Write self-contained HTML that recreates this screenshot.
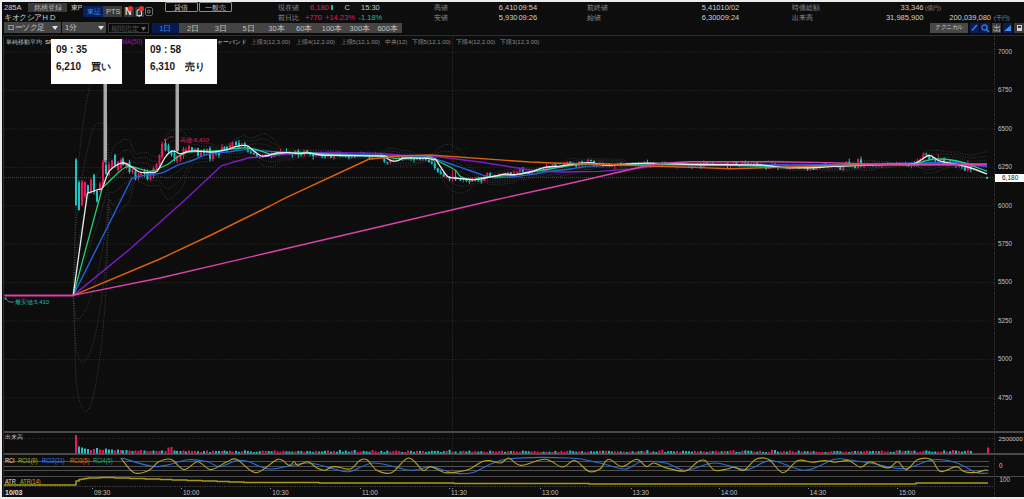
<!DOCTYPE html>
<html><head><meta charset="utf-8"><style>
html,body{margin:0;padding:0;width:1024px;height:499px;overflow:hidden;background:#ececec;font-family:'Liberation Sans',sans-serif}
#app{position:absolute;left:2px;top:2px;width:1022px;height:495px;background:#0d0d0d;overflow:hidden}
#root{position:absolute;left:-2px;top:-2px;width:1024px;height:499px}
</style></head><body>
<div id="app"><div id="root">

<svg width="1024" height="499" style="position:absolute;left:0;top:0">
<g shape-rendering="crispEdges">
  <line x1="3.5" y1="35.5" x2="1024" y2="35.5" stroke="#2e2e2e" stroke-width="1"/>
  <line x1="3.5" y1="35.5" x2="3.5" y2="497" stroke="#2e2e2e" stroke-width="1"/>
  <line x1="994.5" y1="35.5" x2="994.5" y2="497" stroke="#343434" stroke-width="1" stroke-dasharray="1.5 1"/>
</g>
<line x1="4" y1="397.8" x2="994" y2="397.8" stroke="#282828" stroke-width="1" stroke-dasharray="1 1.2"/><line x1="4" y1="359.4" x2="994" y2="359.4" stroke="#282828" stroke-width="1" stroke-dasharray="1 1.2"/><line x1="4" y1="321.0" x2="994" y2="321.0" stroke="#282828" stroke-width="1" stroke-dasharray="1 1.2"/><line x1="4" y1="282.6" x2="994" y2="282.6" stroke="#282828" stroke-width="1" stroke-dasharray="1 1.2"/><line x1="4" y1="244.2" x2="994" y2="244.2" stroke="#282828" stroke-width="1" stroke-dasharray="1 1.2"/><line x1="4" y1="205.8" x2="994" y2="205.8" stroke="#282828" stroke-width="1" stroke-dasharray="1 1.2"/><line x1="4" y1="167.4" x2="994" y2="167.4" stroke="#282828" stroke-width="1" stroke-dasharray="1 1.2"/><line x1="4" y1="129.0" x2="994" y2="129.0" stroke="#282828" stroke-width="1" stroke-dasharray="1 1.2"/><line x1="4" y1="90.6" x2="994" y2="90.6" stroke="#282828" stroke-width="1" stroke-dasharray="1 1.2"/><line x1="4" y1="52.2" x2="994" y2="52.2" stroke="#282828" stroke-width="1" stroke-dasharray="1 1.2"/>
<line x1="452.5" y1="36" x2="452.5" y2="487" stroke="#2e2e2e" stroke-width="1" stroke-dasharray="1 1.5"/>
<line x1="4" y1="177.6" x2="994" y2="177.6" stroke="#484848" stroke-width="1" stroke-dasharray="1 1"/>
<path d="M73.2,295.4 L76.0,381.6 C76.5,384.2 78.1,394.8 79.0,398.8 C79.9,402.7 81.1,405.9 82.0,407.8 C82.9,409.7 84.1,411.2 85.0,411.4 C85.9,411.7 87.1,410.9 88.0,409.7 C88.9,408.6 90.1,406.2 91.0,403.7 C91.9,401.3 93.1,397.4 94.0,393.4 C94.9,389.4 96.1,382.5 97.0,376.9 C97.9,371.2 99.1,363.1 100.0,355.9 C100.9,348.7 102.1,338.6 103.0,328.7 C103.9,318.8 105.1,307.2 106.0,289.7 C106.9,272.1 108.1,222.8 109.0,211.6 C109.9,200.4 111.1,214.5 112.0,214.9 C112.9,215.4 114.1,215.2 115.0,214.8 C115.9,214.4 117.1,212.8 118.0,212.1 C118.9,211.4 120.2,210.8 121.0,210.0 C121.8,209.3 122.2,208.1 123.0,207.2 C123.8,206.3 125.5,204.9 126.5,204.0 C127.5,203.0 128.6,203.3 129.5,200.9 C130.4,198.5 131.6,191.2 132.5,188.1 C133.4,185.0 134.6,181.3 135.5,180.4 C136.4,179.4 137.7,181.3 138.5,181.7 C139.3,182.1 140.1,182.6 141.0,182.8 C141.9,183.1 143.5,183.2 144.5,183.5 C145.5,183.9 146.6,184.9 147.5,185.2 C148.4,185.5 149.6,185.7 150.5,185.7 C151.4,185.8 152.6,185.8 153.5,185.7 C154.4,185.7 155.6,185.2 156.5,185.3 C157.4,185.3 158.7,185.1 159.5,186.1 C160.3,187.2 161.1,190.5 162.0,192.2 C162.9,194.0 164.5,196.5 165.5,197.6 C166.5,198.8 167.6,199.6 168.5,199.7 C169.4,199.8 170.6,199.0 171.5,198.4 C172.4,197.7 173.7,196.3 174.5,195.5 C175.3,194.6 176.1,193.6 177.0,192.8 C177.9,192.0 179.5,191.1 180.5,190.0 C181.5,188.8 182.7,187.1 183.5,185.1 C184.3,183.2 185.2,179.4 186.0,177.2 C186.8,174.9 188.1,172.1 189.0,170.3 C189.9,168.5 191.1,166.4 192.0,165.2 C192.9,164.0 194.1,163.0 195.0,162.6 C195.9,162.2 197.1,162.7 198.0,162.6 C198.9,162.5 200.1,162.1 201.0,162.0 C201.9,161.8 203.1,161.7 204.0,161.6 C204.9,161.6 206.1,161.6 207.0,161.5 C207.9,161.5 209.1,161.3 210.0,161.0 C210.9,160.8 212.1,160.2 213.0,159.7 C213.9,159.2 215.1,157.9 216.0,157.6 C216.9,157.3 218.1,157.8 219.0,157.8 C219.9,157.9 221.2,158.0 222.0,158.1 C222.8,158.1 223.8,158.2 224.5,158.2 C225.2,158.3 226.2,158.2 227.0,158.4 C227.8,158.5 229.2,158.9 230.0,159.2 C230.8,159.5 231.6,160.2 232.5,160.5 C233.4,160.7 235.0,160.8 236.0,160.9 C237.0,161.0 238.1,161.0 239.0,161.0 C239.9,161.0 241.1,161.3 242.0,161.1 C242.8,161.0 244.0,160.5 244.9,159.9 C245.8,159.3 247.0,157.4 247.9,157.0 C248.8,156.5 250.0,156.9 250.9,156.9 C251.7,156.9 252.9,156.5 253.8,156.9 C254.7,157.3 255.9,158.6 256.8,159.5 C257.7,160.3 258.9,161.7 259.8,162.5 C260.6,163.3 261.8,164.3 262.7,164.9 C263.6,165.4 264.8,165.9 265.7,166.2 C266.6,166.4 267.8,166.5 268.7,166.6 C269.5,166.6 270.7,166.7 271.6,166.6 C272.5,166.5 273.7,166.3 274.6,165.9 C275.5,165.4 276.7,164.5 277.6,163.8 C278.4,163.0 279.6,161.5 280.5,161.0 C281.4,160.4 282.6,160.0 283.5,159.8 C284.4,159.7 285.6,159.9 286.5,159.9 C287.3,159.9 288.5,159.9 289.4,159.8 C290.3,159.8 291.5,159.9 292.4,159.8 C293.3,159.7 294.5,159.4 295.4,159.1 C296.2,158.9 297.4,158.3 298.3,158.2 C299.2,158.0 300.4,158.0 301.3,158.0 C302.2,157.9 303.4,157.8 304.3,157.6 C305.1,157.4 306.3,156.8 307.2,156.6 C308.1,156.4 309.3,156.2 310.2,156.2 C311.1,156.2 312.3,156.7 313.2,156.8 C314.1,156.9 315.2,157.0 316.1,157.0 C317.0,157.1 318.2,157.0 319.1,157.0 C320.0,157.1 321.2,157.3 322.1,157.5 C323.0,157.7 324.1,158.3 325.0,158.4 C325.9,158.6 327.1,158.3 328.0,158.3 C328.9,158.3 330.1,158.4 331.0,158.4 C331.9,158.5 333.0,158.5 333.9,158.5 C334.8,158.5 336.0,158.5 336.9,158.4 C337.8,158.4 339.0,158.4 339.9,158.2 C340.8,158.1 341.9,157.7 342.8,157.6 C343.7,157.5 344.9,157.5 345.8,157.6 C346.7,157.6 347.9,158.0 348.8,158.1 C349.7,158.2 350.8,158.3 351.7,158.3 C352.6,158.3 353.8,158.2 354.7,158.2 C355.6,158.2 356.8,158.2 357.7,158.2 C358.6,158.2 359.7,158.1 360.6,158.1 C361.5,158.1 362.7,158.3 363.6,158.3 C364.5,158.3 365.7,158.3 366.6,158.3 C367.5,158.4 368.6,158.6 369.5,158.7 C370.4,158.7 371.6,158.6 372.5,158.6 C373.4,158.6 374.6,158.6 375.5,158.6 C376.4,158.6 377.5,158.7 378.4,158.7 C379.3,158.7 380.5,158.4 381.4,158.6 C382.3,158.9 383.5,159.6 384.4,160.4 C385.3,161.1 386.4,162.9 387.3,163.6 C388.2,164.3 389.4,164.7 390.3,165.1 C391.2,165.4 392.4,165.7 393.3,165.9 C394.2,166.1 395.3,166.2 396.2,166.2 C397.1,166.2 398.3,165.9 399.2,165.9 C400.1,165.8 401.3,165.8 402.2,165.8 C403.1,165.8 404.2,165.8 405.1,165.8 C406.0,165.8 407.2,165.8 408.1,165.7 C409.0,165.7 410.2,165.5 411.1,165.3 C412.0,165.1 413.1,164.8 414.0,164.6 C414.9,164.4 416.1,164.1 417.0,164.0 C417.9,163.9 419.1,164.2 420.0,163.9 C420.9,163.7 422.0,162.8 422.9,162.5 C423.8,162.1 425.0,161.8 425.9,161.7 C426.8,161.7 428.0,161.8 428.9,162.0 C429.8,162.3 430.9,162.8 431.8,163.5 C432.7,164.2 433.9,165.6 434.8,166.8 C435.7,168.0 436.9,170.1 437.8,171.6 C438.7,173.1 439.9,175.2 440.7,176.6 C441.6,178.1 442.8,179.9 443.7,181.2 C444.6,182.5 445.8,184.2 446.7,185.3 C447.6,186.4 448.8,187.9 449.6,188.7 C450.5,189.6 451.7,190.4 452.6,190.9 C453.5,191.4 454.4,191.7 455.6,192.0 C456.8,192.4 459.3,193.0 460.5,193.1 C461.7,193.2 462.6,192.9 463.5,192.7 C464.4,192.4 465.5,191.9 466.4,191.5 C467.3,191.0 468.5,190.4 469.4,189.8 C470.3,189.1 471.5,187.9 472.4,187.2 C473.3,186.5 474.4,185.6 475.3,185.0 C476.2,184.4 477.4,183.8 478.3,183.5 C479.2,183.2 480.4,183.1 481.3,183.0 C482.2,182.9 483.3,182.7 484.2,182.7 C485.1,182.8 486.3,183.3 487.2,183.6 C488.1,183.8 489.3,184.3 490.2,184.5 C491.1,184.7 492.2,184.6 493.1,184.7 C494.0,184.7 495.2,184.7 496.1,184.8 C497.0,184.8 498.2,185.0 499.1,185.0 C500.0,185.0 501.1,185.1 502.0,184.9 C502.9,184.8 504.1,184.1 505.0,183.9 C505.9,183.7 507.1,183.6 508.0,183.5 C508.9,183.4 510.0,183.4 510.9,183.2 C511.8,183.0 513.0,182.8 513.9,182.4 C514.8,182.0 516.0,181.0 516.9,180.6 C517.8,180.1 518.9,179.4 519.8,179.3 C520.7,179.2 521.9,179.6 522.8,179.6 C523.7,179.6 524.9,179.6 525.8,179.4 C526.7,179.2 527.9,178.6 528.7,178.3 C529.6,178.0 530.8,177.7 531.7,177.5 C532.6,177.3 533.8,177.1 534.7,177.0 C535.6,176.9 536.8,176.8 537.6,176.7 C538.5,176.7 539.7,176.6 540.6,176.6 C541.5,176.5 542.7,176.5 543.6,176.4 C544.5,176.3 545.7,176.1 546.5,176.0 C547.4,175.9 548.6,175.7 549.5,175.7 C550.4,175.8 551.6,176.0 552.5,176.2 C553.4,176.3 554.6,176.6 555.4,176.7 C556.3,176.8 557.5,176.8 558.4,176.7 C559.3,176.6 560.5,176.4 561.4,176.2 C562.3,176.0 563.5,175.6 564.3,175.4 C565.2,175.2 566.4,175.2 567.3,175.1 C568.2,175.0 569.4,174.8 570.3,174.6 C571.2,174.4 572.4,174.0 573.2,173.8 C574.1,173.5 575.3,173.4 576.2,173.0 C577.1,172.7 578.3,172.1 579.2,171.7 C580.1,171.2 581.3,170.7 582.1,170.4 C583.0,170.0 584.2,169.7 585.1,169.5 C586.0,169.4 587.2,169.5 588.1,169.5 C589.0,169.5 590.2,169.7 591.0,169.4 C591.9,169.2 593.1,168.0 594.0,167.7 C594.9,167.4 596.1,167.5 597.0,167.4 C597.9,167.4 599.1,167.5 599.9,167.6 C600.8,167.6 602.0,167.7 602.9,167.7 C603.8,167.7 605.0,167.8 605.9,167.8 C606.8,167.9 608.0,167.9 608.9,167.9 C609.7,167.9 610.9,168.0 611.8,168.1 C612.7,168.1 613.9,168.2 614.8,168.3 C615.7,168.3 616.9,168.3 617.8,168.3 C618.6,168.3 619.8,168.3 620.7,168.3 C621.6,168.2 622.8,168.1 623.7,167.9 C624.6,167.6 625.8,166.8 626.7,166.6 C627.5,166.3 628.7,166.5 629.6,166.4 C630.5,166.3 631.7,165.9 632.6,165.8 C633.5,165.8 634.7,165.8 635.6,165.8 C636.4,165.8 637.6,165.8 638.5,165.9 C639.4,165.9 640.6,165.8 641.5,165.8 C642.4,165.8 643.6,165.9 644.5,165.8 C645.3,165.7 646.5,165.3 647.4,165.1 C648.3,165.0 649.5,164.9 650.4,164.8 C651.3,164.8 652.5,164.8 653.4,164.9 C654.2,164.9 655.4,165.0 656.3,165.0 C657.2,165.1 658.4,165.3 659.3,165.4 C660.2,165.4 661.4,165.4 662.3,165.5 C663.1,165.5 664.3,165.6 665.2,165.7 C666.1,165.7 667.3,165.6 668.2,165.7 C669.1,165.7 670.3,165.6 671.2,165.8 C672.0,165.9 673.2,166.3 674.1,166.5 C675.0,166.7 676.2,166.9 677.1,167.0 C678.0,167.1 679.2,167.0 680.1,167.0 C680.9,167.0 682.1,167.0 683.0,167.0 C683.9,167.0 685.1,167.0 686.0,167.0 C686.9,167.0 688.1,167.0 689.0,167.1 C689.8,167.1 691.0,167.2 691.9,167.3 C692.8,167.3 694.0,167.4 694.9,167.4 C695.8,167.4 697.0,167.4 697.9,167.4 C698.8,167.4 699.9,167.3 700.8,167.3 C701.7,167.3 702.9,167.2 703.8,167.2 C704.7,167.3 705.9,167.5 706.8,167.5 C707.7,167.4 708.8,167.2 709.7,167.2 C710.6,167.1 711.8,166.9 712.7,166.8 C713.6,166.8 714.8,166.9 715.7,166.9 C716.6,166.9 717.7,166.8 718.6,166.8 C719.5,166.8 720.7,166.7 721.6,166.7 C722.5,166.7 723.7,166.7 724.6,166.7 C725.5,166.7 726.6,166.6 727.5,166.5 C728.4,166.4 729.6,166.3 730.5,166.2 C731.4,166.2 732.6,166.5 733.5,166.4 C734.4,166.3 735.5,165.8 736.4,165.8 C737.3,165.8 738.5,166.3 739.4,166.4 C740.3,166.4 741.5,166.3 742.4,166.3 C743.3,166.3 744.4,166.5 745.3,166.6 C746.2,166.6 747.4,166.6 748.3,166.6 C749.2,166.6 750.4,166.6 751.3,166.5 C752.2,166.5 753.3,166.5 754.2,166.5 C755.1,166.5 756.3,166.4 757.2,166.4 C758.1,166.4 759.3,166.5 760.2,166.5 C761.1,166.5 762.2,166.4 763.1,166.5 C764.0,166.7 765.2,167.4 766.1,167.6 C767.0,167.9 768.2,168.4 769.1,168.5 C770.0,168.6 771.1,168.5 772.0,168.5 C772.9,168.4 774.1,168.2 775.0,168.3 C775.9,168.3 777.1,168.5 778.0,168.6 C778.9,168.8 780.0,169.1 780.9,169.2 C781.8,169.3 783.0,169.2 783.9,169.3 C784.8,169.4 786.0,169.5 786.9,169.7 C787.8,169.9 788.9,170.4 789.8,170.5 C790.7,170.7 791.9,170.5 792.8,170.4 C793.7,170.4 794.9,170.3 795.8,170.3 C796.7,170.2 797.8,170.1 798.7,170.1 C799.6,170.1 800.8,170.2 801.7,170.3 C802.6,170.3 803.8,170.3 804.7,170.3 C805.6,170.3 806.7,170.5 807.6,170.4 C808.5,170.3 809.7,169.8 810.6,169.7 C811.5,169.5 812.7,169.5 813.6,169.6 C814.5,169.6 815.6,169.9 816.5,169.9 C817.4,170.0 818.6,169.7 819.5,169.8 C820.4,170.0 821.6,170.5 822.5,170.7 C823.4,170.9 824.6,170.9 825.4,170.9 C826.3,171.0 827.5,170.9 828.4,170.9 C829.3,170.9 830.5,171.0 831.4,171.0 C832.3,171.0 833.5,171.0 834.3,171.0 C835.2,171.0 836.4,170.9 837.3,170.9 C838.2,170.9 839.4,171.1 840.3,171.1 C841.2,171.1 842.4,170.8 843.2,170.8 C844.1,170.8 845.3,170.9 846.2,170.9 C847.1,170.9 848.3,170.8 849.2,170.7 C850.1,170.5 851.3,169.9 852.1,169.8 C853.0,169.6 854.2,169.8 855.1,169.8 C856.0,169.8 857.2,169.9 858.1,170.0 C859.0,170.1 860.2,170.4 861.0,170.4 C861.9,170.5 863.1,170.4 864.0,170.4 C864.9,170.4 866.1,170.4 867.0,170.4 C867.9,170.4 869.1,170.4 869.9,170.4 C870.8,170.3 872.0,170.4 872.9,170.2 C873.8,170.0 875.0,169.5 875.9,169.2 C876.8,168.8 878.0,168.1 878.8,168.0 C879.7,167.8 880.9,168.1 881.8,168.1 C882.7,168.1 883.9,168.2 884.8,168.1 C885.7,168.1 886.9,168.0 887.7,167.8 C888.6,167.6 889.8,167.1 890.7,166.9 C891.6,166.8 892.8,167.0 893.7,166.9 C894.6,166.7 895.8,166.4 896.6,166.2 C897.5,166.1 898.7,166.1 899.6,166.0 C900.5,166.0 901.7,166.0 902.6,166.0 C903.5,166.0 904.7,165.9 905.5,165.9 C906.4,166.0 907.6,166.1 908.5,166.1 C909.4,166.2 910.6,166.2 911.5,166.2 C912.4,166.2 913.6,166.3 914.5,166.3 C915.3,166.4 916.5,166.3 917.4,166.7 C918.3,167.0 919.5,167.8 920.4,168.5 C921.3,169.2 922.5,170.4 923.4,171.1 C924.2,171.8 925.4,172.9 926.3,173.2 C927.2,173.5 928.4,173.3 929.3,173.2 C930.2,173.1 931.4,172.9 932.3,172.7 C933.1,172.5 934.3,172.2 935.2,171.9 C936.1,171.7 937.3,171.4 938.2,171.1 C939.1,170.9 940.3,170.5 941.2,170.2 C942.0,169.8 943.2,168.9 944.1,168.6 C945.0,168.3 946.2,168.2 947.1,168.0 C948.0,167.8 949.2,167.5 950.1,167.3 C950.9,167.2 952.1,166.9 953.0,167.0 C953.9,167.1 955.1,167.7 956.0,168.1 C956.9,168.5 958.1,169.3 959.0,169.5 C959.8,169.7 961.0,169.1 961.9,169.3 C962.8,169.5 964.0,170.5 964.9,170.9 C965.8,171.3 967.0,171.6 967.9,171.9 C968.7,172.1 968.0,171.4 970.8,172.5 C973.7,173.6 984.6,178.1 987.0,179.1" fill="none" stroke="#5a5a5a" stroke-width="0.8" stroke-linejoin="round" stroke-dasharray="1 1.5" opacity="0.75"/>
<path d="M73.2,295.4 L76.0,350.0 C76.5,351.3 78.1,356.9 79.0,358.7 C79.9,360.5 81.1,361.4 82.0,361.8 C82.9,362.2 84.1,362.0 85.0,361.3 C85.9,360.6 87.1,358.8 88.0,357.2 C88.9,355.5 90.1,352.7 91.0,350.1 C91.9,347.6 93.1,343.7 94.0,340.1 C94.9,336.5 96.1,330.9 97.0,326.3 C97.9,321.7 99.1,315.0 100.0,309.2 C100.9,303.5 102.1,295.4 103.0,287.7 C103.9,280.1 105.1,270.9 106.0,258.2 C106.9,245.4 108.1,210.7 109.0,202.6 C109.9,194.5 111.1,204.2 112.0,204.3 C112.9,204.4 114.1,203.8 115.0,203.2 C115.9,202.7 117.1,201.4 118.0,200.7 C118.9,200.0 120.2,199.3 121.0,198.6 C121.8,197.9 122.2,196.8 123.0,195.9 C123.8,195.1 125.5,194.0 126.5,193.2 C127.5,192.4 128.6,192.5 129.5,190.7 C130.4,189.0 131.6,183.7 132.5,181.5 C133.4,179.3 134.6,176.7 135.5,176.0 C136.4,175.3 137.7,176.7 138.5,177.0 C139.3,177.2 140.1,177.6 141.0,177.8 C141.9,178.1 143.5,178.1 144.5,178.4 C145.5,178.7 146.6,179.5 147.5,179.8 C148.4,180.1 149.6,180.5 150.5,180.6 C151.4,180.8 152.6,180.8 153.5,180.8 C154.4,180.8 155.6,180.5 156.5,180.6 C157.4,180.6 158.7,180.5 159.5,181.1 C160.3,181.7 161.1,183.7 162.0,184.7 C162.9,185.7 164.5,187.2 165.5,187.8 C166.5,188.3 167.6,188.6 168.5,188.5 C169.4,188.4 170.6,187.6 171.5,187.0 C172.4,186.4 173.7,185.2 174.5,184.5 C175.3,183.8 176.1,183.0 177.0,182.3 C177.9,181.7 179.5,181.0 180.5,180.0 C181.5,179.1 182.7,177.6 183.5,176.2 C184.3,174.7 185.2,171.8 186.0,170.1 C186.8,168.4 188.1,166.3 189.0,164.9 C189.9,163.5 191.1,161.9 192.0,161.0 C192.9,160.1 194.1,159.3 195.0,159.0 C195.9,158.7 197.1,159.1 198.0,159.1 C198.9,159.0 200.1,158.9 201.0,158.8 C201.9,158.8 203.1,158.7 204.0,158.7 C204.9,158.6 206.1,158.6 207.0,158.5 C207.9,158.5 209.1,158.3 210.0,158.1 C210.9,157.9 212.1,157.5 213.0,157.2 C213.9,156.8 215.1,155.8 216.0,155.6 C216.9,155.4 218.1,155.8 219.0,155.8 C219.9,155.9 221.2,155.9 222.0,155.9 C222.8,156.0 223.8,156.0 224.5,156.0 C225.2,156.0 226.2,156.0 227.0,156.1 C227.8,156.2 229.2,156.4 230.0,156.5 C230.8,156.7 231.6,157.1 232.5,157.2 C233.4,157.3 235.0,157.2 236.0,157.2 C237.0,157.2 238.1,157.1 239.0,157.1 C239.9,157.0 241.1,157.1 242.0,157.0 C242.8,156.8 244.0,156.4 244.9,155.9 C245.8,155.4 247.0,154.1 247.9,153.8 C248.8,153.4 250.0,153.7 250.9,153.7 C251.7,153.7 252.9,153.4 253.8,153.7 C254.7,154.0 255.9,155.0 256.8,155.6 C257.7,156.2 258.9,157.3 259.8,157.9 C260.6,158.5 261.8,159.3 262.7,159.7 C263.6,160.1 264.8,160.6 265.7,160.8 C266.6,161.1 267.8,161.2 268.7,161.4 C269.5,161.5 270.7,161.7 271.6,161.8 C272.5,161.8 273.7,161.8 274.6,161.6 C275.5,161.4 276.7,160.8 277.6,160.4 C278.4,160.0 279.6,159.1 280.5,158.7 C281.4,158.4 282.6,158.2 283.5,158.1 C284.4,158.0 285.6,158.1 286.5,158.1 C287.3,158.1 288.5,158.1 289.4,158.1 C290.3,158.1 291.5,158.1 292.4,158.1 C293.3,158.0 294.5,157.7 295.4,157.5 C296.2,157.3 297.4,156.8 298.3,156.7 C299.2,156.6 300.4,156.6 301.3,156.6 C302.2,156.5 303.4,156.4 304.3,156.3 C305.1,156.1 306.3,155.6 307.2,155.5 C308.1,155.3 309.3,155.1 310.2,155.1 C311.1,155.2 312.3,155.5 313.2,155.6 C314.1,155.7 315.2,155.8 316.1,155.8 C317.0,155.9 318.2,155.8 319.1,155.9 C320.0,156.0 321.2,156.1 322.1,156.3 C323.0,156.5 324.1,156.9 325.0,157.0 C325.9,157.1 327.1,156.9 328.0,156.9 C328.9,156.9 330.1,157.0 331.0,157.1 C331.9,157.1 333.0,157.2 333.9,157.2 C334.8,157.2 336.0,157.1 336.9,157.1 C337.8,157.1 339.0,157.1 339.9,157.0 C340.8,157.0 341.9,156.7 342.8,156.7 C343.7,156.7 344.9,156.7 345.8,156.8 C346.7,156.8 347.9,157.1 348.8,157.2 C349.7,157.3 350.8,157.4 351.7,157.4 C352.6,157.4 353.8,157.4 354.7,157.3 C355.6,157.3 356.8,157.4 357.7,157.3 C358.6,157.3 359.7,157.2 360.6,157.2 C361.5,157.2 362.7,157.3 363.6,157.3 C364.5,157.3 365.7,157.3 366.6,157.3 C367.5,157.4 368.6,157.5 369.5,157.6 C370.4,157.6 371.6,157.6 372.5,157.6 C373.4,157.6 374.6,157.6 375.5,157.6 C376.4,157.6 377.5,157.6 378.4,157.6 C379.3,157.6 380.5,157.4 381.4,157.6 C382.3,157.8 383.5,158.3 384.4,158.8 C385.3,159.3 386.4,160.6 387.3,161.2 C388.2,161.7 389.4,162.0 390.3,162.3 C391.2,162.5 392.4,162.8 393.3,162.9 C394.2,163.1 395.3,163.3 396.2,163.3 C397.1,163.4 398.3,163.2 399.2,163.2 C400.1,163.2 401.3,163.2 402.2,163.2 C403.1,163.2 404.2,163.3 405.1,163.3 C406.0,163.3 407.2,163.3 408.1,163.3 C409.0,163.2 410.2,163.1 411.1,163.0 C412.0,162.9 413.1,162.8 414.0,162.7 C414.9,162.6 416.1,162.5 417.0,162.4 C417.9,162.3 419.1,162.5 420.0,162.3 C420.9,162.1 422.0,161.5 422.9,161.2 C423.8,161.0 425.0,160.7 425.9,160.7 C426.8,160.6 428.0,160.7 428.9,160.9 C429.8,161.1 430.9,161.4 431.8,161.9 C432.7,162.5 433.9,163.5 434.8,164.4 C435.7,165.2 436.9,166.8 437.8,167.9 C438.7,169.0 439.9,170.6 440.7,171.7 C441.6,172.8 442.8,174.2 443.7,175.3 C444.6,176.3 445.8,177.6 446.7,178.5 C447.6,179.4 448.8,180.6 449.6,181.3 C450.5,182.0 451.7,182.8 452.6,183.3 C453.5,183.8 454.4,184.2 455.6,184.6 C456.8,185.0 459.3,185.7 460.5,185.9 C461.7,186.1 462.6,186.2 463.5,186.2 C464.4,186.2 465.5,186.0 466.4,185.9 C467.3,185.8 468.5,185.6 469.4,185.3 C470.3,185.0 471.5,184.4 472.4,184.0 C473.3,183.6 474.4,183.1 475.3,182.8 C476.2,182.5 477.4,182.1 478.3,181.9 C479.2,181.8 480.4,181.8 481.3,181.8 C482.2,181.7 483.3,181.6 484.2,181.6 C485.1,181.7 486.3,182.0 487.2,182.1 C488.1,182.3 489.3,182.6 490.2,182.7 C491.1,182.8 492.2,182.8 493.1,182.8 C494.0,182.8 495.2,182.7 496.1,182.7 C497.0,182.7 498.2,182.8 499.1,182.7 C500.0,182.7 501.1,182.7 502.0,182.5 C502.9,182.4 504.1,181.9 505.0,181.7 C505.9,181.5 507.1,181.4 508.0,181.2 C508.9,181.1 510.0,181.0 510.9,180.9 C511.8,180.7 513.0,180.5 513.9,180.2 C514.8,179.9 516.0,179.1 516.9,178.7 C517.8,178.4 518.9,177.8 519.8,177.6 C520.7,177.5 521.9,177.7 522.8,177.7 C523.7,177.6 524.9,177.6 525.8,177.4 C526.7,177.3 527.9,176.8 528.7,176.6 C529.6,176.4 530.8,176.1 531.7,176.0 C532.6,175.8 533.8,175.7 534.7,175.6 C535.6,175.4 536.8,175.3 537.6,175.3 C538.5,175.2 539.7,175.1 540.6,175.0 C541.5,175.0 542.7,174.9 543.6,174.8 C544.5,174.7 545.7,174.5 546.5,174.4 C547.4,174.3 548.6,174.1 549.5,174.1 C550.4,174.0 551.6,174.1 552.5,174.2 C553.4,174.2 554.6,174.4 555.4,174.4 C556.3,174.4 557.5,174.4 558.4,174.3 C559.3,174.3 560.5,174.1 561.4,173.9 C562.3,173.7 563.5,173.3 564.3,173.1 C565.2,172.9 566.4,172.8 567.3,172.6 C568.2,172.4 569.4,172.2 570.3,172.0 C571.2,171.8 572.4,171.4 573.2,171.2 C574.1,171.1 575.3,170.9 576.2,170.6 C577.1,170.4 578.3,169.9 579.2,169.6 C580.1,169.2 581.3,168.8 582.1,168.5 C583.0,168.3 584.2,168.0 585.1,167.9 C586.0,167.7 587.2,167.8 588.1,167.7 C589.0,167.7 590.2,167.7 591.0,167.5 C591.9,167.3 593.1,166.5 594.0,166.2 C594.9,166.0 596.1,166.0 597.0,166.0 C597.9,166.0 599.1,166.1 599.9,166.1 C600.8,166.2 602.0,166.2 602.9,166.3 C603.8,166.3 605.0,166.4 605.9,166.4 C606.8,166.4 608.0,166.4 608.9,166.5 C609.7,166.5 610.9,166.5 611.8,166.6 C612.7,166.6 613.9,166.7 614.8,166.7 C615.7,166.8 616.9,166.7 617.8,166.7 C618.6,166.7 619.8,166.8 620.7,166.8 C621.6,166.7 622.8,166.7 623.7,166.6 C624.6,166.4 625.8,165.9 626.7,165.8 C627.5,165.7 628.7,165.8 629.6,165.7 C630.5,165.6 631.7,165.4 632.6,165.3 C633.5,165.2 634.7,165.2 635.6,165.2 C636.4,165.2 637.6,165.3 638.5,165.3 C639.4,165.3 640.6,165.2 641.5,165.2 C642.4,165.2 643.6,165.3 644.5,165.2 C645.3,165.1 646.5,164.8 647.4,164.7 C648.3,164.6 649.5,164.5 650.4,164.5 C651.3,164.5 652.5,164.5 653.4,164.5 C654.2,164.6 655.4,164.6 656.3,164.7 C657.2,164.7 658.4,164.9 659.3,164.9 C660.2,165.0 661.4,164.9 662.3,164.9 C663.1,165.0 664.3,165.0 665.2,165.1 C666.1,165.1 667.3,165.0 668.2,165.0 C669.1,165.0 670.3,165.0 671.2,165.1 C672.0,165.2 673.2,165.6 674.1,165.7 C675.0,165.9 676.2,166.0 677.1,166.1 C678.0,166.1 679.2,166.1 680.1,166.1 C680.9,166.1 682.1,166.1 683.0,166.1 C683.9,166.1 685.1,166.0 686.0,166.0 C686.9,166.0 688.1,166.1 689.0,166.1 C689.8,166.1 691.0,166.2 691.9,166.3 C692.8,166.3 694.0,166.3 694.9,166.4 C695.8,166.4 697.0,166.4 697.9,166.4 C698.8,166.4 699.9,166.4 700.8,166.4 C701.7,166.4 702.9,166.4 703.8,166.4 C704.7,166.4 705.9,166.5 706.8,166.5 C707.7,166.5 708.8,166.3 709.7,166.3 C710.6,166.2 711.8,166.0 712.7,166.0 C713.6,165.9 714.8,166.0 715.7,166.0 C716.6,166.0 717.7,166.0 718.6,166.0 C719.5,166.0 720.7,166.0 721.6,166.0 C722.5,166.0 723.7,166.0 724.6,166.0 C725.5,165.9 726.6,165.8 727.5,165.8 C728.4,165.7 729.6,165.6 730.5,165.6 C731.4,165.6 732.6,165.7 733.5,165.6 C734.4,165.6 735.5,165.2 736.4,165.2 C737.3,165.2 738.5,165.5 739.4,165.6 C740.3,165.6 741.5,165.5 742.4,165.6 C743.3,165.6 744.4,165.7 745.3,165.7 C746.2,165.7 747.4,165.7 748.3,165.7 C749.2,165.7 750.4,165.7 751.3,165.7 C752.2,165.7 753.3,165.7 754.2,165.6 C755.1,165.6 756.3,165.6 757.2,165.6 C758.1,165.6 759.3,165.6 760.2,165.6 C761.1,165.7 762.2,165.5 763.1,165.7 C764.0,165.8 765.2,166.2 766.1,166.5 C767.0,166.7 768.2,167.1 769.1,167.2 C770.0,167.3 771.1,167.2 772.0,167.2 C772.9,167.2 774.1,167.0 775.0,167.0 C775.9,167.0 777.1,167.2 778.0,167.3 C778.9,167.4 780.0,167.7 780.9,167.8 C781.8,167.9 783.0,167.9 783.9,168.0 C784.8,168.1 786.0,168.1 786.9,168.3 C787.8,168.5 788.9,168.9 789.8,169.0 C790.7,169.1 791.9,169.0 792.8,169.0 C793.7,169.0 794.9,169.0 795.8,169.0 C796.7,169.0 797.8,169.0 798.7,169.0 C799.6,169.0 800.8,169.1 801.7,169.1 C802.6,169.1 803.8,169.1 804.7,169.1 C805.6,169.1 806.7,169.3 807.6,169.3 C808.5,169.3 809.7,169.0 810.6,168.9 C811.5,168.8 812.7,168.9 813.6,168.9 C814.5,168.9 815.6,169.1 816.5,169.2 C817.4,169.2 818.6,169.0 819.5,169.1 C820.4,169.2 821.6,169.6 822.5,169.6 C823.4,169.7 824.6,169.7 825.4,169.7 C826.3,169.7 827.5,169.6 828.4,169.6 C829.3,169.6 830.5,169.7 831.4,169.7 C832.3,169.7 833.5,169.6 834.3,169.6 C835.2,169.6 836.4,169.5 837.3,169.5 C838.2,169.5 839.4,169.7 840.3,169.7 C841.2,169.7 842.4,169.5 843.2,169.5 C844.1,169.4 845.3,169.5 846.2,169.4 C847.1,169.4 848.3,169.3 849.2,169.1 C850.1,169.0 851.3,168.6 852.1,168.5 C853.0,168.4 854.2,168.5 855.1,168.5 C856.0,168.5 857.2,168.6 858.1,168.6 C859.0,168.7 860.2,168.8 861.0,168.9 C861.9,168.9 863.1,168.8 864.0,168.8 C864.9,168.8 866.1,168.8 867.0,168.8 C867.9,168.8 869.1,168.7 869.9,168.7 C870.8,168.7 872.0,168.7 872.9,168.6 C873.8,168.4 875.0,168.0 875.9,167.8 C876.8,167.5 878.0,167.0 878.8,166.9 C879.7,166.8 880.9,167.0 881.8,167.0 C882.7,167.0 883.9,167.1 884.8,167.1 C885.7,167.1 886.9,167.0 887.7,166.8 C888.6,166.7 889.8,166.3 890.7,166.2 C891.6,166.1 892.8,166.2 893.7,166.2 C894.6,166.1 895.8,165.9 896.6,165.8 C897.5,165.7 898.7,165.6 899.6,165.6 C900.5,165.6 901.7,165.6 902.6,165.6 C903.5,165.6 904.7,165.6 905.5,165.6 C906.4,165.6 907.6,165.7 908.5,165.7 C909.4,165.8 910.6,165.7 911.5,165.7 C912.4,165.7 913.6,165.8 914.5,165.8 C915.3,165.8 916.5,165.8 917.4,166.0 C918.3,166.1 919.5,166.6 920.4,167.0 C921.3,167.4 922.5,168.2 923.4,168.5 C924.2,168.9 925.4,169.5 926.3,169.6 C927.2,169.8 928.4,169.5 929.3,169.4 C930.2,169.3 931.4,169.1 932.3,168.9 C933.1,168.8 934.3,168.5 935.2,168.3 C936.1,168.2 937.3,167.9 938.2,167.7 C939.1,167.5 940.3,167.2 941.2,166.9 C942.0,166.6 943.2,165.9 944.1,165.7 C945.0,165.5 946.2,165.4 947.1,165.3 C948.0,165.1 949.2,164.9 950.1,164.8 C950.9,164.7 952.1,164.5 953.0,164.5 C953.9,164.6 955.1,165.1 956.0,165.4 C956.9,165.7 958.1,166.4 959.0,166.6 C959.8,166.8 961.0,166.5 961.9,166.8 C962.8,167.0 964.0,167.8 964.9,168.1 C965.8,168.5 967.0,168.8 967.9,169.0 C968.7,169.2 968.0,168.8 970.8,169.6 C973.7,170.4 984.6,173.8 987.0,174.5" fill="none" stroke="#5a5a5a" stroke-width="0.8" stroke-linejoin="round" stroke-dasharray="1 1.5" opacity="0.75"/>
<path d="M73.2,295.4 L76.0,318.5 C76.5,318.5 78.1,319.0 79.0,318.6 C79.9,318.2 81.1,317.0 82.0,315.9 C82.9,314.8 84.1,312.9 85.0,311.2 C85.9,309.5 87.1,306.8 88.0,304.6 C88.9,302.4 90.1,299.2 91.0,296.5 C91.9,293.8 93.1,289.9 94.0,286.8 C94.9,283.7 96.1,279.3 97.0,275.7 C97.9,272.1 99.1,267.0 100.0,262.6 C100.9,258.3 102.1,252.1 103.0,246.7 C103.9,241.3 105.1,234.6 106.0,226.7 C106.9,218.7 108.1,198.5 109.0,193.6 C109.9,188.7 111.1,194.0 112.0,193.7 C112.9,193.4 114.1,192.3 115.0,191.7 C115.9,191.0 117.1,189.9 118.0,189.3 C118.9,188.6 120.2,187.8 121.0,187.2 C121.8,186.5 122.2,185.4 123.0,184.7 C123.8,184.0 125.5,183.1 126.5,182.5 C127.5,181.8 128.6,181.7 129.5,180.5 C130.4,179.4 131.6,176.2 132.5,174.9 C133.4,173.5 134.6,172.0 135.5,171.6 C136.4,171.2 137.7,172.0 138.5,172.2 C139.3,172.4 140.1,172.7 141.0,172.8 C141.9,173.0 143.5,173.0 144.5,173.2 C145.5,173.5 146.6,174.0 147.5,174.4 C148.4,174.7 149.6,175.3 150.5,175.5 C151.4,175.8 152.6,175.8 153.5,175.9 C154.4,175.9 155.6,175.8 156.5,175.8 C157.4,175.9 158.7,175.8 159.5,176.0 C160.3,176.2 161.1,176.9 162.0,177.2 C162.9,177.5 164.5,177.9 165.5,177.9 C166.5,177.9 167.6,177.7 168.5,177.3 C169.4,177.0 170.6,176.3 171.5,175.7 C172.4,175.1 173.7,174.1 174.5,173.6 C175.3,173.0 176.1,172.4 177.0,171.9 C177.9,171.3 179.5,170.8 180.5,170.1 C181.5,169.4 182.7,168.2 183.5,167.2 C184.3,166.1 185.2,164.2 186.0,163.1 C186.8,161.9 188.1,160.4 189.0,159.5 C189.9,158.5 191.1,157.4 192.0,156.8 C192.9,156.2 194.1,155.6 195.0,155.4 C195.9,155.2 197.1,155.5 198.0,155.5 C198.9,155.6 200.1,155.6 201.0,155.7 C201.9,155.7 203.1,155.7 204.0,155.7 C204.9,155.7 206.1,155.6 207.0,155.5 C207.9,155.4 209.1,155.4 210.0,155.2 C210.9,155.1 212.1,154.9 213.0,154.6 C213.9,154.4 215.1,153.8 216.0,153.7 C216.9,153.6 218.1,153.8 219.0,153.8 C219.9,153.8 221.2,153.8 222.0,153.8 C222.8,153.8 223.8,153.8 224.5,153.8 C225.2,153.8 226.2,153.8 227.0,153.8 C227.8,153.8 229.2,153.9 230.0,153.9 C230.8,153.9 231.6,153.9 232.5,153.9 C233.4,153.8 235.0,153.6 236.0,153.5 C237.0,153.4 238.1,153.2 239.0,153.1 C239.9,153.0 241.1,153.0 242.0,152.8 C242.8,152.6 244.0,152.2 244.9,151.9 C245.8,151.6 247.0,150.8 247.9,150.6 C248.8,150.4 250.0,150.5 250.9,150.5 C251.7,150.5 252.9,150.3 253.8,150.5 C254.7,150.7 255.9,151.3 256.8,151.8 C257.7,152.2 258.9,152.8 259.8,153.3 C260.6,153.7 261.8,154.2 262.7,154.5 C263.6,154.9 264.8,155.2 265.7,155.5 C266.6,155.7 267.8,156.0 268.7,156.2 C269.5,156.4 270.7,156.8 271.6,156.9 C272.5,157.1 273.7,157.2 274.6,157.3 C275.5,157.3 276.7,157.2 277.6,157.0 C278.4,156.9 279.6,156.6 280.5,156.5 C281.4,156.4 282.6,156.3 283.5,156.3 C284.4,156.3 285.6,156.3 286.5,156.3 C287.3,156.3 288.5,156.3 289.4,156.3 C290.3,156.3 291.5,156.4 292.4,156.3 C293.3,156.2 294.5,156.0 295.4,155.8 C296.2,155.7 297.4,155.3 298.3,155.2 C299.2,155.1 300.4,155.2 301.3,155.1 C302.2,155.1 303.4,155.0 304.3,154.9 C305.1,154.8 306.3,154.4 307.2,154.3 C308.1,154.2 309.3,154.1 310.2,154.1 C311.1,154.1 312.3,154.4 313.2,154.4 C314.1,154.5 315.2,154.6 316.1,154.6 C317.0,154.7 318.2,154.7 319.1,154.8 C320.0,154.8 321.2,155.0 322.1,155.1 C323.0,155.2 324.1,155.5 325.0,155.6 C325.9,155.6 327.1,155.5 328.0,155.5 C328.9,155.5 330.1,155.6 331.0,155.7 C331.9,155.7 333.0,155.9 333.9,155.9 C334.8,155.9 336.0,155.8 336.9,155.8 C337.8,155.8 339.0,155.9 339.9,155.9 C340.8,155.9 341.9,155.8 342.8,155.8 C343.7,155.9 344.9,155.9 345.8,156.0 C346.7,156.0 347.9,156.2 348.8,156.3 C349.7,156.3 350.8,156.4 351.7,156.4 C352.6,156.5 353.8,156.5 354.7,156.5 C355.6,156.5 356.8,156.5 357.7,156.5 C358.6,156.5 359.7,156.3 360.6,156.3 C361.5,156.3 362.7,156.3 363.6,156.3 C364.5,156.3 365.7,156.3 366.6,156.3 C367.5,156.4 368.6,156.5 369.5,156.5 C370.4,156.6 371.6,156.6 372.5,156.6 C373.4,156.6 374.6,156.6 375.5,156.6 C376.4,156.6 377.5,156.6 378.4,156.6 C379.3,156.6 380.5,156.4 381.4,156.5 C382.3,156.6 383.5,156.9 384.4,157.3 C385.3,157.6 386.4,158.4 387.3,158.7 C388.2,159.0 389.4,159.3 390.3,159.5 C391.2,159.7 392.4,159.8 393.3,160.0 C394.2,160.1 395.3,160.4 396.2,160.4 C397.1,160.5 398.3,160.5 399.2,160.6 C400.1,160.6 401.3,160.6 402.2,160.7 C403.1,160.7 404.2,160.7 405.1,160.8 C406.0,160.8 407.2,160.8 408.1,160.8 C409.0,160.8 410.2,160.8 411.1,160.8 C412.0,160.8 413.1,160.8 414.0,160.8 C414.9,160.8 416.1,160.8 417.0,160.8 C417.9,160.7 419.1,160.8 420.0,160.6 C420.9,160.5 422.0,160.1 422.9,160.0 C423.8,159.8 425.0,159.7 425.9,159.6 C426.8,159.6 428.0,159.6 428.9,159.8 C429.8,159.9 430.9,160.1 431.8,160.4 C432.7,160.7 433.9,161.4 434.8,161.9 C435.7,162.5 436.9,163.5 437.8,164.2 C438.7,164.9 439.9,165.9 440.7,166.7 C441.6,167.4 442.8,168.5 443.7,169.3 C444.6,170.0 445.8,171.0 446.7,171.7 C447.6,172.4 448.8,173.3 449.6,173.9 C450.5,174.5 451.7,175.2 452.6,175.7 C453.5,176.2 454.4,176.7 455.6,177.2 C456.8,177.6 459.3,178.3 460.5,178.7 C461.7,179.1 462.6,179.4 463.5,179.7 C464.4,179.9 465.5,180.2 466.4,180.3 C467.3,180.5 468.5,180.8 469.4,180.8 C470.3,180.9 471.5,180.8 472.4,180.8 C473.3,180.7 474.4,180.6 475.3,180.5 C476.2,180.5 477.4,180.4 478.3,180.4 C479.2,180.4 480.4,180.5 481.3,180.5 C482.2,180.5 483.3,180.5 484.2,180.6 C485.1,180.6 486.3,180.7 487.2,180.7 C488.1,180.8 489.3,180.9 490.2,180.9 C491.1,180.9 492.2,180.9 493.1,180.9 C494.0,180.8 495.2,180.7 496.1,180.7 C497.0,180.6 498.2,180.6 499.1,180.5 C500.0,180.4 501.1,180.3 502.0,180.2 C502.9,180.0 504.1,179.6 505.0,179.4 C505.9,179.2 507.1,179.1 508.0,178.9 C508.9,178.8 510.0,178.7 510.9,178.5 C511.8,178.4 513.0,178.2 513.9,178.0 C514.8,177.7 516.0,177.2 516.9,176.9 C517.8,176.6 518.9,176.1 519.8,176.0 C520.7,175.8 521.9,175.8 522.8,175.7 C523.7,175.7 524.9,175.6 525.8,175.5 C526.7,175.4 527.9,175.1 528.7,175.0 C529.6,174.8 530.8,174.6 531.7,174.5 C532.6,174.4 533.8,174.3 534.7,174.2 C535.6,174.0 536.8,173.9 537.6,173.8 C538.5,173.7 539.7,173.6 540.6,173.5 C541.5,173.4 542.7,173.3 543.6,173.2 C544.5,173.1 545.7,173.0 546.5,172.8 C547.4,172.7 548.6,172.5 549.5,172.4 C550.4,172.3 551.6,172.2 552.5,172.2 C553.4,172.2 554.6,172.2 555.4,172.1 C556.3,172.1 557.5,172.1 558.4,172.0 C559.3,171.9 560.5,171.7 561.4,171.5 C562.3,171.3 563.5,170.9 564.3,170.7 C565.2,170.5 566.4,170.3 567.3,170.1 C568.2,169.9 569.4,169.6 570.3,169.4 C571.2,169.2 572.4,168.9 573.2,168.7 C574.1,168.6 575.3,168.4 576.2,168.3 C577.1,168.1 578.3,167.7 579.2,167.5 C580.1,167.2 581.3,166.9 582.1,166.7 C583.0,166.5 584.2,166.3 585.1,166.2 C586.0,166.1 587.2,166.0 588.1,165.9 C589.0,165.8 590.2,165.7 591.0,165.6 C591.9,165.4 593.1,164.9 594.0,164.7 C594.9,164.6 596.1,164.6 597.0,164.6 C597.9,164.6 599.1,164.6 599.9,164.7 C600.8,164.7 602.0,164.8 602.9,164.8 C603.8,164.8 605.0,164.9 605.9,164.9 C606.8,165.0 608.0,165.0 608.9,165.0 C609.7,165.0 610.9,165.1 611.8,165.1 C612.7,165.1 613.9,165.2 614.8,165.2 C615.7,165.2 616.9,165.2 617.8,165.2 C618.6,165.2 619.8,165.2 620.7,165.3 C621.6,165.3 622.8,165.3 623.7,165.3 C624.6,165.3 625.8,165.1 626.7,165.1 C627.5,165.0 628.7,165.1 629.6,165.0 C630.5,165.0 631.7,164.8 632.6,164.8 C633.5,164.7 634.7,164.7 635.6,164.7 C636.4,164.7 637.6,164.7 638.5,164.7 C639.4,164.7 640.6,164.6 641.5,164.6 C642.4,164.6 643.6,164.7 644.5,164.6 C645.3,164.5 646.5,164.3 647.4,164.3 C648.3,164.2 649.5,164.2 650.4,164.2 C651.3,164.1 652.5,164.2 653.4,164.2 C654.2,164.2 655.4,164.3 656.3,164.3 C657.2,164.4 658.4,164.5 659.3,164.5 C660.2,164.5 661.4,164.5 662.3,164.4 C663.1,164.4 664.3,164.4 665.2,164.4 C666.1,164.4 667.3,164.4 668.2,164.4 C669.1,164.4 670.3,164.4 671.2,164.5 C672.0,164.6 673.2,164.8 674.1,164.9 C675.0,165.0 676.2,165.1 677.1,165.2 C678.0,165.2 679.2,165.2 680.1,165.2 C680.9,165.2 682.1,165.2 683.0,165.2 C683.9,165.1 685.1,165.1 686.0,165.1 C686.9,165.1 688.1,165.1 689.0,165.1 C689.8,165.2 691.0,165.2 691.9,165.3 C692.8,165.3 694.0,165.3 694.9,165.3 C695.8,165.4 697.0,165.4 697.9,165.4 C698.8,165.5 699.9,165.5 700.8,165.6 C701.7,165.6 702.9,165.6 703.8,165.6 C704.7,165.6 705.9,165.6 706.8,165.6 C707.7,165.5 708.8,165.4 709.7,165.4 C710.6,165.3 711.8,165.1 712.7,165.1 C713.6,165.1 714.8,165.2 715.7,165.2 C716.6,165.2 717.7,165.2 718.6,165.2 C719.5,165.2 720.7,165.3 721.6,165.3 C722.5,165.2 723.7,165.2 724.6,165.2 C725.5,165.2 726.6,165.1 727.5,165.1 C728.4,165.0 729.6,165.0 730.5,165.0 C731.4,164.9 732.6,164.9 733.5,164.9 C734.4,164.8 735.5,164.6 736.4,164.6 C737.3,164.5 738.5,164.8 739.4,164.8 C740.3,164.8 741.5,164.8 742.4,164.8 C743.3,164.8 744.4,164.8 745.3,164.8 C746.2,164.8 747.4,164.8 748.3,164.8 C749.2,164.8 750.4,164.8 751.3,164.8 C752.2,164.8 753.3,164.8 754.2,164.8 C755.1,164.8 756.3,164.7 757.2,164.7 C758.1,164.7 759.3,164.8 760.2,164.8 C761.1,164.8 762.2,164.7 763.1,164.8 C764.0,164.9 765.2,165.1 766.1,165.3 C767.0,165.4 768.2,165.7 769.1,165.8 C770.0,165.9 771.1,165.9 772.0,165.9 C772.9,165.9 774.1,165.7 775.0,165.7 C775.9,165.7 777.1,165.9 778.0,166.0 C778.9,166.1 780.0,166.4 780.9,166.5 C781.8,166.6 783.0,166.6 783.9,166.7 C784.8,166.7 786.0,166.8 786.9,166.9 C787.8,167.0 788.9,167.4 789.8,167.5 C790.7,167.6 791.9,167.6 792.8,167.6 C793.7,167.7 794.9,167.7 795.8,167.7 C796.7,167.7 797.8,167.8 798.7,167.8 C799.6,167.8 800.8,167.9 801.7,167.9 C802.6,167.9 803.8,167.9 804.7,167.9 C805.6,168.0 806.7,168.2 807.6,168.2 C808.5,168.2 809.7,168.1 810.6,168.1 C811.5,168.2 812.7,168.2 813.6,168.2 C814.5,168.3 815.6,168.4 816.5,168.4 C817.4,168.4 818.6,168.4 819.5,168.4 C820.4,168.4 821.6,168.6 822.5,168.6 C823.4,168.6 824.6,168.5 825.4,168.4 C826.3,168.4 827.5,168.4 828.4,168.3 C829.3,168.3 830.5,168.3 831.4,168.3 C832.3,168.3 833.5,168.3 834.3,168.2 C835.2,168.2 836.4,168.1 837.3,168.1 C838.2,168.1 839.4,168.3 840.3,168.2 C841.2,168.2 842.4,168.2 843.2,168.1 C844.1,168.1 845.3,168.0 846.2,167.9 C847.1,167.8 848.3,167.7 849.2,167.6 C850.1,167.5 851.3,167.2 852.1,167.2 C853.0,167.1 854.2,167.2 855.1,167.2 C856.0,167.2 857.2,167.2 858.1,167.2 C859.0,167.2 860.2,167.3 861.0,167.3 C861.9,167.3 863.1,167.2 864.0,167.2 C864.9,167.2 866.1,167.2 867.0,167.1 C867.9,167.1 869.1,167.1 869.9,167.0 C870.8,167.0 872.0,167.0 872.9,166.9 C873.8,166.8 875.0,166.6 875.9,166.4 C876.8,166.2 878.0,165.9 878.8,165.8 C879.7,165.8 880.9,165.9 881.8,166.0 C882.7,166.0 883.9,166.1 884.8,166.0 C885.7,166.0 886.9,165.9 887.7,165.8 C888.6,165.7 889.8,165.5 890.7,165.4 C891.6,165.4 892.8,165.5 893.7,165.5 C894.6,165.4 895.8,165.4 896.6,165.3 C897.5,165.3 898.7,165.2 899.6,165.2 C900.5,165.2 901.7,165.2 902.6,165.2 C903.5,165.2 904.7,165.2 905.5,165.2 C906.4,165.2 907.6,165.3 908.5,165.3 C909.4,165.3 910.6,165.3 911.5,165.3 C912.4,165.3 913.6,165.3 914.5,165.3 C915.3,165.3 916.5,165.2 917.4,165.2 C918.3,165.3 919.5,165.4 920.4,165.5 C921.3,165.6 922.5,165.9 923.4,166.0 C924.2,166.0 925.4,166.1 926.3,166.1 C927.2,166.0 928.4,165.8 929.3,165.7 C930.2,165.5 931.4,165.3 932.3,165.2 C933.1,165.1 934.3,164.9 935.2,164.7 C936.1,164.6 937.3,164.4 938.2,164.2 C939.1,164.1 940.3,163.8 941.2,163.6 C942.0,163.4 943.2,163.0 944.1,162.8 C945.0,162.7 946.2,162.7 947.1,162.6 C948.0,162.5 949.2,162.3 950.1,162.2 C950.9,162.2 952.1,162.0 953.0,162.1 C953.9,162.2 955.1,162.4 956.0,162.7 C956.9,162.9 958.1,163.4 959.0,163.7 C959.8,163.9 961.0,164.0 961.9,164.2 C962.8,164.5 964.0,165.1 964.9,165.4 C965.8,165.7 967.0,166.0 967.9,166.2 C968.7,166.4 968.0,166.2 970.8,166.7 C973.7,167.3 984.6,169.4 987.0,169.9" fill="none" stroke="#5a5a5a" stroke-width="0.8" stroke-linejoin="round" stroke-dasharray="1 1.5" opacity="0.75"/>
<path d="M73.2,295.4 L76.0,286.9 C76.5,285.7 78.1,281.1 79.0,278.5 C79.9,276.0 81.1,272.6 82.0,270.0 C82.9,267.3 84.1,263.7 85.0,261.0 C85.9,258.4 87.1,254.8 88.0,252.1 C88.9,249.4 90.1,245.7 91.0,242.9 C91.9,240.1 93.1,236.2 94.0,233.5 C94.9,230.8 96.1,227.8 97.0,225.1 C97.9,222.5 99.1,218.9 100.0,216.0 C100.9,213.1 102.1,208.9 103.0,205.8 C103.9,202.6 105.1,198.4 106.0,195.2 C106.9,192.0 108.1,186.4 109.0,184.6 C109.9,182.8 111.1,183.8 112.0,183.1 C112.9,182.4 114.1,180.9 115.0,180.1 C115.9,179.3 117.1,178.5 118.0,177.8 C118.9,177.2 120.2,176.4 121.0,175.7 C121.8,175.1 122.2,174.0 123.0,173.4 C123.8,172.9 125.5,172.2 126.5,171.7 C127.5,171.3 128.6,170.9 129.5,170.4 C130.4,169.8 131.6,168.7 132.5,168.2 C133.4,167.8 134.6,167.4 135.5,167.3 C136.4,167.2 137.7,167.4 138.5,167.5 C139.3,167.6 140.1,167.7 141.0,167.8 C141.9,167.9 143.5,167.9 144.5,168.1 C145.5,168.2 146.6,168.6 147.5,169.0 C148.4,169.4 149.6,170.2 150.5,170.4 C151.4,170.7 152.6,170.8 153.5,170.9 C154.4,171.0 155.6,171.1 156.5,171.1 C157.4,171.1 158.7,171.2 159.5,170.9 C160.3,170.7 161.1,170.1 162.0,169.7 C162.9,169.2 164.5,168.5 165.5,168.0 C166.5,167.5 167.6,166.7 168.5,166.2 C169.4,165.6 170.6,164.9 171.5,164.4 C172.4,163.8 173.7,163.1 174.5,162.6 C175.3,162.2 176.1,161.8 177.0,161.4 C177.9,161.0 179.5,160.6 180.5,160.1 C181.5,159.6 182.7,158.8 183.5,158.2 C184.3,157.6 185.2,156.6 186.0,156.0 C186.8,155.4 188.1,154.6 189.0,154.1 C189.9,153.5 191.1,153.0 192.0,152.7 C192.9,152.3 194.1,152.0 195.0,151.9 C195.9,151.8 197.1,151.9 198.0,152.0 C198.9,152.1 200.1,152.4 201.0,152.5 C201.9,152.6 203.1,152.8 204.0,152.8 C204.9,152.8 206.1,152.6 207.0,152.5 C207.9,152.4 209.1,152.4 210.0,152.3 C210.9,152.3 212.1,152.2 213.0,152.1 C213.9,152.0 215.1,151.8 216.0,151.7 C216.9,151.7 218.1,151.8 219.0,151.8 C219.9,151.8 221.2,151.7 222.0,151.6 C222.8,151.6 223.8,151.6 224.5,151.6 C225.2,151.6 226.2,151.6 227.0,151.5 C227.8,151.5 229.2,151.4 230.0,151.2 C230.8,151.1 231.6,150.8 232.5,150.6 C233.4,150.4 235.0,150.0 236.0,149.8 C237.0,149.6 238.1,149.3 239.0,149.2 C239.9,149.0 241.1,148.8 242.0,148.6 C242.8,148.4 244.0,148.1 244.9,147.9 C245.8,147.7 247.0,147.5 247.9,147.4 C248.8,147.3 250.0,147.4 250.9,147.3 C251.7,147.3 252.9,147.3 253.8,147.4 C254.7,147.4 255.9,147.7 256.8,147.9 C257.7,148.1 258.9,148.4 259.8,148.6 C260.6,148.9 261.8,149.1 262.7,149.3 C263.6,149.6 264.8,149.8 265.7,150.1 C266.6,150.3 267.8,150.7 268.7,151.0 C269.5,151.3 270.7,151.8 271.6,152.1 C272.5,152.4 273.7,152.7 274.6,153.0 C275.5,153.2 276.7,153.5 277.6,153.7 C278.4,153.9 279.6,154.2 280.5,154.3 C281.4,154.4 282.6,154.5 283.5,154.5 C284.4,154.6 285.6,154.5 286.5,154.5 C287.3,154.5 288.5,154.5 289.4,154.5 C290.3,154.5 291.5,154.6 292.4,154.5 C293.3,154.5 294.5,154.3 295.4,154.2 C296.2,154.1 297.4,153.9 298.3,153.8 C299.2,153.7 300.4,153.8 301.3,153.7 C302.2,153.7 303.4,153.6 304.3,153.5 C305.1,153.5 306.3,153.2 307.2,153.2 C308.1,153.1 309.3,153.1 310.2,153.1 C311.1,153.1 312.3,153.2 313.2,153.3 C314.1,153.3 315.2,153.4 316.1,153.4 C317.0,153.5 318.2,153.5 319.1,153.6 C320.0,153.7 321.2,153.8 322.1,153.9 C323.0,154.0 324.1,154.1 325.0,154.2 C325.9,154.2 327.1,154.1 328.0,154.1 C328.9,154.1 330.1,154.2 331.0,154.3 C331.9,154.4 333.0,154.6 333.9,154.6 C334.8,154.6 336.0,154.5 336.9,154.5 C337.8,154.5 339.0,154.6 339.9,154.7 C340.8,154.7 341.9,154.9 342.8,155.0 C343.7,155.1 344.9,155.1 345.8,155.2 C346.7,155.2 347.9,155.3 348.8,155.3 C349.7,155.4 350.8,155.4 351.7,155.5 C352.6,155.5 353.8,155.6 354.7,155.6 C355.6,155.7 356.8,155.7 357.7,155.6 C358.6,155.6 359.7,155.5 360.6,155.4 C361.5,155.4 362.7,155.4 363.6,155.3 C364.5,155.3 365.7,155.3 366.6,155.3 C367.5,155.4 368.6,155.4 369.5,155.4 C370.4,155.5 371.6,155.6 372.5,155.6 C373.4,155.7 374.6,155.6 375.5,155.6 C376.4,155.6 377.5,155.5 378.4,155.5 C379.3,155.5 380.5,155.5 381.4,155.5 C382.3,155.5 383.5,155.6 384.4,155.7 C385.3,155.8 386.4,156.1 387.3,156.2 C388.2,156.4 389.4,156.6 390.3,156.7 C391.2,156.8 392.4,156.9 393.3,157.0 C394.2,157.2 395.3,157.4 396.2,157.5 C397.1,157.7 398.3,157.8 399.2,157.9 C400.1,158.0 401.3,158.1 402.2,158.1 C403.1,158.2 404.2,158.2 405.1,158.2 C406.0,158.3 407.2,158.2 408.1,158.3 C409.0,158.3 410.2,158.4 411.1,158.5 C412.0,158.6 413.1,158.8 414.0,158.9 C414.9,159.0 416.1,159.1 417.0,159.1 C417.9,159.1 419.1,159.0 420.0,159.0 C420.9,158.9 422.0,158.8 422.9,158.7 C423.8,158.7 425.0,158.6 425.9,158.6 C426.8,158.6 428.0,158.6 428.9,158.6 C429.8,158.7 430.9,158.7 431.8,158.8 C432.7,159.0 433.9,159.2 434.8,159.5 C435.7,159.7 436.9,160.2 437.8,160.5 C438.7,160.8 439.9,161.3 440.7,161.7 C441.6,162.1 442.8,162.8 443.7,163.3 C444.6,163.8 445.8,164.4 446.7,164.9 C447.6,165.4 448.8,166.0 449.6,166.5 C450.5,167.0 451.7,167.6 452.6,168.1 C453.5,168.6 454.4,169.3 455.6,169.8 C456.8,170.3 459.3,171.0 460.5,171.5 C461.7,172.0 462.6,172.7 463.5,173.2 C464.4,173.7 465.5,174.3 466.4,174.8 C467.3,175.3 468.5,175.9 469.4,176.4 C470.3,176.8 471.5,177.3 472.4,177.5 C473.3,177.8 474.4,178.1 475.3,178.3 C476.2,178.5 477.4,178.7 478.3,178.8 C479.2,179.0 480.4,179.1 481.3,179.2 C482.2,179.3 483.3,179.5 484.2,179.5 C485.1,179.5 486.3,179.4 487.2,179.3 C488.1,179.2 489.3,179.1 490.2,179.1 C491.1,179.0 492.2,179.0 493.1,179.0 C494.0,178.9 495.2,178.7 496.1,178.6 C497.0,178.5 498.2,178.4 499.1,178.2 C500.0,178.1 501.1,177.9 502.0,177.8 C502.9,177.6 504.1,177.4 505.0,177.2 C505.9,177.0 507.1,176.8 508.0,176.6 C508.9,176.5 510.0,176.3 510.9,176.2 C511.8,176.1 513.0,175.9 513.9,175.8 C514.8,175.6 516.0,175.3 516.9,175.1 C517.8,174.9 518.9,174.5 519.8,174.3 C520.7,174.1 521.9,173.9 522.8,173.8 C523.7,173.7 524.9,173.7 525.8,173.6 C526.7,173.5 527.9,173.4 528.7,173.3 C529.6,173.2 530.8,173.1 531.7,173.0 C532.6,172.9 533.8,172.8 534.7,172.7 C535.6,172.6 536.8,172.5 537.6,172.4 C538.5,172.3 539.7,172.0 540.6,171.9 C541.5,171.8 542.7,171.7 543.6,171.7 C544.5,171.6 545.7,171.4 546.5,171.3 C547.4,171.1 548.6,170.9 549.5,170.7 C550.4,170.6 551.6,170.3 552.5,170.2 C553.4,170.1 554.6,170.0 555.4,169.9 C556.3,169.8 557.5,169.8 558.4,169.7 C559.3,169.6 560.5,169.3 561.4,169.2 C562.3,169.0 563.5,168.6 564.3,168.4 C565.2,168.1 566.4,167.8 567.3,167.6 C568.2,167.3 569.4,167.0 570.3,166.8 C571.2,166.6 572.4,166.3 573.2,166.2 C574.1,166.1 575.3,166.0 576.2,165.9 C577.1,165.7 578.3,165.5 579.2,165.4 C580.1,165.2 581.3,165.0 582.1,164.9 C583.0,164.7 584.2,164.6 585.1,164.5 C586.0,164.4 587.2,164.2 588.1,164.1 C589.0,164.0 590.2,163.7 591.0,163.6 C591.9,163.5 593.1,163.3 594.0,163.2 C594.9,163.2 596.1,163.2 597.0,163.2 C597.9,163.2 599.1,163.2 599.9,163.2 C600.8,163.2 602.0,163.3 602.9,163.4 C603.8,163.4 605.0,163.5 605.9,163.5 C606.8,163.5 608.0,163.6 608.9,163.6 C609.7,163.6 610.9,163.6 611.8,163.6 C612.7,163.6 613.9,163.7 614.8,163.7 C615.7,163.7 616.9,163.7 617.8,163.7 C618.6,163.7 619.8,163.7 620.7,163.7 C621.6,163.8 622.8,163.9 623.7,164.0 C624.6,164.1 625.8,164.2 626.7,164.3 C627.5,164.4 628.7,164.4 629.6,164.4 C630.5,164.4 631.7,164.3 632.6,164.2 C633.5,164.2 634.7,164.2 635.6,164.1 C636.4,164.1 637.6,164.1 638.5,164.1 C639.4,164.1 640.6,164.0 641.5,164.0 C642.4,164.0 643.6,164.0 644.5,164.0 C645.3,164.0 646.5,163.9 647.4,163.9 C648.3,163.8 649.5,163.8 650.4,163.8 C651.3,163.8 652.5,163.9 653.4,163.9 C654.2,163.9 655.4,163.9 656.3,164.0 C657.2,164.0 658.4,164.0 659.3,164.0 C660.2,164.0 661.4,164.0 662.3,163.9 C663.1,163.9 664.3,163.8 665.2,163.8 C666.1,163.8 667.3,163.8 668.2,163.8 C669.1,163.8 670.3,163.8 671.2,163.9 C672.0,163.9 673.2,164.0 674.1,164.1 C675.0,164.1 676.2,164.2 677.1,164.2 C678.0,164.3 679.2,164.3 680.1,164.3 C680.9,164.3 682.1,164.2 683.0,164.2 C683.9,164.2 685.1,164.2 686.0,164.1 C686.9,164.1 688.1,164.2 689.0,164.2 C689.8,164.2 691.0,164.2 691.9,164.3 C692.8,164.3 694.0,164.3 694.9,164.3 C695.8,164.3 697.0,164.4 697.9,164.4 C698.8,164.5 699.9,164.7 700.8,164.7 C701.7,164.7 702.9,164.7 703.8,164.7 C704.7,164.7 705.9,164.7 706.8,164.6 C707.7,164.6 708.8,164.5 709.7,164.5 C710.6,164.4 711.8,164.3 712.7,164.3 C713.6,164.3 714.8,164.3 715.7,164.4 C716.6,164.4 717.7,164.4 718.6,164.5 C719.5,164.5 720.7,164.5 721.6,164.5 C722.5,164.5 723.7,164.5 724.6,164.4 C725.5,164.4 726.6,164.4 727.5,164.4 C728.4,164.4 729.6,164.3 730.5,164.3 C731.4,164.3 732.6,164.2 733.5,164.1 C734.4,164.1 735.5,163.9 736.4,163.9 C737.3,163.9 738.5,164.0 739.4,164.0 C740.3,164.0 741.5,164.1 742.4,164.1 C743.3,164.1 744.4,164.0 745.3,164.0 C746.2,163.9 747.4,164.0 748.3,164.0 C749.2,164.0 750.4,164.0 751.3,164.0 C752.2,163.9 753.3,163.9 754.2,163.9 C755.1,163.9 756.3,163.9 757.2,163.8 C758.1,163.8 759.3,163.9 760.2,163.9 C761.1,163.9 762.2,163.9 763.1,163.9 C764.0,163.9 765.2,164.0 766.1,164.1 C767.0,164.2 768.2,164.4 769.1,164.5 C770.0,164.5 771.1,164.6 772.0,164.6 C772.9,164.6 774.1,164.4 775.0,164.5 C775.9,164.5 777.1,164.6 778.0,164.7 C778.9,164.8 780.0,165.0 780.9,165.1 C781.8,165.2 783.0,165.3 783.9,165.3 C784.8,165.4 786.0,165.4 786.9,165.5 C787.8,165.6 788.9,165.8 789.8,165.9 C790.7,166.0 791.9,166.2 792.8,166.2 C793.7,166.3 794.9,166.4 795.8,166.4 C796.7,166.5 797.8,166.6 798.7,166.7 C799.6,166.7 800.8,166.7 801.7,166.7 C802.6,166.7 803.8,166.7 804.7,166.7 C805.6,166.8 806.7,167.0 807.6,167.1 C808.5,167.2 809.7,167.3 810.6,167.4 C811.5,167.5 812.7,167.5 813.6,167.5 C814.5,167.6 815.6,167.6 816.5,167.6 C817.4,167.7 818.6,167.7 819.5,167.7 C820.4,167.6 821.6,167.6 822.5,167.5 C823.4,167.4 824.6,167.2 825.4,167.2 C826.3,167.1 827.5,167.1 828.4,167.0 C829.3,167.0 830.5,167.0 831.4,167.0 C832.3,166.9 833.5,166.9 834.3,166.8 C835.2,166.8 836.4,166.8 837.3,166.7 C838.2,166.7 839.4,166.8 840.3,166.8 C841.2,166.8 842.4,166.8 843.2,166.8 C844.1,166.7 845.3,166.5 846.2,166.4 C847.1,166.3 848.3,166.2 849.2,166.1 C850.1,166.0 851.3,165.9 852.1,165.9 C853.0,165.9 854.2,165.9 855.1,165.9 C856.0,165.9 857.2,165.8 858.1,165.8 C859.0,165.8 860.2,165.7 861.0,165.7 C861.9,165.6 863.1,165.6 864.0,165.6 C864.9,165.6 866.1,165.5 867.0,165.5 C867.9,165.5 869.1,165.4 869.9,165.4 C870.8,165.4 872.0,165.4 872.9,165.3 C873.8,165.2 875.0,165.1 875.9,165.0 C876.8,165.0 878.0,164.8 878.8,164.8 C879.7,164.8 880.9,164.9 881.8,164.9 C882.7,164.9 883.9,165.0 884.8,165.0 C885.7,165.0 886.9,164.9 887.7,164.9 C888.6,164.8 889.8,164.7 890.7,164.7 C891.6,164.6 892.8,164.7 893.7,164.8 C894.6,164.8 895.8,164.9 896.6,164.9 C897.5,164.9 898.7,164.8 899.6,164.8 C900.5,164.8 901.7,164.8 902.6,164.8 C903.5,164.9 904.7,164.9 905.5,164.9 C906.4,164.9 907.6,164.9 908.5,164.9 C909.4,164.9 910.6,164.9 911.5,164.8 C912.4,164.8 913.6,164.8 914.5,164.8 C915.3,164.7 916.5,164.6 917.4,164.5 C918.3,164.4 919.5,164.2 920.4,164.1 C921.3,163.9 922.5,163.6 923.4,163.4 C924.2,163.1 925.4,162.8 926.3,162.5 C927.2,162.3 928.4,162.0 929.3,161.9 C930.2,161.7 931.4,161.6 932.3,161.5 C933.1,161.4 934.3,161.2 935.2,161.1 C936.1,161.0 937.3,160.9 938.2,160.8 C939.1,160.7 940.3,160.4 941.2,160.3 C942.0,160.2 943.2,160.0 944.1,160.0 C945.0,159.9 946.2,159.9 947.1,159.9 C948.0,159.8 949.2,159.7 950.1,159.7 C950.9,159.7 952.1,159.6 953.0,159.6 C953.9,159.7 955.1,159.8 956.0,160.0 C956.9,160.1 958.1,160.5 959.0,160.8 C959.8,161.0 961.0,161.4 961.9,161.7 C962.8,162.0 964.0,162.4 964.9,162.7 C965.8,162.9 967.0,163.1 967.9,163.3 C968.7,163.5 968.0,163.5 970.8,163.8 C973.7,164.1 984.6,165.1 987.0,165.3" fill="none" stroke="#5a5a5a" stroke-width="0.8" stroke-linejoin="round" stroke-dasharray="1 1.5" opacity="0.75"/>
<path d="M73.2,295.4 L76.0,255.3 C76.5,252.8 78.1,243.2 79.0,238.5 C79.9,233.8 81.1,228.2 82.0,224.0 C82.9,219.9 84.1,214.6 85.0,210.9 C85.9,207.2 87.1,202.8 88.0,199.6 C88.9,196.3 90.1,192.2 91.0,189.3 C91.9,186.4 93.1,182.4 94.0,180.2 C94.9,178.0 96.1,176.2 97.0,174.6 C97.9,172.9 99.1,170.8 100.0,169.3 C100.9,167.9 102.1,165.6 103.0,164.8 C103.9,163.9 105.1,162.1 106.0,163.7 C106.9,165.3 108.1,174.3 109.0,175.6 C109.9,176.9 111.1,173.6 112.0,172.5 C112.9,171.4 114.1,169.5 115.0,168.5 C115.9,167.6 117.1,167.0 118.0,166.4 C118.9,165.8 120.2,164.9 121.0,164.3 C121.8,163.6 122.2,162.7 123.0,162.2 C123.8,161.7 125.5,161.3 126.5,161.0 C127.5,160.7 128.6,160.1 129.5,160.2 C130.4,160.3 131.6,161.2 132.5,161.6 C133.4,162.0 134.6,162.7 135.5,162.9 C136.4,163.1 137.7,162.8 138.5,162.7 C139.3,162.7 140.1,162.8 141.0,162.8 C141.9,162.8 143.5,162.8 144.5,162.9 C145.5,163.0 146.6,163.2 147.5,163.6 C148.4,164.0 149.6,165.0 150.5,165.3 C151.4,165.7 152.6,165.9 153.5,166.0 C154.4,166.2 155.6,166.4 156.5,166.4 C157.4,166.4 158.7,166.5 159.5,165.9 C160.3,165.2 161.1,163.3 162.0,162.2 C162.9,161.0 164.5,159.2 165.5,158.1 C166.5,157.0 167.6,155.8 168.5,155.0 C169.4,154.2 170.6,153.5 171.5,153.0 C172.4,152.5 173.7,152.0 174.5,151.7 C175.3,151.4 176.1,151.1 177.0,150.9 C177.9,150.7 179.5,150.4 180.5,150.2 C181.5,149.9 182.7,149.4 183.5,149.2 C184.3,149.0 185.2,149.1 186.0,149.0 C186.8,148.9 188.1,148.7 189.0,148.6 C189.9,148.6 191.1,148.5 192.0,148.5 C192.9,148.4 194.1,148.3 195.0,148.3 C195.9,148.3 197.1,148.3 198.0,148.4 C198.9,148.6 200.1,149.2 201.0,149.4 C201.9,149.6 203.1,149.8 204.0,149.8 C204.9,149.8 206.1,149.5 207.0,149.5 C207.9,149.4 209.1,149.4 210.0,149.4 C210.9,149.5 212.1,149.6 213.0,149.6 C213.9,149.7 215.1,149.7 216.0,149.8 C216.9,149.8 218.1,149.8 219.0,149.8 C219.9,149.8 221.2,149.5 222.0,149.5 C222.8,149.4 223.8,149.4 224.5,149.4 C225.2,149.4 226.2,149.4 227.0,149.3 C227.8,149.1 229.2,148.9 230.0,148.6 C230.8,148.3 231.6,147.7 232.5,147.3 C233.4,146.9 235.0,146.4 236.0,146.0 C237.0,145.7 238.1,145.5 239.0,145.2 C239.9,145.0 241.1,144.7 242.0,144.5 C242.8,144.3 244.0,144.0 244.9,143.9 C245.8,143.9 247.0,144.1 247.9,144.2 C248.8,144.2 250.0,144.2 250.9,144.2 C251.7,144.2 252.9,144.2 253.8,144.2 C254.7,144.1 255.9,144.0 256.8,144.0 C257.7,144.0 258.9,144.0 259.8,144.0 C260.6,144.0 261.8,144.1 262.7,144.2 C263.6,144.3 264.8,144.5 265.7,144.7 C266.6,145.0 267.8,145.5 268.7,145.8 C269.5,146.2 270.7,146.8 271.6,147.2 C272.5,147.7 273.7,148.2 274.6,148.6 C275.5,149.1 276.7,149.8 277.6,150.3 C278.4,150.8 279.6,151.7 280.5,152.1 C281.4,152.4 282.6,152.7 283.5,152.8 C284.4,152.9 285.6,152.8 286.5,152.8 C287.3,152.8 288.5,152.8 289.4,152.8 C290.3,152.8 291.5,152.8 292.4,152.8 C293.3,152.7 294.5,152.6 295.4,152.5 C296.2,152.5 297.4,152.4 298.3,152.3 C299.2,152.3 300.4,152.4 301.3,152.3 C302.2,152.3 303.4,152.2 304.3,152.2 C305.1,152.1 306.3,152.0 307.2,152.0 C308.1,152.0 309.3,152.0 310.2,152.0 C311.1,152.0 312.3,152.1 313.2,152.1 C314.1,152.1 315.2,152.2 316.1,152.3 C317.0,152.3 318.2,152.4 319.1,152.5 C320.0,152.5 321.2,152.7 322.1,152.7 C323.0,152.7 324.1,152.7 325.0,152.7 C325.9,152.7 327.1,152.7 328.0,152.7 C328.9,152.7 330.1,152.9 331.0,152.9 C331.9,153.0 333.0,153.2 333.9,153.3 C334.8,153.3 336.0,153.2 336.9,153.2 C337.8,153.2 339.0,153.3 339.9,153.5 C340.8,153.6 341.9,154.0 342.8,154.1 C343.7,154.3 344.9,154.3 345.8,154.4 C346.7,154.4 347.9,154.4 348.8,154.4 C349.7,154.4 350.8,154.5 351.7,154.5 C352.6,154.6 353.8,154.7 354.7,154.8 C355.6,154.8 356.8,154.8 357.7,154.8 C358.6,154.7 359.7,154.6 360.6,154.5 C361.5,154.4 362.7,154.4 363.6,154.3 C364.5,154.3 365.7,154.3 366.6,154.4 C367.5,154.4 368.6,154.3 369.5,154.4 C370.4,154.4 371.6,154.6 372.5,154.6 C373.4,154.7 374.6,154.7 375.5,154.6 C376.4,154.6 377.5,154.5 378.4,154.5 C379.3,154.4 380.5,154.5 381.4,154.4 C382.3,154.4 383.5,154.3 384.4,154.2 C385.3,154.1 386.4,153.8 387.3,153.8 C388.2,153.7 389.4,153.8 390.3,153.9 C391.2,153.9 392.4,154.0 393.3,154.1 C394.2,154.2 395.3,154.5 396.2,154.7 C397.1,154.8 398.3,155.1 399.2,155.2 C400.1,155.4 401.3,155.5 402.2,155.6 C403.1,155.7 404.2,155.7 405.1,155.7 C406.0,155.8 407.2,155.7 408.1,155.8 C409.0,155.9 410.2,156.1 411.1,156.3 C412.0,156.4 413.1,156.8 414.0,157.0 C414.9,157.2 416.1,157.4 417.0,157.5 C417.9,157.5 419.1,157.3 420.0,157.3 C420.9,157.3 422.0,157.5 422.9,157.5 C423.8,157.5 425.0,157.5 425.9,157.5 C426.8,157.5 428.0,157.5 428.9,157.5 C429.8,157.5 430.9,157.4 431.8,157.3 C432.7,157.2 433.9,157.1 434.8,157.1 C435.7,157.0 436.9,156.8 437.8,156.8 C438.7,156.7 439.9,156.7 440.7,156.7 C441.6,156.8 442.8,157.1 443.7,157.3 C444.6,157.5 445.8,157.9 446.7,158.1 C447.6,158.4 448.8,158.7 449.6,159.1 C450.5,159.4 451.7,160.0 452.6,160.5 C453.5,161.0 454.4,161.8 455.6,162.4 C456.8,162.9 459.3,163.7 460.5,164.3 C461.7,165.0 462.6,165.9 463.5,166.7 C464.4,167.4 465.5,168.4 466.4,169.2 C467.3,170.0 468.5,171.1 469.4,171.9 C470.3,172.7 471.5,173.7 472.4,174.3 C473.3,175.0 474.4,175.6 475.3,176.0 C476.2,176.5 477.4,177.0 478.3,177.2 C479.2,177.5 480.4,177.8 481.3,178.0 C482.2,178.1 483.3,178.4 484.2,178.4 C485.1,178.4 486.3,178.1 487.2,177.9 C488.1,177.7 489.3,177.4 490.2,177.2 C491.1,177.1 492.2,177.2 493.1,177.1 C494.0,177.0 495.2,176.7 496.1,176.6 C497.0,176.4 498.2,176.1 499.1,176.0 C500.0,175.8 501.1,175.5 502.0,175.4 C502.9,175.2 504.1,175.1 505.0,174.9 C505.9,174.8 507.1,174.5 508.0,174.3 C508.9,174.2 510.0,174.0 510.9,173.9 C511.8,173.8 513.0,173.6 513.9,173.5 C514.8,173.5 516.0,173.4 516.9,173.3 C517.8,173.1 518.9,172.8 519.8,172.6 C520.7,172.4 521.9,172.0 522.8,171.9 C523.7,171.8 524.9,171.7 525.8,171.7 C526.7,171.6 527.9,171.7 528.7,171.7 C529.6,171.6 530.8,171.6 531.7,171.6 C532.6,171.5 533.8,171.4 534.7,171.3 C535.6,171.2 536.8,171.1 537.6,171.0 C538.5,170.8 539.7,170.5 540.6,170.4 C541.5,170.2 542.7,170.2 543.6,170.1 C544.5,170.0 545.7,169.8 546.5,169.7 C547.4,169.5 548.6,169.3 549.5,169.1 C550.4,168.9 551.6,168.5 552.5,168.2 C553.4,168.0 554.6,167.8 555.4,167.6 C556.3,167.5 557.5,167.4 558.4,167.3 C559.3,167.2 560.5,167.0 561.4,166.8 C562.3,166.6 563.5,166.3 564.3,166.0 C565.2,165.8 566.4,165.3 567.3,165.0 C568.2,164.8 569.4,164.4 570.3,164.2 C571.2,164.0 572.4,163.8 573.2,163.7 C574.1,163.6 575.3,163.5 576.2,163.5 C577.1,163.4 578.3,163.4 579.2,163.3 C580.1,163.2 581.3,163.1 582.1,163.0 C583.0,163.0 584.2,162.9 585.1,162.8 C586.0,162.7 587.2,162.5 588.1,162.3 C589.0,162.1 590.2,161.8 591.0,161.7 C591.9,161.6 593.1,161.7 594.0,161.7 C594.9,161.7 596.1,161.8 597.0,161.8 C597.9,161.8 599.1,161.7 599.9,161.8 C600.8,161.8 602.0,161.9 602.9,161.9 C603.8,161.9 605.0,162.0 605.9,162.1 C606.8,162.1 608.0,162.1 608.9,162.1 C609.7,162.1 610.9,162.1 611.8,162.1 C612.7,162.1 613.9,162.1 614.8,162.2 C615.7,162.2 616.9,162.2 617.8,162.2 C618.6,162.2 619.8,162.2 620.7,162.2 C621.6,162.3 622.8,162.5 623.7,162.7 C624.6,162.9 625.8,163.4 626.7,163.5 C627.5,163.7 628.7,163.7 629.6,163.7 C630.5,163.7 631.7,163.7 632.6,163.7 C633.5,163.7 634.7,163.6 635.6,163.6 C636.4,163.6 637.6,163.5 638.5,163.5 C639.4,163.5 640.6,163.5 641.5,163.4 C642.4,163.4 643.6,163.4 644.5,163.4 C645.3,163.4 646.5,163.4 647.4,163.4 C648.3,163.4 649.5,163.5 650.4,163.5 C651.3,163.5 652.5,163.5 653.4,163.6 C654.2,163.6 655.4,163.6 656.3,163.6 C657.2,163.6 658.4,163.6 659.3,163.6 C660.2,163.6 661.4,163.5 662.3,163.4 C663.1,163.4 664.3,163.2 665.2,163.2 C666.1,163.2 667.3,163.2 668.2,163.2 C669.1,163.2 670.3,163.2 671.2,163.2 C672.0,163.3 673.2,163.3 674.1,163.3 C675.0,163.3 676.2,163.3 677.1,163.3 C678.0,163.3 679.2,163.4 680.1,163.4 C680.9,163.4 682.1,163.3 683.0,163.3 C683.9,163.3 685.1,163.2 686.0,163.2 C686.9,163.2 688.1,163.2 689.0,163.2 C689.8,163.2 691.0,163.2 691.9,163.3 C692.8,163.3 694.0,163.2 694.9,163.3 C695.8,163.3 697.0,163.4 697.9,163.5 C698.8,163.5 699.9,163.8 700.8,163.8 C701.7,163.9 702.9,163.9 703.8,163.9 C704.7,163.9 705.9,163.8 706.8,163.7 C707.7,163.6 708.8,163.6 709.7,163.6 C710.6,163.5 711.8,163.4 712.7,163.4 C713.6,163.4 714.8,163.5 715.7,163.5 C716.6,163.6 717.7,163.6 718.6,163.7 C719.5,163.7 720.7,163.8 721.6,163.8 C722.5,163.8 723.7,163.7 724.6,163.7 C725.5,163.7 726.6,163.7 727.5,163.7 C728.4,163.7 729.6,163.7 730.5,163.7 C731.4,163.6 732.6,163.4 733.5,163.3 C734.4,163.3 735.5,163.3 736.4,163.3 C737.3,163.3 738.5,163.2 739.4,163.2 C740.3,163.3 741.5,163.3 742.4,163.3 C743.3,163.3 744.4,163.1 745.3,163.1 C746.2,163.1 747.4,163.1 748.3,163.1 C749.2,163.1 750.4,163.1 751.3,163.1 C752.2,163.1 753.3,163.1 754.2,163.1 C755.1,163.1 756.3,163.0 757.2,163.0 C758.1,163.0 759.3,163.0 760.2,163.0 C761.1,163.0 762.2,163.1 763.1,163.0 C764.0,163.0 765.2,162.9 766.1,162.9 C767.0,162.9 768.2,163.1 769.1,163.1 C770.0,163.2 771.1,163.2 772.0,163.3 C772.9,163.3 774.1,163.2 775.0,163.2 C775.9,163.2 777.1,163.3 778.0,163.4 C778.9,163.4 780.0,163.7 780.9,163.8 C781.8,163.8 783.0,164.0 783.9,164.0 C784.8,164.1 786.0,164.1 786.9,164.2 C787.8,164.2 788.9,164.3 789.8,164.4 C790.7,164.5 791.9,164.7 792.8,164.9 C793.7,165.0 794.9,165.1 795.8,165.1 C796.7,165.2 797.8,165.4 798.7,165.5 C799.6,165.6 800.8,165.5 801.7,165.5 C802.6,165.5 803.8,165.5 804.7,165.5 C805.6,165.6 806.7,165.8 807.6,166.0 C808.5,166.1 809.7,166.5 810.6,166.6 C811.5,166.8 812.7,166.8 813.6,166.9 C814.5,166.9 815.6,166.9 816.5,166.9 C817.4,166.9 818.6,167.0 819.5,167.0 C820.4,166.9 821.6,166.6 822.5,166.4 C823.4,166.2 824.6,166.0 825.4,165.9 C826.3,165.8 827.5,165.8 828.4,165.7 C829.3,165.7 830.5,165.7 831.4,165.6 C832.3,165.6 833.5,165.5 834.3,165.5 C835.2,165.4 836.4,165.4 837.3,165.4 C838.2,165.4 839.4,165.4 840.3,165.4 C841.2,165.4 842.4,165.5 843.2,165.4 C844.1,165.3 845.3,165.0 846.2,164.9 C847.1,164.8 848.3,164.6 849.2,164.6 C850.1,164.5 851.3,164.6 852.1,164.6 C853.0,164.6 854.2,164.6 855.1,164.6 C856.0,164.6 857.2,164.5 858.1,164.4 C859.0,164.3 860.2,164.1 861.0,164.1 C861.9,164.0 863.1,164.1 864.0,164.0 C864.9,164.0 866.1,163.9 867.0,163.9 C867.9,163.8 869.1,163.8 869.9,163.7 C870.8,163.7 872.0,163.7 872.9,163.7 C873.8,163.7 875.0,163.6 875.9,163.7 C876.8,163.7 878.0,163.7 878.8,163.7 C879.7,163.7 880.9,163.8 881.8,163.8 C882.7,163.9 883.9,164.0 884.8,164.0 C885.7,164.0 886.9,163.9 887.7,163.9 C888.6,163.9 889.8,163.9 890.7,163.9 C891.6,163.9 892.8,164.0 893.7,164.1 C894.6,164.1 895.8,164.4 896.6,164.4 C897.5,164.5 898.7,164.4 899.6,164.4 C900.5,164.4 901.7,164.5 902.6,164.5 C903.5,164.5 904.7,164.5 905.5,164.5 C906.4,164.5 907.6,164.5 908.5,164.5 C909.4,164.5 910.6,164.4 911.5,164.4 C912.4,164.4 913.6,164.3 914.5,164.2 C915.3,164.2 916.5,164.1 917.4,163.8 C918.3,163.6 919.5,163.0 920.4,162.6 C921.3,162.1 922.5,161.3 923.4,160.8 C924.2,160.2 925.4,159.4 926.3,159.0 C927.2,158.6 928.4,158.3 929.3,158.1 C930.2,157.9 931.4,157.8 932.3,157.7 C933.1,157.7 934.3,157.6 935.2,157.5 C936.1,157.5 937.3,157.4 938.2,157.3 C939.1,157.2 940.3,157.1 941.2,157.0 C942.0,157.0 943.2,157.1 944.1,157.1 C945.0,157.1 946.2,157.1 947.1,157.1 C948.0,157.1 949.2,157.2 950.1,157.2 C950.9,157.2 952.1,157.2 953.0,157.2 C953.9,157.2 955.1,157.2 956.0,157.3 C956.9,157.4 958.1,157.6 959.0,157.8 C959.8,158.1 961.0,158.9 961.9,159.2 C962.8,159.5 964.0,159.8 964.9,159.9 C965.8,160.1 967.0,160.3 967.9,160.5 C968.7,160.6 968.0,160.9 970.8,161.0 C973.7,161.0 984.6,160.7 987.0,160.7" fill="none" stroke="#5a5a5a" stroke-width="0.8" stroke-linejoin="round" stroke-dasharray="1 1.5" opacity="0.75"/>
<path d="M73.2,295.4 L76.0,223.8 C76.5,220.0 78.1,205.3 79.0,198.4 C79.9,191.6 81.1,183.7 82.0,178.1 C82.9,172.4 84.1,165.4 85.0,160.8 C85.9,156.1 87.1,150.8 88.0,147.0 C88.9,143.3 90.1,138.7 91.0,135.7 C91.9,132.7 93.1,128.6 94.0,126.9 C94.9,125.1 96.1,124.6 97.0,124.0 C97.9,123.4 99.1,122.7 100.0,122.7 C100.9,122.7 102.1,122.4 103.0,123.8 C103.9,125.2 105.1,125.8 106.0,132.2 C106.9,138.6 108.1,162.2 109.0,166.6 C109.9,171.1 111.1,163.3 112.0,161.9 C112.9,160.5 114.1,158.0 115.0,157.0 C115.9,155.9 117.1,155.6 118.0,155.0 C118.9,154.3 120.2,153.4 121.0,152.8 C121.8,152.2 122.2,151.3 123.0,151.0 C123.8,150.6 125.5,150.4 126.5,150.2 C127.5,150.1 128.6,149.3 129.5,150.0 C130.4,150.7 131.6,153.7 132.5,155.0 C133.4,156.2 134.6,158.1 135.5,158.5 C136.4,159.0 137.7,158.1 138.5,158.0 C139.3,157.9 140.1,157.8 141.0,157.8 C141.9,157.8 143.5,157.7 144.5,157.8 C145.5,157.8 146.6,157.8 147.5,158.2 C148.4,158.6 149.6,159.8 150.5,160.2 C151.4,160.7 152.6,160.9 153.5,161.1 C154.4,161.3 155.6,161.7 156.5,161.7 C157.4,161.6 158.7,161.9 159.5,160.8 C160.3,159.8 161.1,156.6 162.0,154.7 C162.9,152.8 164.5,149.8 165.5,148.2 C166.5,146.6 167.6,144.8 168.5,143.8 C169.4,142.9 170.6,142.2 171.5,141.7 C172.4,141.2 173.7,140.9 174.5,140.7 C175.3,140.6 176.1,140.5 177.0,140.4 C177.9,140.3 179.5,140.2 180.5,140.2 C181.5,140.2 182.7,140.0 183.5,140.2 C184.3,140.5 185.2,141.5 186.0,141.9 C186.8,142.4 188.1,142.9 189.0,143.2 C189.9,143.6 191.1,144.1 192.0,144.3 C192.9,144.5 194.1,144.6 195.0,144.7 C195.9,144.8 197.1,144.6 198.0,144.9 C198.9,145.1 200.1,145.9 201.0,146.2 C201.9,146.5 203.1,146.8 204.0,146.8 C204.9,146.9 206.1,146.5 207.0,146.5 C207.9,146.4 209.1,146.5 210.0,146.5 C210.9,146.6 212.1,146.9 213.0,147.1 C213.9,147.3 215.1,147.7 216.0,147.8 C216.9,147.9 218.1,147.9 219.0,147.8 C219.9,147.7 221.2,147.4 222.0,147.3 C222.8,147.2 223.8,147.2 224.5,147.2 C225.2,147.1 226.2,147.2 227.0,147.0 C227.8,146.8 229.2,146.3 230.0,145.9 C230.8,145.4 231.6,144.5 232.5,144.0 C233.4,143.4 235.0,142.7 236.0,142.3 C237.0,141.9 238.1,141.6 239.0,141.3 C239.9,141.0 241.1,140.5 242.0,140.3 C242.8,140.1 244.0,139.9 244.9,140.0 C245.8,140.1 247.0,140.8 247.9,141.0 C248.8,141.1 250.0,141.0 250.9,141.0 C251.7,141.0 252.9,141.1 253.8,141.0 C254.7,140.9 255.9,140.4 256.8,140.1 C257.7,139.9 258.9,139.6 259.8,139.4 C260.6,139.2 261.8,139.0 262.7,139.0 C263.6,139.0 264.8,139.1 265.7,139.4 C266.6,139.6 267.8,140.2 268.7,140.6 C269.5,141.1 270.7,141.8 271.6,142.4 C272.5,143.0 273.7,143.7 274.6,144.3 C275.5,145.0 276.7,146.1 277.6,147.0 C278.4,147.8 279.6,149.2 280.5,149.8 C281.4,150.4 282.6,150.8 283.5,151.0 C284.4,151.2 285.6,151.0 286.5,151.0 C287.3,151.0 288.5,151.0 289.4,151.0 C290.3,151.0 291.5,151.0 292.4,151.0 C293.3,151.0 294.5,150.9 295.4,150.9 C296.2,150.9 297.4,150.9 298.3,150.9 C299.2,150.9 300.4,150.9 301.3,150.9 C302.2,150.9 303.4,150.8 304.3,150.8 C305.1,150.8 306.3,150.8 307.2,150.9 C308.1,150.9 309.3,151.0 310.2,151.0 C311.1,151.0 312.3,150.9 313.2,150.9 C314.1,150.9 315.2,151.0 316.1,151.1 C317.0,151.1 318.2,151.3 319.1,151.3 C320.0,151.4 321.2,151.5 322.1,151.5 C323.0,151.5 324.1,151.3 325.0,151.3 C325.9,151.3 327.1,151.3 328.0,151.3 C328.9,151.3 330.1,151.5 331.0,151.6 C331.9,151.7 333.0,151.9 333.9,152.0 C334.8,152.0 336.0,151.9 336.9,151.9 C337.8,151.9 339.0,152.1 339.9,152.3 C340.8,152.5 341.9,153.1 342.8,153.3 C343.7,153.5 344.9,153.6 345.8,153.6 C346.7,153.6 347.9,153.5 348.8,153.5 C349.7,153.5 350.8,153.5 351.7,153.6 C352.6,153.7 353.8,153.9 354.7,153.9 C355.6,154.0 356.8,154.0 357.7,153.9 C358.6,153.9 359.7,153.7 360.6,153.6 C361.5,153.5 362.7,153.4 363.6,153.4 C364.5,153.3 365.7,153.4 366.6,153.4 C367.5,153.4 368.6,153.3 369.5,153.3 C370.4,153.3 371.6,153.6 372.5,153.6 C373.4,153.7 374.6,153.7 375.5,153.6 C376.4,153.6 377.5,153.4 378.4,153.4 C379.3,153.4 380.5,153.5 381.4,153.4 C382.3,153.3 383.5,152.9 384.4,152.6 C385.3,152.3 386.4,151.6 387.3,151.3 C388.2,151.1 389.4,151.1 390.3,151.1 C391.2,151.1 392.4,151.0 393.3,151.1 C394.2,151.2 395.3,151.5 396.2,151.8 C397.1,152.0 398.3,152.4 399.2,152.6 C400.1,152.8 401.3,152.9 402.2,153.0 C403.1,153.1 404.2,153.2 405.1,153.2 C406.0,153.2 407.2,153.2 408.1,153.3 C409.0,153.4 410.2,153.7 411.1,154.0 C412.0,154.3 413.1,154.9 414.0,155.1 C414.9,155.4 416.1,155.8 417.0,155.8 C417.9,155.9 419.1,155.6 420.0,155.7 C420.9,155.8 422.0,156.1 422.9,156.2 C423.8,156.4 425.0,156.5 425.9,156.5 C426.8,156.5 428.0,156.5 428.9,156.4 C429.8,156.3 430.9,156.0 431.8,155.7 C432.7,155.5 433.9,155.0 434.8,154.6 C435.7,154.2 436.9,153.5 437.8,153.1 C438.7,152.6 439.9,152.0 440.7,151.8 C441.6,151.5 442.8,151.4 443.7,151.3 C444.6,151.2 445.8,151.3 446.7,151.3 C447.6,151.4 448.8,151.4 449.6,151.6 C450.5,151.9 451.7,152.5 452.6,153.0 C453.5,153.5 454.4,154.3 455.6,155.0 C456.8,155.6 459.3,156.3 460.5,157.1 C461.7,157.9 462.6,159.2 463.5,160.2 C464.4,161.2 465.5,162.6 466.4,163.7 C467.3,164.7 468.5,166.3 469.4,167.4 C470.3,168.5 471.5,170.2 472.4,171.1 C473.3,172.1 474.4,173.1 475.3,173.8 C476.2,174.5 477.4,175.3 478.3,175.7 C479.2,176.1 480.4,176.5 481.3,176.7 C482.2,177.0 483.3,177.3 484.2,177.3 C485.1,177.3 486.3,176.7 487.2,176.5 C488.1,176.2 489.3,175.6 490.2,175.4 C491.1,175.2 492.2,175.3 493.1,175.2 C494.0,175.0 495.2,174.7 496.1,174.5 C497.0,174.3 498.2,173.9 499.1,173.7 C500.0,173.5 501.1,173.1 502.0,173.0 C502.9,172.8 504.1,172.9 505.0,172.7 C505.9,172.6 507.1,172.2 508.0,172.0 C508.9,171.8 510.0,171.6 510.9,171.5 C511.8,171.4 513.0,171.3 513.9,171.3 C514.8,171.3 516.0,171.5 516.9,171.4 C517.8,171.4 518.9,171.2 519.8,171.0 C520.7,170.7 521.9,170.2 522.8,170.0 C523.7,169.8 524.9,169.8 525.8,169.8 C526.7,169.8 527.9,170.0 528.7,170.0 C529.6,170.1 530.8,170.1 531.7,170.1 C532.6,170.1 533.8,170.0 534.7,169.9 C535.6,169.8 536.8,169.7 537.6,169.5 C538.5,169.3 539.7,169.0 540.6,168.8 C541.5,168.7 542.7,168.6 543.6,168.5 C544.5,168.4 545.7,168.3 546.5,168.1 C547.4,168.0 548.6,167.7 549.5,167.4 C550.4,167.1 551.6,166.6 552.5,166.3 C553.4,165.9 554.6,165.5 555.4,165.3 C556.3,165.2 557.5,165.1 558.4,165.0 C559.3,164.8 560.5,164.6 561.4,164.4 C562.3,164.3 563.5,164.0 564.3,163.7 C565.2,163.4 566.4,162.8 567.3,162.5 C568.2,162.2 569.4,161.8 570.3,161.6 C571.2,161.4 572.4,161.2 573.2,161.2 C574.1,161.1 575.3,161.1 576.2,161.1 C577.1,161.1 578.3,161.2 579.2,161.2 C580.1,161.2 581.3,161.2 582.1,161.2 C583.0,161.2 584.2,161.3 585.1,161.2 C586.0,161.0 587.2,160.7 588.1,160.5 C589.0,160.2 590.2,159.8 591.0,159.7 C591.9,159.7 593.1,160.1 594.0,160.2 C594.9,160.3 596.1,160.3 597.0,160.3 C597.9,160.4 599.1,160.3 599.9,160.3 C600.8,160.3 602.0,160.4 602.9,160.5 C603.8,160.5 605.0,160.6 605.9,160.6 C606.8,160.7 608.0,160.7 608.9,160.7 C609.7,160.7 610.9,160.7 611.8,160.6 C612.7,160.6 613.9,160.6 614.8,160.6 C615.7,160.6 616.9,160.7 617.8,160.7 C618.6,160.7 619.8,160.6 620.7,160.7 C621.6,160.8 622.8,161.1 623.7,161.4 C624.6,161.7 625.8,162.5 626.7,162.8 C627.5,163.0 628.7,163.0 629.6,163.1 C630.5,163.1 631.7,163.2 632.6,163.2 C633.5,163.2 634.7,163.1 635.6,163.0 C636.4,163.0 637.6,162.9 638.5,162.9 C639.4,162.9 640.6,162.9 641.5,162.8 C642.4,162.8 643.6,162.7 644.5,162.8 C645.3,162.8 646.5,162.9 647.4,163.0 C648.3,163.1 649.5,163.1 650.4,163.1 C651.3,163.2 652.5,163.2 653.4,163.2 C654.2,163.3 655.4,163.3 656.3,163.2 C657.2,163.2 658.4,163.2 659.3,163.1 C660.2,163.1 661.4,163.0 662.3,162.9 C663.1,162.9 664.3,162.6 665.2,162.6 C666.1,162.5 667.3,162.6 668.2,162.6 C669.1,162.6 670.3,162.6 671.2,162.6 C672.0,162.6 673.2,162.5 674.1,162.5 C675.0,162.4 676.2,162.4 677.1,162.4 C678.0,162.4 679.2,162.5 680.1,162.5 C680.9,162.4 682.1,162.4 683.0,162.4 C683.9,162.3 685.1,162.3 686.0,162.3 C686.9,162.3 688.1,162.3 689.0,162.3 C689.8,162.3 691.0,162.3 691.9,162.3 C692.8,162.2 694.0,162.2 694.9,162.2 C695.8,162.3 697.0,162.4 697.9,162.5 C698.8,162.6 699.9,162.9 700.8,163.0 C701.7,163.1 702.9,163.1 703.8,163.1 C704.7,163.0 705.9,162.8 706.8,162.8 C707.7,162.7 708.8,162.7 709.7,162.7 C710.6,162.6 711.8,162.6 712.7,162.6 C713.6,162.6 714.8,162.7 715.7,162.7 C716.6,162.8 717.7,162.9 718.6,162.9 C719.5,163.0 720.7,163.0 721.6,163.1 C722.5,163.1 723.7,163.0 724.6,162.9 C725.5,162.9 726.6,162.9 727.5,163.0 C728.4,163.0 729.6,163.1 730.5,163.0 C731.4,163.0 732.6,162.6 733.5,162.6 C734.4,162.5 735.5,162.7 736.4,162.7 C737.3,162.6 738.5,162.5 739.4,162.5 C740.3,162.5 741.5,162.6 742.4,162.6 C743.3,162.5 744.4,162.3 745.3,162.2 C746.2,162.2 747.4,162.2 748.3,162.2 C749.2,162.2 750.4,162.2 751.3,162.2 C752.2,162.2 753.3,162.2 754.2,162.2 C755.1,162.2 756.3,162.1 757.2,162.1 C758.1,162.1 759.3,162.2 760.2,162.2 C761.1,162.2 762.2,162.2 763.1,162.2 C764.0,162.1 765.2,161.8 766.1,161.7 C767.0,161.7 768.2,161.7 769.1,161.8 C770.0,161.8 771.1,161.9 772.0,162.0 C772.9,162.0 774.1,161.9 775.0,161.9 C775.9,161.9 777.1,162.0 778.0,162.0 C778.9,162.1 780.0,162.3 780.9,162.4 C781.8,162.5 783.0,162.6 783.9,162.7 C784.8,162.7 786.0,162.7 786.9,162.8 C787.8,162.8 788.9,162.7 789.8,162.8 C790.7,162.9 791.9,163.3 792.8,163.5 C793.7,163.6 794.9,163.7 795.8,163.9 C796.7,164.0 797.8,164.3 798.7,164.3 C799.6,164.4 800.8,164.4 801.7,164.4 C802.6,164.4 803.8,164.3 804.7,164.4 C805.6,164.4 806.7,164.6 807.6,164.9 C808.5,165.1 809.7,165.7 810.6,165.9 C811.5,166.1 812.7,166.2 813.6,166.2 C814.5,166.2 815.6,166.1 816.5,166.1 C817.4,166.1 818.6,166.4 819.5,166.2 C820.4,166.1 821.6,165.6 822.5,165.3 C823.4,165.1 824.6,164.8 825.4,164.6 C826.3,164.5 827.5,164.5 828.4,164.4 C829.3,164.4 830.5,164.3 831.4,164.3 C832.3,164.2 833.5,164.1 834.3,164.1 C835.2,164.0 836.4,164.0 837.3,164.0 C838.2,164.0 839.4,164.0 840.3,164.0 C841.2,164.0 842.4,164.1 843.2,164.0 C844.1,164.0 845.3,163.6 846.2,163.4 C847.1,163.3 848.3,163.1 849.2,163.0 C850.1,163.0 851.3,163.3 852.1,163.3 C853.0,163.3 854.2,163.3 855.1,163.3 C856.0,163.2 857.2,163.1 858.1,163.0 C859.0,162.9 860.2,162.5 861.0,162.5 C861.9,162.4 863.1,162.5 864.0,162.4 C864.9,162.4 866.1,162.3 867.0,162.2 C867.9,162.2 869.1,162.1 869.9,162.1 C870.8,162.0 872.0,162.0 872.9,162.0 C873.8,162.1 875.0,162.2 875.9,162.3 C876.8,162.4 878.0,162.6 878.8,162.6 C879.7,162.7 880.9,162.8 881.8,162.8 C882.7,162.8 883.9,162.9 884.8,162.9 C885.7,162.9 886.9,162.9 887.7,162.9 C888.6,162.9 889.8,163.1 890.7,163.1 C891.6,163.2 892.8,163.2 893.7,163.4 C894.6,163.5 895.8,163.9 896.6,164.0 C897.5,164.1 898.7,164.0 899.6,164.0 C900.5,164.0 901.7,164.1 902.6,164.1 C903.5,164.1 904.7,164.2 905.5,164.2 C906.4,164.2 907.6,164.1 908.5,164.1 C909.4,164.0 910.6,164.0 911.5,164.0 C912.4,163.9 913.6,163.8 914.5,163.7 C915.3,163.6 916.5,163.5 917.4,163.1 C918.3,162.7 919.5,161.8 920.4,161.1 C921.3,160.4 922.5,159.1 923.4,158.2 C924.2,157.4 925.4,156.0 926.3,155.4 C927.2,154.8 928.4,154.5 929.3,154.3 C930.2,154.1 931.4,154.1 932.3,154.0 C933.1,153.9 934.3,153.9 935.2,153.9 C936.1,153.9 937.3,153.9 938.2,153.9 C939.1,153.8 940.3,153.7 941.2,153.8 C942.0,153.8 943.2,154.1 944.1,154.2 C945.0,154.3 946.2,154.4 947.1,154.4 C948.0,154.5 949.2,154.6 950.1,154.6 C950.9,154.7 952.1,154.7 953.0,154.7 C953.9,154.7 955.1,154.5 956.0,154.6 C956.9,154.6 958.1,154.6 959.0,154.9 C959.8,155.3 961.0,156.3 961.9,156.7 C962.8,157.0 964.0,157.1 964.9,157.2 C965.8,157.4 967.0,157.5 967.9,157.6 C968.7,157.8 968.0,158.3 970.8,158.1 C973.7,157.8 984.6,156.4 987.0,156.1" fill="none" stroke="#5a5a5a" stroke-width="0.8" stroke-linejoin="round" stroke-dasharray="1 1.5" opacity="0.75"/>
<path d="M73.2,295.4 L76.0,192.2 C76.5,187.1 78.1,167.3 79.0,158.3 C79.9,149.3 81.1,139.3 82.0,132.2 C82.9,125.0 84.1,116.3 85.0,110.6 C85.9,105.0 87.1,98.8 88.0,94.5 C88.9,90.2 90.1,85.2 91.0,82.1 C91.9,78.9 93.1,74.9 94.0,73.6 C94.9,72.3 96.1,73.0 97.0,73.4 C97.9,73.8 99.1,74.7 100.0,76.1 C100.9,77.5 102.1,79.2 103.0,82.8 C103.9,86.5 105.1,89.5 106.0,100.7 C106.9,111.9 108.1,150.0 109.0,157.6 C109.9,165.2 111.1,153.1 112.0,151.3 C112.9,149.5 114.1,146.6 115.0,145.4 C115.9,144.2 117.1,144.1 118.0,143.5 C118.9,142.9 120.2,142.0 121.0,141.4 C121.8,140.8 122.2,140.0 123.0,139.7 C123.8,139.4 125.5,139.5 126.5,139.5 C127.5,139.5 128.6,138.5 129.5,139.8 C130.4,141.1 131.6,146.2 132.5,148.3 C133.4,150.5 134.6,153.4 135.5,154.2 C136.4,154.9 137.7,153.5 138.5,153.3 C139.3,153.1 140.1,152.9 141.0,152.8 C141.9,152.7 143.5,152.6 144.5,152.6 C145.5,152.6 146.6,152.4 147.5,152.8 C148.4,153.2 149.6,154.6 150.5,155.1 C151.4,155.6 152.6,155.9 153.5,156.1 C154.4,156.4 155.6,157.0 156.5,156.9 C157.4,156.9 158.7,157.2 159.5,155.7 C160.3,154.3 161.1,149.8 162.0,147.1 C162.9,144.5 164.5,140.5 165.5,138.3 C166.5,136.1 167.6,133.9 168.5,132.7 C169.4,131.5 170.6,130.8 171.5,130.4 C172.4,129.9 173.7,129.9 174.5,129.8 C175.3,129.7 176.1,129.9 177.0,130.0 C177.9,130.0 179.5,130.0 180.5,130.2 C181.5,130.4 182.7,130.6 183.5,131.3 C184.3,132.0 185.2,133.9 186.0,134.9 C186.8,135.9 188.1,137.0 189.0,137.8 C189.9,138.6 191.1,139.6 192.0,140.1 C192.9,140.6 194.1,141.0 195.0,141.1 C195.9,141.3 197.1,141.0 198.0,141.3 C198.9,141.6 200.1,142.7 201.0,143.1 C201.9,143.5 203.1,143.8 204.0,143.9 C204.9,143.9 206.1,143.5 207.0,143.5 C207.9,143.4 209.1,143.5 210.0,143.6 C210.9,143.8 212.1,144.3 213.0,144.6 C213.9,144.9 215.1,145.7 216.0,145.8 C216.9,146.0 218.1,145.9 219.0,145.8 C219.9,145.7 221.2,145.3 222.0,145.2 C222.8,145.1 223.8,145.1 224.5,145.0 C225.2,144.9 226.2,145.0 227.0,144.7 C227.8,144.5 229.2,143.8 230.0,143.2 C230.8,142.6 231.6,141.4 232.5,140.7 C233.4,140.0 235.0,139.1 236.0,138.6 C237.0,138.1 238.1,137.7 239.0,137.4 C239.9,137.0 241.1,136.4 242.0,136.1 C242.8,135.9 244.0,135.7 244.9,136.0 C245.8,136.2 247.0,137.5 247.9,137.8 C248.8,138.0 250.0,137.8 250.9,137.8 C251.7,137.8 252.9,138.0 253.8,137.8 C254.7,137.6 255.9,136.7 256.8,136.3 C257.7,135.8 258.9,135.1 259.8,134.8 C260.6,134.4 261.8,133.9 262.7,133.8 C263.6,133.7 264.8,133.8 265.7,134.0 C266.6,134.3 267.8,134.9 268.7,135.4 C269.5,136.0 270.7,136.9 271.6,137.6 C272.5,138.3 273.7,139.1 274.6,140.0 C275.5,140.9 276.7,142.5 277.6,143.6 C278.4,144.7 279.6,146.8 280.5,147.6 C281.4,148.5 282.6,149.0 283.5,149.2 C284.4,149.5 285.6,149.2 286.5,149.2 C287.3,149.2 288.5,149.2 289.4,149.2 C290.3,149.2 291.5,149.2 292.4,149.2 C293.3,149.2 294.5,149.2 295.4,149.2 C296.2,149.2 297.4,149.4 298.3,149.4 C299.2,149.5 300.4,149.5 301.3,149.5 C302.2,149.5 303.4,149.4 304.3,149.4 C305.1,149.5 306.3,149.6 307.2,149.7 C308.1,149.8 309.3,149.9 310.2,149.9 C311.1,149.9 312.3,149.7 313.2,149.7 C314.1,149.7 315.2,149.8 316.1,149.9 C317.0,149.9 318.2,150.1 319.1,150.2 C320.0,150.2 321.2,150.3 322.1,150.3 C323.0,150.2 324.1,149.9 325.0,149.9 C325.9,149.8 327.1,149.9 328.0,149.9 C328.9,150.0 330.1,150.1 331.0,150.2 C331.9,150.3 333.0,150.6 333.9,150.7 C334.8,150.8 336.0,150.5 336.9,150.6 C337.8,150.7 339.0,150.8 339.9,151.1 C340.8,151.4 341.9,152.2 342.8,152.4 C343.7,152.7 344.9,152.8 345.8,152.8 C346.7,152.8 347.9,152.6 348.8,152.5 C349.7,152.5 350.8,152.6 351.7,152.6 C352.6,152.7 353.8,153.0 354.7,153.1 C355.6,153.1 356.8,153.1 357.7,153.1 C358.6,153.0 359.7,152.8 360.6,152.7 C361.5,152.6 362.7,152.4 363.6,152.4 C364.5,152.3 365.7,152.4 366.6,152.4 C367.5,152.3 368.6,152.2 369.5,152.2 C370.4,152.3 371.6,152.6 372.5,152.6 C373.4,152.7 374.6,152.7 375.5,152.6 C376.4,152.6 377.5,152.4 378.4,152.4 C379.3,152.3 380.5,152.5 381.4,152.4 C382.3,152.2 383.5,151.6 384.4,151.1 C385.3,150.6 386.4,149.3 387.3,148.9 C388.2,148.4 389.4,148.4 390.3,148.3 C391.2,148.2 392.4,148.1 393.3,148.2 C394.2,148.3 395.3,148.6 396.2,148.9 C397.1,149.1 398.3,149.7 399.2,149.9 C400.1,150.2 401.3,150.4 402.2,150.5 C403.1,150.6 404.2,150.6 405.1,150.7 C406.0,150.7 407.2,150.6 408.1,150.8 C409.0,151.0 410.2,151.4 411.1,151.7 C412.0,152.1 413.1,152.9 414.0,153.2 C414.9,153.6 416.1,154.1 417.0,154.2 C417.9,154.3 419.1,153.9 420.0,154.1 C420.9,154.2 422.0,154.8 422.9,155.0 C423.8,155.2 425.0,155.4 425.9,155.4 C426.8,155.5 428.0,155.4 428.9,155.2 C429.8,155.1 430.9,154.7 431.8,154.2 C432.7,153.7 433.9,152.9 434.8,152.2 C435.7,151.5 436.9,150.2 437.8,149.4 C438.7,148.5 439.9,147.4 440.7,146.8 C441.6,146.2 442.8,145.7 443.7,145.3 C444.6,145.0 445.8,144.7 446.7,144.5 C447.6,144.4 448.8,144.1 449.6,144.2 C450.5,144.3 451.7,144.9 452.6,145.4 C453.5,145.9 454.4,146.9 455.6,147.6 C456.8,148.2 459.3,149.0 460.5,149.9 C461.7,150.8 462.6,152.4 463.5,153.7 C464.4,154.9 465.5,156.7 466.4,158.1 C467.3,159.5 468.5,161.5 469.4,162.9 C470.3,164.4 471.5,166.6 472.4,167.9 C473.3,169.2 474.4,170.6 475.3,171.6 C476.2,172.5 477.4,173.6 478.3,174.1 C479.2,174.7 480.4,175.1 481.3,175.4 C482.2,175.8 483.3,176.3 484.2,176.2 C485.1,176.1 486.3,175.4 487.2,175.1 C488.1,174.7 489.3,173.9 490.2,173.6 C491.1,173.4 492.2,173.4 493.1,173.3 C494.0,173.1 495.2,172.7 496.1,172.5 C497.0,172.2 498.2,171.7 499.1,171.5 C500.0,171.2 501.1,170.7 502.0,170.6 C502.9,170.4 504.1,170.6 505.0,170.5 C505.9,170.3 507.1,169.9 508.0,169.7 C508.9,169.5 510.0,169.3 510.9,169.2 C511.8,169.1 513.0,169.0 513.9,169.1 C514.8,169.2 516.0,169.6 516.9,169.6 C517.8,169.6 518.9,169.5 519.8,169.3 C520.7,169.1 521.9,168.3 522.8,168.0 C523.7,167.8 524.9,167.8 525.8,167.8 C526.7,167.9 527.9,168.2 528.7,168.4 C529.6,168.5 530.8,168.6 531.7,168.6 C532.6,168.6 533.8,168.6 534.7,168.5 C535.6,168.4 536.8,168.3 537.6,168.1 C538.5,167.9 539.7,167.4 540.6,167.3 C541.5,167.1 542.7,167.0 543.6,166.9 C544.5,166.8 545.7,166.7 546.5,166.5 C547.4,166.4 548.6,166.1 549.5,165.7 C550.4,165.4 551.6,164.7 552.5,164.3 C553.4,163.9 554.6,163.3 555.4,163.1 C556.3,162.8 557.5,162.8 558.4,162.6 C559.3,162.5 560.5,162.3 561.4,162.1 C562.3,161.9 563.5,161.7 564.3,161.4 C565.2,161.0 566.4,160.3 567.3,160.0 C568.2,159.6 569.4,159.2 570.3,159.0 C571.2,158.8 572.4,158.7 573.2,158.6 C574.1,158.6 575.3,158.6 576.2,158.7 C577.1,158.8 578.3,159.0 579.2,159.1 C580.1,159.2 581.3,159.3 582.1,159.4 C583.0,159.4 584.2,159.6 585.1,159.5 C586.0,159.4 587.2,158.9 588.1,158.7 C589.0,158.4 590.2,157.8 591.0,157.8 C591.9,157.8 593.1,158.5 594.0,158.7 C594.9,158.9 596.1,158.9 597.0,158.9 C597.9,158.9 599.1,158.8 599.9,158.9 C600.8,158.9 602.0,159.0 602.9,159.0 C603.8,159.1 605.0,159.2 605.9,159.2 C606.8,159.2 608.0,159.3 608.9,159.2 C609.7,159.2 610.9,159.2 611.8,159.2 C612.7,159.1 613.9,159.1 614.8,159.1 C615.7,159.1 616.9,159.2 617.8,159.2 C618.6,159.2 619.8,159.1 620.7,159.2 C621.6,159.3 622.8,159.7 623.7,160.1 C624.6,160.5 625.8,161.7 626.7,162.0 C627.5,162.4 628.7,162.3 629.6,162.4 C630.5,162.5 631.7,162.6 632.6,162.6 C633.5,162.6 634.7,162.5 635.6,162.5 C636.4,162.4 637.6,162.3 638.5,162.3 C639.4,162.3 640.6,162.3 641.5,162.2 C642.4,162.2 643.6,162.1 644.5,162.1 C645.3,162.2 646.5,162.5 647.4,162.6 C648.3,162.7 649.5,162.7 650.4,162.8 C651.3,162.8 652.5,162.9 653.4,162.9 C654.2,162.9 655.4,162.9 656.3,162.9 C657.2,162.8 658.4,162.8 659.3,162.7 C660.2,162.6 661.4,162.5 662.3,162.4 C663.1,162.3 664.3,162.0 665.2,162.0 C666.1,161.9 667.3,161.9 668.2,162.0 C669.1,162.0 670.3,162.0 671.2,162.0 C672.0,161.9 673.2,161.7 674.1,161.6 C675.0,161.6 676.2,161.5 677.1,161.5 C678.0,161.5 679.2,161.6 680.1,161.6 C680.9,161.5 682.1,161.5 683.0,161.4 C683.9,161.4 685.1,161.3 686.0,161.3 C686.9,161.3 688.1,161.3 689.0,161.3 C689.8,161.3 691.0,161.3 691.9,161.3 C692.8,161.2 694.0,161.2 694.9,161.2 C695.8,161.2 697.0,161.3 697.9,161.5 C698.8,161.6 699.9,162.0 700.8,162.1 C701.7,162.2 702.9,162.3 703.8,162.2 C704.7,162.2 705.9,161.9 706.8,161.8 C707.7,161.7 708.8,161.8 709.7,161.8 C710.6,161.7 711.8,161.7 712.7,161.8 C713.6,161.8 714.8,161.8 715.7,161.9 C716.6,161.9 717.7,162.1 718.6,162.1 C719.5,162.2 720.7,162.3 721.6,162.3 C722.5,162.3 723.7,162.2 724.6,162.2 C725.5,162.2 726.6,162.2 727.5,162.2 C728.4,162.3 729.6,162.4 730.5,162.4 C731.4,162.3 732.6,161.9 733.5,161.8 C734.4,161.8 735.5,162.0 736.4,162.0 C737.3,162.0 738.5,161.7 739.4,161.7 C740.3,161.7 741.5,161.9 742.4,161.8 C743.3,161.8 744.4,161.4 745.3,161.3 C746.2,161.3 747.4,161.3 748.3,161.4 C749.2,161.4 750.4,161.4 751.3,161.4 C752.2,161.4 753.3,161.4 754.2,161.4 C755.1,161.4 756.3,161.3 757.2,161.3 C758.1,161.3 759.3,161.3 760.2,161.3 C761.1,161.3 762.2,161.4 763.1,161.3 C764.0,161.2 765.2,160.7 766.1,160.5 C767.0,160.4 768.2,160.4 769.1,160.4 C770.0,160.4 771.1,160.6 772.0,160.6 C772.9,160.7 774.1,160.6 775.0,160.7 C775.9,160.7 777.1,160.7 778.0,160.7 C778.9,160.8 780.0,160.9 780.9,161.0 C781.8,161.1 783.0,161.3 783.9,161.4 C784.8,161.4 786.0,161.4 786.9,161.4 C787.8,161.4 788.9,161.2 789.8,161.3 C790.7,161.4 791.9,161.9 792.8,162.1 C793.7,162.3 794.9,162.4 795.8,162.6 C796.7,162.7 797.8,163.1 798.7,163.2 C799.6,163.3 800.8,163.2 801.7,163.2 C802.6,163.2 803.8,163.1 804.7,163.2 C805.6,163.3 806.7,163.5 807.6,163.8 C808.5,164.1 809.7,164.9 810.6,165.1 C811.5,165.4 812.7,165.5 813.6,165.5 C814.5,165.6 815.6,165.4 816.5,165.4 C817.4,165.4 818.6,165.7 819.5,165.5 C820.4,165.3 821.6,164.6 822.5,164.3 C823.4,163.9 824.6,163.5 825.4,163.4 C826.3,163.2 827.5,163.2 828.4,163.1 C829.3,163.1 830.5,163.0 831.4,162.9 C832.3,162.9 833.5,162.7 834.3,162.7 C835.2,162.6 836.4,162.6 837.3,162.6 C838.2,162.6 839.4,162.5 840.3,162.5 C841.2,162.6 842.4,162.8 843.2,162.7 C844.1,162.6 845.3,162.1 846.2,161.9 C847.1,161.8 848.3,161.5 849.2,161.5 C850.1,161.5 851.3,161.9 852.1,162.0 C853.0,162.1 854.2,162.0 855.1,162.0 C856.0,161.9 857.2,161.7 858.1,161.6 C859.0,161.4 860.2,161.0 861.0,160.9 C861.9,160.8 863.1,160.9 864.0,160.8 C864.9,160.8 866.1,160.7 867.0,160.6 C867.9,160.5 869.1,160.4 869.9,160.4 C870.8,160.4 872.0,160.3 872.9,160.4 C873.8,160.5 875.0,160.7 875.9,160.9 C876.8,161.1 878.0,161.4 878.8,161.6 C879.7,161.7 880.9,161.7 881.8,161.7 C882.7,161.8 883.9,161.9 884.8,161.9 C885.7,161.9 886.9,161.9 887.7,161.9 C888.6,162.0 889.8,162.3 890.7,162.4 C891.6,162.5 892.8,162.5 893.7,162.7 C894.6,162.8 895.8,163.4 896.6,163.6 C897.5,163.7 898.7,163.6 899.6,163.6 C900.5,163.7 901.7,163.7 902.6,163.7 C903.5,163.7 904.7,163.8 905.5,163.8 C906.4,163.8 907.6,163.7 908.5,163.7 C909.4,163.6 910.6,163.6 911.5,163.5 C912.4,163.4 913.6,163.4 914.5,163.2 C915.3,163.0 916.5,162.9 917.4,162.4 C918.3,161.9 919.5,160.6 920.4,159.6 C921.3,158.6 922.5,156.8 923.4,155.6 C924.2,154.5 925.4,152.6 926.3,151.9 C927.2,151.1 928.4,150.8 929.3,150.5 C930.2,150.3 931.4,150.3 932.3,150.3 C933.1,150.2 934.3,150.3 935.2,150.3 C936.1,150.3 937.3,150.4 938.2,150.4 C939.1,150.4 940.3,150.3 941.2,150.5 C942.0,150.6 943.2,151.2 944.1,151.4 C945.0,151.5 946.2,151.6 947.1,151.7 C948.0,151.8 949.2,152.0 950.1,152.1 C950.9,152.2 952.1,152.3 953.0,152.3 C953.9,152.2 955.1,151.9 956.0,151.8 C956.9,151.8 958.1,151.7 959.0,152.0 C959.8,152.4 961.0,153.8 961.9,154.2 C962.8,154.5 964.0,154.4 964.9,154.5 C965.8,154.6 967.0,154.7 967.9,154.8 C968.7,154.9 968.0,155.7 970.8,155.2 C973.7,154.7 984.6,152.0 987.0,151.5" fill="none" stroke="#5a5a5a" stroke-width="0.8" stroke-linejoin="round" stroke-dasharray="1 1.5" opacity="0.75"/>
<rect x="75.0" y="159.4" width="2" height="45.6" fill="#1fc3c3"/>
<rect x="75.5" y="158.1" width="1" height="47.8" fill="#1fc3c3"/>
<rect x="78.0" y="182.3" width="2" height="27.7" fill="#1fc3c3"/>
<rect x="78.5" y="180.2" width="1" height="30.5" fill="#1fc3c3"/>
<rect x="81.0" y="181.7" width="2" height="23.3" fill="#e8185c"/>
<rect x="81.5" y="179.9" width="1" height="26.6" fill="#e8185c"/>
<rect x="84.0" y="182.0" width="2" height="14.7" fill="#e8185c"/>
<rect x="84.5" y="181.4" width="1" height="17.1" fill="#e8185c"/>
<rect x="87.0" y="185.3" width="2" height="7.7" fill="#1fc3c3"/>
<rect x="87.5" y="184.7" width="1" height="9.9" fill="#1fc3c3"/>
<rect x="90.0" y="179.3" width="2" height="13.7" fill="#e8185c"/>
<rect x="90.5" y="178.6" width="1" height="15.1" fill="#e8185c"/>
<rect x="93.0" y="175.0" width="2" height="17.0" fill="#1fc3c3"/>
<rect x="93.5" y="173.4" width="1" height="21.1" fill="#1fc3c3"/>
<rect x="96.0" y="190.7" width="2" height="10.8" fill="#1fc3c3"/>
<rect x="96.5" y="189.9" width="1" height="12.7" fill="#1fc3c3"/>
<rect x="99.0" y="183.5" width="2" height="6.0" fill="#e8185c"/>
<rect x="99.5" y="181.4" width="1" height="10.9" fill="#e8185c"/>
<rect x="102.0" y="161.8" width="2" height="24.2" fill="#e8185c"/>
<rect x="102.5" y="159.9" width="1" height="27.6" fill="#e8185c"/>
<rect x="105.0" y="164.8" width="2" height="9.1" fill="#1fc3c3"/>
<rect x="105.5" y="161.9" width="1" height="12.7" fill="#1fc3c3"/>
<rect x="108.0" y="164.2" width="2" height="10.8" fill="#e8185c"/>
<rect x="108.5" y="161.6" width="1" height="14.7" fill="#e8185c"/>
<rect x="111.0" y="160.6" width="2" height="7.4" fill="#e8185c"/>
<rect x="111.5" y="159.7" width="1" height="9.1" fill="#e8185c"/>
<rect x="114.0" y="155.0" width="2" height="10.0" fill="#1fc3c3"/>
<rect x="114.5" y="153.7" width="1" height="13.8" fill="#1fc3c3"/>
<rect x="117.0" y="162.0" width="2" height="8.0" fill="#e8185c"/>
<rect x="117.5" y="161.0" width="1" height="10.9" fill="#e8185c"/>
<rect x="120.0" y="160.0" width="2" height="8.0" fill="#e8185c"/>
<rect x="120.5" y="157.9" width="1" height="11.5" fill="#e8185c"/>
<rect x="122.0" y="159.0" width="2" height="6.0" fill="#1fc3c3"/>
<rect x="122.5" y="157.1" width="1" height="8.5" fill="#1fc3c3"/>
<rect x="125.5" y="163.0" width="2" height="5.0" fill="#e8185c"/>
<rect x="126.0" y="162.4" width="1" height="6.7" fill="#e8185c"/>
<rect x="128.5" y="162.0" width="2" height="10.0" fill="#1fc3c3"/>
<rect x="129.0" y="159.8" width="1" height="13.8" fill="#1fc3c3"/>
<rect x="131.5" y="169.0" width="2" height="3.0" fill="#e8185c"/>
<rect x="132.0" y="167.7" width="1" height="6.2" fill="#e8185c"/>
<rect x="134.5" y="171.0" width="2" height="8.0" fill="#1fc3c3"/>
<rect x="135.0" y="169.4" width="1" height="10.9" fill="#1fc3c3"/>
<rect x="137.5" y="175.0" width="2" height="3.0" fill="#e8185c"/>
<rect x="138.0" y="172.5" width="1" height="7.7" fill="#e8185c"/>
<rect x="140.0" y="172.0" width="2" height="3.0" fill="#e8185c"/>
<rect x="140.5" y="170.9" width="1" height="6.0" fill="#e8185c"/>
<rect x="143.5" y="171.0" width="2" height="3.0" fill="#1fc3c3"/>
<rect x="144.0" y="169.2" width="1" height="7.5" fill="#1fc3c3"/>
<rect x="146.5" y="172.0" width="2" height="7.0" fill="#1fc3c3"/>
<rect x="147.0" y="169.7" width="1" height="10.5" fill="#1fc3c3"/>
<rect x="149.5" y="175.0" width="2" height="4.6" fill="#e8185c"/>
<rect x="150.0" y="172.0" width="1" height="8.3" fill="#e8185c"/>
<rect x="152.5" y="168.0" width="2" height="8.0" fill="#e8185c"/>
<rect x="153.0" y="166.5" width="1" height="11.9" fill="#e8185c"/>
<rect x="155.5" y="164.0" width="2" height="4.0" fill="#e8185c"/>
<rect x="156.0" y="163.1" width="1" height="6.6" fill="#e8185c"/>
<rect x="158.5" y="155.0" width="2" height="10.0" fill="#e8185c"/>
<rect x="159.0" y="154.4" width="1" height="12.8" fill="#e8185c"/>
<rect x="161.0" y="144.0" width="2" height="13.0" fill="#e8185c"/>
<rect x="161.5" y="141.6" width="1" height="17.3" fill="#e8185c"/>
<rect x="164.5" y="143.0" width="2" height="7.0" fill="#1fc3c3"/>
<rect x="165.0" y="140.3" width="1" height="11.0" fill="#1fc3c3"/>
<rect x="167.5" y="146.0" width="2" height="5.5" fill="#1fc3c3"/>
<rect x="168.0" y="143.8" width="1" height="9.7" fill="#1fc3c3"/>
<rect x="170.5" y="152.0" width="2" height="3.0" fill="#1fc3c3"/>
<rect x="171.0" y="150.1" width="1" height="6.6" fill="#1fc3c3"/>
<rect x="173.5" y="152.5" width="2" height="6.0" fill="#1fc3c3"/>
<rect x="174.0" y="149.9" width="1" height="11.5" fill="#1fc3c3"/>
<rect x="176.0" y="156.0" width="2" height="5.0" fill="#e8185c"/>
<rect x="176.5" y="154.3" width="1" height="8.8" fill="#e8185c"/>
<rect x="179.5" y="155.3" width="2" height="4.2" fill="#e8185c"/>
<rect x="180.0" y="154.6" width="1" height="7.1" fill="#e8185c"/>
<rect x="182.5" y="149.0" width="2" height="7.0" fill="#e8185c"/>
<rect x="183.0" y="146.9" width="1" height="12.1" fill="#e8185c"/>
<rect x="185.0" y="149.7" width="2" height="2.8" fill="#e8185c"/>
<rect x="185.5" y="147.1" width="1" height="6.6" fill="#e8185c"/>
<rect x="188.0" y="146.0" width="2" height="4.8" fill="#e8185c"/>
<rect x="188.5" y="144.5" width="1" height="8.4" fill="#e8185c"/>
<rect x="191.0" y="147.3" width="2" height="3.7" fill="#1fc3c3"/>
<rect x="191.5" y="146.7" width="1" height="5.9" fill="#1fc3c3"/>
<rect x="194.0" y="149.0" width="2" height="3.0" fill="#e8185c"/>
<rect x="194.5" y="148.1" width="1" height="4.7" fill="#e8185c"/>
<rect x="197.0" y="148.3" width="2" height="7.0" fill="#1fc3c3"/>
<rect x="197.5" y="147.7" width="1" height="10.1" fill="#1fc3c3"/>
<rect x="200.0" y="150.4" width="2" height="5.6" fill="#e8185c"/>
<rect x="200.5" y="149.6" width="1" height="7.5" fill="#e8185c"/>
<rect x="203.0" y="150.0" width="2" height="3.0" fill="#1fc3c3"/>
<rect x="203.5" y="148.5" width="1" height="7.2" fill="#1fc3c3"/>
<rect x="206.0" y="149.0" width="2" height="3.0" fill="#e8185c"/>
<rect x="206.5" y="148.3" width="1" height="5.3" fill="#e8185c"/>
<rect x="209.0" y="148.3" width="2" height="10.5" fill="#1fc3c3"/>
<rect x="209.5" y="146.4" width="1" height="15.1" fill="#1fc3c3"/>
<rect x="212.0" y="153.2" width="2" height="5.6" fill="#e8185c"/>
<rect x="212.5" y="150.7" width="1" height="10.8" fill="#e8185c"/>
<rect x="215.0" y="151.0" width="2" height="3.0" fill="#1fc3c3"/>
<rect x="215.5" y="149.8" width="1" height="5.7" fill="#1fc3c3"/>
<rect x="218.0" y="152.0" width="2" height="3.0" fill="#1fc3c3"/>
<rect x="218.5" y="150.6" width="1" height="7.1" fill="#1fc3c3"/>
<rect x="221.0" y="147.0" width="2" height="4.0" fill="#e8185c"/>
<rect x="221.5" y="144.1" width="1" height="7.8" fill="#e8185c"/>
<rect x="223.5" y="147.0" width="2" height="2.0" fill="#1fc3c3"/>
<rect x="224.0" y="146.1" width="1" height="4.0" fill="#1fc3c3"/>
<rect x="226.0" y="147.0" width="2" height="3.0" fill="#1fc3c3"/>
<rect x="226.5" y="145.9" width="1" height="5.8" fill="#1fc3c3"/>
<rect x="229.0" y="145.0" width="2" height="3.0" fill="#e8185c"/>
<rect x="229.5" y="143.0" width="1" height="6.1" fill="#e8185c"/>
<rect x="231.5" y="142.0" width="2" height="4.2" fill="#e8185c"/>
<rect x="232.0" y="141.5" width="1" height="6.3" fill="#e8185c"/>
<rect x="235.0" y="142.0" width="2" height="3.0" fill="#1fc3c3"/>
<rect x="235.5" y="140.6" width="1" height="6.3" fill="#1fc3c3"/>
<rect x="238.0" y="143.0" width="2" height="3.0" fill="#1fc3c3"/>
<rect x="238.5" y="140.1" width="1" height="8.1" fill="#1fc3c3"/>
<rect x="241.0" y="143.4" width="2" height="1.1" fill="#e8185c"/>
<rect x="241.5" y="143.3" width="1" height="1.4" fill="#e8185c"/>
<rect x="243.9" y="143.4" width="2" height="3.4" fill="#1fc3c3"/>
<rect x="244.4" y="141.7" width="1" height="6.4" fill="#1fc3c3"/>
<rect x="246.9" y="146.8" width="2" height="4.9" fill="#1fc3c3"/>
<rect x="247.4" y="145.2" width="1" height="7.5" fill="#1fc3c3"/>
<rect x="249.9" y="151.7" width="2" height="1.1" fill="#1fc3c3"/>
<rect x="250.4" y="150.3" width="1" height="3.6" fill="#1fc3c3"/>
<rect x="252.8" y="152.8" width="2" height="1.4" fill="#1fc3c3"/>
<rect x="253.3" y="152.7" width="1" height="1.8" fill="#1fc3c3"/>
<rect x="255.8" y="154.2" width="2" height="2.3" fill="#1fc3c3"/>
<rect x="256.3" y="154.0" width="1" height="2.9" fill="#1fc3c3"/>
<rect x="258.8" y="156.5" width="2" height="1.0" fill="#1fc3c3"/>
<rect x="259.3" y="156.5" width="1" height="2.0" fill="#1fc3c3"/>
<rect x="261.7" y="156.6" width="2" height="1.0" fill="#e8185c"/>
<rect x="262.2" y="154.1" width="1" height="3.9" fill="#e8185c"/>
<rect x="264.7" y="154.4" width="2" height="2.2" fill="#e8185c"/>
<rect x="265.2" y="153.9" width="1" height="2.7" fill="#e8185c"/>
<rect x="267.7" y="154.4" width="2" height="1.4" fill="#1fc3c3"/>
<rect x="268.2" y="154.0" width="1" height="2.3" fill="#1fc3c3"/>
<rect x="270.6" y="155.8" width="2" height="1.0" fill="#1fc3c3"/>
<rect x="271.1" y="152.6" width="1" height="5.6" fill="#1fc3c3"/>
<rect x="273.6" y="153.4" width="2" height="3.2" fill="#e8185c"/>
<rect x="274.1" y="152.9" width="1" height="4.0" fill="#e8185c"/>
<rect x="276.6" y="152.1" width="2" height="1.2" fill="#e8185c"/>
<rect x="277.1" y="151.3" width="1" height="2.4" fill="#e8185c"/>
<rect x="279.5" y="151.9" width="2" height="1.0" fill="#e8185c"/>
<rect x="280.0" y="148.8" width="1" height="4.5" fill="#e8185c"/>
<rect x="282.5" y="151.7" width="2" height="1.0" fill="#e8185c"/>
<rect x="283.0" y="151.6" width="1" height="1.4" fill="#e8185c"/>
<rect x="285.5" y="151.7" width="2" height="1.0" fill="#1fc3c3"/>
<rect x="286.0" y="148.3" width="1" height="5.0" fill="#1fc3c3"/>
<rect x="288.4" y="152.6" width="2" height="2.1" fill="#1fc3c3"/>
<rect x="288.9" y="151.2" width="1" height="3.6" fill="#1fc3c3"/>
<rect x="291.4" y="154.7" width="2" height="1.0" fill="#1fc3c3"/>
<rect x="291.9" y="153.7" width="1" height="3.9" fill="#1fc3c3"/>
<rect x="294.4" y="150.6" width="2" height="4.3" fill="#e8185c"/>
<rect x="294.9" y="150.1" width="1" height="5.2" fill="#e8185c"/>
<rect x="297.3" y="150.6" width="2" height="3.8" fill="#1fc3c3"/>
<rect x="297.8" y="149.2" width="1" height="8.5" fill="#1fc3c3"/>
<rect x="300.3" y="154.4" width="2" height="1.0" fill="#1fc3c3"/>
<rect x="300.8" y="152.6" width="1" height="3.7" fill="#1fc3c3"/>
<rect x="303.3" y="150.5" width="2" height="4.5" fill="#e8185c"/>
<rect x="303.8" y="150.3" width="1" height="6.3" fill="#e8185c"/>
<rect x="306.2" y="150.5" width="2" height="2.7" fill="#1fc3c3"/>
<rect x="306.7" y="150.2" width="1" height="4.0" fill="#1fc3c3"/>
<rect x="309.2" y="153.2" width="2" height="1.0" fill="#1fc3c3"/>
<rect x="309.7" y="153.1" width="1" height="3.0" fill="#1fc3c3"/>
<rect x="312.2" y="154.2" width="2" height="2.0" fill="#1fc3c3"/>
<rect x="312.7" y="153.8" width="1" height="5.8" fill="#1fc3c3"/>
<rect x="315.1" y="152.9" width="2" height="3.3" fill="#e8185c"/>
<rect x="315.6" y="151.8" width="1" height="4.7" fill="#e8185c"/>
<rect x="318.1" y="152.9" width="2" height="2.4" fill="#1fc3c3"/>
<rect x="318.6" y="152.0" width="1" height="3.5" fill="#1fc3c3"/>
<rect x="321.1" y="155.3" width="2" height="1.0" fill="#1fc3c3"/>
<rect x="321.6" y="153.4" width="1" height="4.8" fill="#1fc3c3"/>
<rect x="324.0" y="156.2" width="2" height="1.0" fill="#1fc3c3"/>
<rect x="324.5" y="155.0" width="1" height="3.5" fill="#1fc3c3"/>
<rect x="327.0" y="152.8" width="2" height="3.5" fill="#e8185c"/>
<rect x="327.5" y="151.2" width="1" height="6.0" fill="#e8185c"/>
<rect x="330.0" y="152.8" width="2" height="5.1" fill="#1fc3c3"/>
<rect x="330.5" y="151.6" width="1" height="6.3" fill="#1fc3c3"/>
<rect x="332.9" y="153.5" width="2" height="4.4" fill="#e8185c"/>
<rect x="333.4" y="152.5" width="1" height="7.3" fill="#e8185c"/>
<rect x="335.9" y="153.5" width="2" height="1.0" fill="#1fc3c3"/>
<rect x="336.4" y="151.6" width="1" height="4.2" fill="#1fc3c3"/>
<rect x="338.9" y="154.0" width="2" height="1.2" fill="#1fc3c3"/>
<rect x="339.4" y="151.5" width="1" height="5.5" fill="#1fc3c3"/>
<rect x="341.8" y="155.2" width="2" height="1.0" fill="#1fc3c3"/>
<rect x="342.3" y="154.5" width="1" height="2.3" fill="#1fc3c3"/>
<rect x="344.8" y="155.4" width="2" height="1.0" fill="#1fc3c3"/>
<rect x="345.3" y="153.5" width="1" height="4.1" fill="#1fc3c3"/>
<rect x="347.8" y="156.3" width="2" height="1.3" fill="#1fc3c3"/>
<rect x="348.3" y="154.5" width="1" height="4.9" fill="#1fc3c3"/>
<rect x="350.7" y="155.4" width="2" height="2.2" fill="#e8185c"/>
<rect x="351.2" y="154.4" width="1" height="4.4" fill="#e8185c"/>
<rect x="353.7" y="155.4" width="2" height="1.0" fill="#1fc3c3"/>
<rect x="354.2" y="155.2" width="1" height="2.9" fill="#1fc3c3"/>
<rect x="356.7" y="155.3" width="2" height="1.0" fill="#e8185c"/>
<rect x="357.2" y="152.4" width="1" height="4.4" fill="#e8185c"/>
<rect x="359.6" y="152.6" width="2" height="2.7" fill="#e8185c"/>
<rect x="360.1" y="151.6" width="1" height="4.1" fill="#e8185c"/>
<rect x="362.6" y="152.6" width="2" height="2.1" fill="#1fc3c3"/>
<rect x="363.1" y="152.6" width="1" height="3.2" fill="#1fc3c3"/>
<rect x="365.6" y="154.8" width="2" height="1.2" fill="#1fc3c3"/>
<rect x="366.1" y="153.1" width="1" height="2.9" fill="#1fc3c3"/>
<rect x="368.5" y="156.0" width="2" height="1.7" fill="#1fc3c3"/>
<rect x="369.0" y="154.1" width="1" height="5.5" fill="#1fc3c3"/>
<rect x="371.5" y="154.8" width="2" height="2.9" fill="#e8185c"/>
<rect x="372.0" y="153.7" width="1" height="6.3" fill="#e8185c"/>
<rect x="374.5" y="154.1" width="2" height="1.0" fill="#e8185c"/>
<rect x="375.0" y="151.7" width="1" height="4.8" fill="#e8185c"/>
<rect x="377.4" y="153.9" width="2" height="1.0" fill="#e8185c"/>
<rect x="377.9" y="153.9" width="1" height="1.3" fill="#e8185c"/>
<rect x="380.4" y="153.9" width="2" height="3.5" fill="#1fc3c3"/>
<rect x="380.9" y="153.2" width="1" height="4.5" fill="#1fc3c3"/>
<rect x="383.4" y="157.4" width="2" height="4.7" fill="#1fc3c3"/>
<rect x="383.9" y="157.3" width="1" height="5.5" fill="#1fc3c3"/>
<rect x="386.3" y="162.1" width="2" height="1.0" fill="#1fc3c3"/>
<rect x="386.8" y="161.9" width="1" height="2.8" fill="#1fc3c3"/>
<rect x="389.3" y="160.0" width="2" height="2.3" fill="#e8185c"/>
<rect x="389.8" y="158.6" width="1" height="5.7" fill="#e8185c"/>
<rect x="392.3" y="159.8" width="2" height="1.0" fill="#e8185c"/>
<rect x="392.8" y="158.5" width="1" height="3.3" fill="#e8185c"/>
<rect x="395.2" y="159.5" width="2" height="1.0" fill="#e8185c"/>
<rect x="395.7" y="158.5" width="1" height="2.2" fill="#e8185c"/>
<rect x="398.2" y="156.4" width="2" height="3.1" fill="#e8185c"/>
<rect x="398.7" y="154.5" width="1" height="5.8" fill="#e8185c"/>
<rect x="401.2" y="156.4" width="2" height="3.1" fill="#1fc3c3"/>
<rect x="401.7" y="155.7" width="1" height="5.0" fill="#1fc3c3"/>
<rect x="404.1" y="156.8" width="2" height="2.8" fill="#e8185c"/>
<rect x="404.6" y="154.9" width="1" height="4.9" fill="#e8185c"/>
<rect x="407.1" y="156.1" width="2" height="1.0" fill="#e8185c"/>
<rect x="407.6" y="155.7" width="1" height="4.4" fill="#e8185c"/>
<rect x="410.1" y="156.1" width="2" height="2.6" fill="#1fc3c3"/>
<rect x="410.6" y="155.3" width="1" height="5.8" fill="#1fc3c3"/>
<rect x="413.0" y="158.7" width="2" height="1.0" fill="#1fc3c3"/>
<rect x="413.5" y="158.4" width="1" height="4.1" fill="#1fc3c3"/>
<rect x="416.0" y="156.8" width="2" height="2.7" fill="#e8185c"/>
<rect x="416.5" y="156.4" width="1" height="3.6" fill="#e8185c"/>
<rect x="419.0" y="156.8" width="2" height="2.9" fill="#1fc3c3"/>
<rect x="419.5" y="155.9" width="1" height="4.6" fill="#1fc3c3"/>
<rect x="421.9" y="158.9" width="2" height="1.0" fill="#e8185c"/>
<rect x="422.4" y="157.3" width="1" height="3.5" fill="#e8185c"/>
<rect x="424.9" y="158.9" width="2" height="1.0" fill="#1fc3c3"/>
<rect x="425.4" y="156.3" width="1" height="4.7" fill="#1fc3c3"/>
<rect x="427.9" y="159.7" width="2" height="2.3" fill="#1fc3c3"/>
<rect x="428.4" y="159.3" width="1" height="3.2" fill="#1fc3c3"/>
<rect x="430.8" y="162.0" width="2" height="1.3" fill="#1fc3c3"/>
<rect x="431.3" y="157.6" width="1" height="6.9" fill="#1fc3c3"/>
<rect x="433.8" y="163.3" width="2" height="4.9" fill="#1fc3c3"/>
<rect x="434.3" y="161.0" width="1" height="8.9" fill="#1fc3c3"/>
<rect x="436.8" y="168.2" width="2" height="3.4" fill="#1fc3c3"/>
<rect x="437.3" y="167.9" width="1" height="5.1" fill="#1fc3c3"/>
<rect x="439.7" y="171.6" width="2" height="2.6" fill="#1fc3c3"/>
<rect x="440.2" y="169.3" width="1" height="5.1" fill="#1fc3c3"/>
<rect x="442.7" y="174.2" width="2" height="2.4" fill="#1fc3c3"/>
<rect x="443.2" y="172.2" width="1" height="4.6" fill="#1fc3c3"/>
<rect x="445.7" y="176.6" width="2" height="1.0" fill="#e8185c"/>
<rect x="446.2" y="174.0" width="1" height="4.4" fill="#e8185c"/>
<rect x="448.6" y="176.6" width="2" height="2.6" fill="#1fc3c3"/>
<rect x="449.1" y="176.3" width="1" height="5.0" fill="#1fc3c3"/>
<rect x="451.6" y="176.7" width="2" height="2.4" fill="#e8185c"/>
<rect x="452.1" y="170.1" width="1" height="12.0" fill="#e8185c"/>
<rect x="454.6" y="176.7" width="2" height="2.8" fill="#1fc3c3"/>
<rect x="455.1" y="170.2" width="1" height="10.8" fill="#1fc3c3"/>
<rect x="459.5" y="179.5" width="2" height="1.0" fill="#1fc3c3"/>
<rect x="460.0" y="177.4" width="1" height="3.6" fill="#1fc3c3"/>
<rect x="462.5" y="179.0" width="2" height="1.0" fill="#e8185c"/>
<rect x="463.0" y="178.4" width="1" height="4.1" fill="#e8185c"/>
<rect x="465.4" y="179.0" width="2" height="2.0" fill="#1fc3c3"/>
<rect x="465.9" y="178.6" width="1" height="3.3" fill="#1fc3c3"/>
<rect x="468.4" y="181.1" width="2" height="1.0" fill="#1fc3c3"/>
<rect x="468.9" y="178.8" width="1" height="5.0" fill="#1fc3c3"/>
<rect x="471.4" y="178.2" width="2" height="3.5" fill="#e8185c"/>
<rect x="471.9" y="177.9" width="1" height="4.1" fill="#e8185c"/>
<rect x="474.3" y="178.2" width="2" height="1.0" fill="#e8185c"/>
<rect x="474.8" y="177.0" width="1" height="4.9" fill="#e8185c"/>
<rect x="477.3" y="178.2" width="2" height="2.0" fill="#1fc3c3"/>
<rect x="477.8" y="176.7" width="1" height="5.1" fill="#1fc3c3"/>
<rect x="480.3" y="180.2" width="2" height="1.0" fill="#1fc3c3"/>
<rect x="480.8" y="179.0" width="1" height="4.5" fill="#1fc3c3"/>
<rect x="483.2" y="178.7" width="2" height="2.1" fill="#e8185c"/>
<rect x="483.7" y="177.6" width="1" height="3.5" fill="#e8185c"/>
<rect x="486.2" y="173.1" width="2" height="5.6" fill="#e8185c"/>
<rect x="486.7" y="172.2" width="1" height="6.7" fill="#e8185c"/>
<rect x="489.2" y="173.1" width="2" height="4.0" fill="#1fc3c3"/>
<rect x="489.7" y="172.2" width="1" height="5.0" fill="#1fc3c3"/>
<rect x="492.1" y="176.4" width="2" height="1.0" fill="#e8185c"/>
<rect x="492.6" y="175.9" width="1" height="2.3" fill="#e8185c"/>
<rect x="495.1" y="175.3" width="2" height="1.0" fill="#e8185c"/>
<rect x="495.6" y="174.9" width="1" height="2.4" fill="#e8185c"/>
<rect x="498.1" y="174.5" width="2" height="1.0" fill="#e8185c"/>
<rect x="498.6" y="173.4" width="1" height="2.8" fill="#e8185c"/>
<rect x="501.0" y="174.1" width="2" height="1.0" fill="#e8185c"/>
<rect x="501.5" y="173.9" width="1" height="1.3" fill="#e8185c"/>
<rect x="504.0" y="174.1" width="2" height="1.0" fill="#1fc3c3"/>
<rect x="504.5" y="173.8" width="1" height="1.4" fill="#1fc3c3"/>
<rect x="507.0" y="172.3" width="2" height="2.0" fill="#e8185c"/>
<rect x="507.5" y="171.8" width="1" height="3.8" fill="#e8185c"/>
<rect x="509.9" y="172.3" width="2" height="3.1" fill="#1fc3c3"/>
<rect x="510.4" y="172.0" width="1" height="3.9" fill="#1fc3c3"/>
<rect x="512.9" y="172.5" width="2" height="2.9" fill="#e8185c"/>
<rect x="513.4" y="170.1" width="1" height="5.3" fill="#e8185c"/>
<rect x="515.9" y="172.0" width="2" height="1.0" fill="#e8185c"/>
<rect x="516.4" y="171.1" width="1" height="3.3" fill="#e8185c"/>
<rect x="518.8" y="168.6" width="2" height="3.4" fill="#e8185c"/>
<rect x="519.3" y="167.3" width="1" height="6.7" fill="#e8185c"/>
<rect x="521.8" y="168.6" width="2" height="3.3" fill="#1fc3c3"/>
<rect x="522.3" y="166.9" width="1" height="6.0" fill="#1fc3c3"/>
<rect x="524.8" y="171.9" width="2" height="1.0" fill="#1fc3c3"/>
<rect x="525.3" y="171.3" width="1" height="1.9" fill="#1fc3c3"/>
<rect x="527.7" y="172.9" width="2" height="1.0" fill="#1fc3c3"/>
<rect x="528.2" y="172.0" width="1" height="1.9" fill="#1fc3c3"/>
<rect x="530.7" y="171.2" width="2" height="2.4" fill="#e8185c"/>
<rect x="531.2" y="169.2" width="1" height="5.7" fill="#e8185c"/>
<rect x="533.7" y="171.0" width="2" height="1.0" fill="#e8185c"/>
<rect x="534.2" y="169.7" width="1" height="2.5" fill="#e8185c"/>
<rect x="536.6" y="169.6" width="2" height="1.4" fill="#e8185c"/>
<rect x="537.1" y="169.2" width="1" height="3.1" fill="#e8185c"/>
<rect x="539.6" y="168.4" width="2" height="1.2" fill="#e8185c"/>
<rect x="540.1" y="167.3" width="1" height="2.6" fill="#e8185c"/>
<rect x="542.6" y="168.4" width="2" height="3.0" fill="#1fc3c3"/>
<rect x="543.1" y="166.9" width="1" height="4.8" fill="#1fc3c3"/>
<rect x="545.5" y="167.0" width="2" height="4.4" fill="#e8185c"/>
<rect x="546.0" y="163.8" width="1" height="8.1" fill="#e8185c"/>
<rect x="548.5" y="167.0" width="2" height="1.1" fill="#1fc3c3"/>
<rect x="549.0" y="165.8" width="1" height="2.3" fill="#1fc3c3"/>
<rect x="551.5" y="164.4" width="2" height="3.7" fill="#e8185c"/>
<rect x="552.0" y="164.2" width="1" height="4.4" fill="#e8185c"/>
<rect x="554.4" y="164.4" width="2" height="3.7" fill="#1fc3c3"/>
<rect x="554.9" y="163.4" width="1" height="4.7" fill="#1fc3c3"/>
<rect x="557.4" y="167.2" width="2" height="1.0" fill="#e8185c"/>
<rect x="557.9" y="166.5" width="1" height="1.9" fill="#e8185c"/>
<rect x="560.4" y="165.4" width="2" height="1.8" fill="#e8185c"/>
<rect x="560.9" y="165.1" width="1" height="3.0" fill="#e8185c"/>
<rect x="563.3" y="163.0" width="2" height="2.3" fill="#e8185c"/>
<rect x="563.8" y="162.2" width="1" height="3.1" fill="#e8185c"/>
<rect x="566.3" y="161.9" width="2" height="1.2" fill="#e8185c"/>
<rect x="566.8" y="161.3" width="1" height="4.2" fill="#e8185c"/>
<rect x="569.3" y="161.9" width="2" height="1.0" fill="#1fc3c3"/>
<rect x="569.8" y="161.2" width="1" height="2.4" fill="#1fc3c3"/>
<rect x="572.2" y="162.7" width="2" height="1.0" fill="#1fc3c3"/>
<rect x="572.7" y="162.5" width="1" height="3.1" fill="#1fc3c3"/>
<rect x="575.2" y="163.5" width="2" height="3.0" fill="#1fc3c3"/>
<rect x="575.7" y="162.9" width="1" height="5.0" fill="#1fc3c3"/>
<rect x="578.2" y="161.6" width="2" height="4.8" fill="#e8185c"/>
<rect x="578.7" y="161.4" width="1" height="7.4" fill="#e8185c"/>
<rect x="581.1" y="161.6" width="2" height="2.6" fill="#1fc3c3"/>
<rect x="581.6" y="160.5" width="1" height="6.1" fill="#1fc3c3"/>
<rect x="584.1" y="162.6" width="2" height="1.7" fill="#e8185c"/>
<rect x="584.6" y="161.8" width="1" height="4.6" fill="#e8185c"/>
<rect x="587.1" y="159.9" width="2" height="2.7" fill="#e8185c"/>
<rect x="587.6" y="158.5" width="1" height="4.8" fill="#e8185c"/>
<rect x="590.0" y="159.9" width="2" height="1.2" fill="#1fc3c3"/>
<rect x="590.5" y="159.8" width="1" height="1.6" fill="#1fc3c3"/>
<rect x="593.0" y="161.1" width="2" height="4.0" fill="#1fc3c3"/>
<rect x="593.5" y="160.2" width="1" height="6.7" fill="#1fc3c3"/>
<rect x="596.0" y="165.0" width="2" height="1.4" fill="#1fc3c3"/>
<rect x="596.5" y="163.4" width="1" height="3.6" fill="#1fc3c3"/>
<rect x="598.9" y="163.0" width="2" height="3.4" fill="#e8185c"/>
<rect x="599.4" y="161.6" width="1" height="4.9" fill="#e8185c"/>
<rect x="601.9" y="163.0" width="2" height="2.2" fill="#1fc3c3"/>
<rect x="602.4" y="162.4" width="1" height="4.8" fill="#1fc3c3"/>
<rect x="604.9" y="163.4" width="2" height="1.8" fill="#e8185c"/>
<rect x="605.4" y="163.4" width="1" height="2.0" fill="#e8185c"/>
<rect x="607.9" y="163.4" width="2" height="1.3" fill="#1fc3c3"/>
<rect x="608.4" y="163.3" width="1" height="2.4" fill="#1fc3c3"/>
<rect x="610.8" y="164.7" width="2" height="1.5" fill="#1fc3c3"/>
<rect x="611.3" y="164.3" width="1" height="2.0" fill="#1fc3c3"/>
<rect x="613.8" y="163.6" width="2" height="2.6" fill="#e8185c"/>
<rect x="614.3" y="163.4" width="1" height="6.2" fill="#e8185c"/>
<rect x="616.8" y="162.8" width="2" height="1.0" fill="#e8185c"/>
<rect x="617.3" y="162.8" width="1" height="2.9" fill="#e8185c"/>
<rect x="619.7" y="162.8" width="2" height="1.8" fill="#1fc3c3"/>
<rect x="620.2" y="162.6" width="1" height="3.7" fill="#1fc3c3"/>
<rect x="622.7" y="163.6" width="2" height="1.0" fill="#e8185c"/>
<rect x="623.2" y="163.2" width="1" height="2.0" fill="#e8185c"/>
<rect x="625.7" y="163.6" width="2" height="1.2" fill="#1fc3c3"/>
<rect x="626.2" y="163.5" width="1" height="2.4" fill="#1fc3c3"/>
<rect x="628.6" y="163.4" width="2" height="1.4" fill="#e8185c"/>
<rect x="629.1" y="163.4" width="1" height="2.4" fill="#e8185c"/>
<rect x="631.6" y="163.4" width="2" height="1.0" fill="#1fc3c3"/>
<rect x="632.1" y="162.5" width="1" height="3.6" fill="#1fc3c3"/>
<rect x="634.6" y="162.9" width="2" height="1.2" fill="#e8185c"/>
<rect x="635.1" y="162.0" width="1" height="3.5" fill="#e8185c"/>
<rect x="637.5" y="162.9" width="2" height="1.0" fill="#1fc3c3"/>
<rect x="638.0" y="162.3" width="1" height="1.7" fill="#1fc3c3"/>
<rect x="640.5" y="163.2" width="2" height="1.0" fill="#1fc3c3"/>
<rect x="641.0" y="162.7" width="1" height="4.4" fill="#1fc3c3"/>
<rect x="643.5" y="162.7" width="2" height="1.5" fill="#e8185c"/>
<rect x="644.0" y="161.3" width="1" height="3.1" fill="#e8185c"/>
<rect x="646.4" y="162.7" width="2" height="2.4" fill="#1fc3c3"/>
<rect x="646.9" y="159.7" width="1" height="6.3" fill="#1fc3c3"/>
<rect x="649.4" y="163.7" width="2" height="1.4" fill="#e8185c"/>
<rect x="649.9" y="163.0" width="1" height="5.1" fill="#e8185c"/>
<rect x="652.4" y="163.7" width="2" height="1.0" fill="#1fc3c3"/>
<rect x="652.9" y="162.1" width="1" height="3.6" fill="#1fc3c3"/>
<rect x="655.3" y="163.9" width="2" height="1.1" fill="#1fc3c3"/>
<rect x="655.8" y="163.3" width="1" height="2.0" fill="#1fc3c3"/>
<rect x="658.3" y="164.4" width="2" height="1.0" fill="#e8185c"/>
<rect x="658.8" y="163.1" width="1" height="3.8" fill="#e8185c"/>
<rect x="661.3" y="161.9" width="2" height="2.5" fill="#e8185c"/>
<rect x="661.8" y="161.6" width="1" height="5.5" fill="#e8185c"/>
<rect x="664.2" y="161.9" width="2" height="1.4" fill="#1fc3c3"/>
<rect x="664.7" y="161.9" width="1" height="2.9" fill="#1fc3c3"/>
<rect x="667.2" y="163.3" width="2" height="1.0" fill="#1fc3c3"/>
<rect x="667.7" y="162.3" width="1" height="2.3" fill="#1fc3c3"/>
<rect x="670.2" y="163.8" width="2" height="1.0" fill="#1fc3c3"/>
<rect x="670.7" y="162.9" width="1" height="2.9" fill="#1fc3c3"/>
<rect x="673.1" y="164.8" width="2" height="2.1" fill="#1fc3c3"/>
<rect x="673.6" y="162.8" width="1" height="4.2" fill="#1fc3c3"/>
<rect x="676.1" y="164.5" width="2" height="2.4" fill="#e8185c"/>
<rect x="676.6" y="163.9" width="1" height="4.7" fill="#e8185c"/>
<rect x="679.1" y="162.9" width="2" height="1.6" fill="#e8185c"/>
<rect x="679.6" y="162.0" width="1" height="3.0" fill="#e8185c"/>
<rect x="682.0" y="162.9" width="2" height="1.0" fill="#1fc3c3"/>
<rect x="682.5" y="162.0" width="1" height="3.6" fill="#1fc3c3"/>
<rect x="685.0" y="163.0" width="2" height="1.2" fill="#1fc3c3"/>
<rect x="685.5" y="162.1" width="1" height="3.1" fill="#1fc3c3"/>
<rect x="688.0" y="164.2" width="2" height="1.0" fill="#1fc3c3"/>
<rect x="688.5" y="163.8" width="1" height="3.3" fill="#1fc3c3"/>
<rect x="690.9" y="164.2" width="2" height="2.1" fill="#1fc3c3"/>
<rect x="691.4" y="163.6" width="1" height="5.6" fill="#1fc3c3"/>
<rect x="693.9" y="164.5" width="2" height="1.8" fill="#e8185c"/>
<rect x="694.4" y="163.5" width="1" height="3.6" fill="#e8185c"/>
<rect x="696.9" y="164.4" width="2" height="1.0" fill="#e8185c"/>
<rect x="697.4" y="162.3" width="1" height="5.4" fill="#e8185c"/>
<rect x="699.8" y="164.4" width="2" height="2.4" fill="#1fc3c3"/>
<rect x="700.3" y="162.9" width="1" height="5.8" fill="#1fc3c3"/>
<rect x="702.8" y="161.8" width="2" height="5.1" fill="#e8185c"/>
<rect x="703.3" y="160.3" width="1" height="7.1" fill="#e8185c"/>
<rect x="705.8" y="161.8" width="2" height="2.7" fill="#1fc3c3"/>
<rect x="706.3" y="161.4" width="1" height="3.2" fill="#1fc3c3"/>
<rect x="708.7" y="162.8" width="2" height="1.7" fill="#e8185c"/>
<rect x="709.2" y="162.7" width="1" height="3.5" fill="#e8185c"/>
<rect x="711.7" y="162.8" width="2" height="1.8" fill="#1fc3c3"/>
<rect x="712.2" y="162.4" width="1" height="2.7" fill="#1fc3c3"/>
<rect x="714.7" y="164.3" width="2" height="1.0" fill="#e8185c"/>
<rect x="715.2" y="163.1" width="1" height="2.3" fill="#e8185c"/>
<rect x="717.6" y="163.9" width="2" height="1.0" fill="#e8185c"/>
<rect x="718.1" y="161.9" width="1" height="3.9" fill="#e8185c"/>
<rect x="720.6" y="163.9" width="2" height="1.0" fill="#1fc3c3"/>
<rect x="721.1" y="163.3" width="1" height="2.5" fill="#1fc3c3"/>
<rect x="723.6" y="163.1" width="2" height="1.4" fill="#e8185c"/>
<rect x="724.1" y="162.7" width="1" height="2.2" fill="#e8185c"/>
<rect x="726.5" y="163.1" width="2" height="2.5" fill="#1fc3c3"/>
<rect x="727.0" y="162.4" width="1" height="5.8" fill="#1fc3c3"/>
<rect x="729.5" y="163.6" width="2" height="2.0" fill="#e8185c"/>
<rect x="730.0" y="163.6" width="1" height="5.6" fill="#e8185c"/>
<rect x="732.5" y="161.6" width="2" height="2.0" fill="#e8185c"/>
<rect x="733.0" y="161.0" width="1" height="2.8" fill="#e8185c"/>
<rect x="735.4" y="161.6" width="2" height="3.5" fill="#1fc3c3"/>
<rect x="735.9" y="161.1" width="1" height="4.3" fill="#1fc3c3"/>
<rect x="738.4" y="165.1" width="2" height="1.0" fill="#1fc3c3"/>
<rect x="738.9" y="165.0" width="1" height="2.0" fill="#1fc3c3"/>
<rect x="741.4" y="161.7" width="2" height="3.8" fill="#e8185c"/>
<rect x="741.9" y="160.6" width="1" height="4.9" fill="#e8185c"/>
<rect x="744.3" y="161.7" width="2" height="1.5" fill="#1fc3c3"/>
<rect x="744.8" y="160.4" width="1" height="3.6" fill="#1fc3c3"/>
<rect x="747.3" y="163.2" width="2" height="1.0" fill="#1fc3c3"/>
<rect x="747.8" y="162.4" width="1" height="2.7" fill="#1fc3c3"/>
<rect x="750.3" y="163.8" width="2" height="1.7" fill="#1fc3c3"/>
<rect x="750.8" y="163.2" width="1" height="2.4" fill="#1fc3c3"/>
<rect x="753.2" y="162.6" width="2" height="2.9" fill="#e8185c"/>
<rect x="753.7" y="162.6" width="1" height="3.5" fill="#e8185c"/>
<rect x="756.2" y="162.6" width="2" height="1.6" fill="#1fc3c3"/>
<rect x="756.7" y="162.5" width="1" height="2.7" fill="#1fc3c3"/>
<rect x="759.2" y="164.0" width="2" height="1.0" fill="#e8185c"/>
<rect x="759.7" y="163.2" width="1" height="4.1" fill="#e8185c"/>
<rect x="762.1" y="164.0" width="2" height="1.0" fill="#1fc3c3"/>
<rect x="762.6" y="163.8" width="1" height="1.4" fill="#1fc3c3"/>
<rect x="765.1" y="164.9" width="2" height="3.9" fill="#1fc3c3"/>
<rect x="765.6" y="164.5" width="1" height="5.4" fill="#1fc3c3"/>
<rect x="768.1" y="165.3" width="2" height="3.5" fill="#e8185c"/>
<rect x="768.6" y="165.3" width="1" height="3.5" fill="#e8185c"/>
<rect x="771.0" y="163.8" width="2" height="1.5" fill="#e8185c"/>
<rect x="771.5" y="162.0" width="1" height="4.4" fill="#e8185c"/>
<rect x="774.0" y="163.8" width="2" height="1.0" fill="#1fc3c3"/>
<rect x="774.5" y="162.9" width="1" height="2.1" fill="#1fc3c3"/>
<rect x="777.0" y="164.2" width="2" height="3.9" fill="#1fc3c3"/>
<rect x="777.5" y="163.8" width="1" height="6.2" fill="#1fc3c3"/>
<rect x="779.9" y="167.1" width="2" height="1.0" fill="#e8185c"/>
<rect x="780.4" y="165.2" width="1" height="3.6" fill="#e8185c"/>
<rect x="782.9" y="165.8" width="2" height="1.3" fill="#e8185c"/>
<rect x="783.4" y="164.1" width="1" height="4.5" fill="#e8185c"/>
<rect x="785.9" y="165.8" width="2" height="2.4" fill="#1fc3c3"/>
<rect x="786.4" y="163.7" width="1" height="5.1" fill="#1fc3c3"/>
<rect x="788.8" y="168.1" width="2" height="1.0" fill="#e8185c"/>
<rect x="789.3" y="165.3" width="1" height="4.4" fill="#e8185c"/>
<rect x="791.8" y="166.7" width="2" height="1.5" fill="#e8185c"/>
<rect x="792.3" y="166.0" width="1" height="2.8" fill="#e8185c"/>
<rect x="794.8" y="166.2" width="2" height="1.0" fill="#e8185c"/>
<rect x="795.3" y="164.7" width="1" height="2.8" fill="#e8185c"/>
<rect x="797.7" y="166.2" width="2" height="2.1" fill="#1fc3c3"/>
<rect x="798.2" y="164.5" width="1" height="4.0" fill="#1fc3c3"/>
<rect x="800.7" y="166.8" width="2" height="1.4" fill="#e8185c"/>
<rect x="801.2" y="166.2" width="1" height="2.2" fill="#e8185c"/>
<rect x="803.7" y="166.8" width="2" height="1.0" fill="#1fc3c3"/>
<rect x="804.2" y="166.4" width="1" height="2.8" fill="#1fc3c3"/>
<rect x="806.6" y="167.5" width="2" height="2.4" fill="#1fc3c3"/>
<rect x="807.1" y="167.0" width="1" height="3.9" fill="#1fc3c3"/>
<rect x="809.6" y="166.2" width="2" height="3.7" fill="#e8185c"/>
<rect x="810.1" y="166.1" width="1" height="4.8" fill="#e8185c"/>
<rect x="812.6" y="166.2" width="2" height="3.8" fill="#1fc3c3"/>
<rect x="813.1" y="165.7" width="1" height="4.3" fill="#1fc3c3"/>
<rect x="815.5" y="167.6" width="2" height="2.3" fill="#e8185c"/>
<rect x="816.0" y="165.7" width="1" height="4.2" fill="#e8185c"/>
<rect x="818.5" y="165.9" width="2" height="1.7" fill="#e8185c"/>
<rect x="819.0" y="165.5" width="1" height="3.5" fill="#e8185c"/>
<rect x="821.5" y="163.6" width="2" height="2.4" fill="#e8185c"/>
<rect x="822.0" y="163.5" width="1" height="2.8" fill="#e8185c"/>
<rect x="824.4" y="163.6" width="2" height="2.2" fill="#1fc3c3"/>
<rect x="824.9" y="162.4" width="1" height="3.7" fill="#1fc3c3"/>
<rect x="827.4" y="165.5" width="2" height="1.0" fill="#e8185c"/>
<rect x="827.9" y="164.9" width="1" height="3.6" fill="#e8185c"/>
<rect x="830.4" y="165.2" width="2" height="1.0" fill="#e8185c"/>
<rect x="830.9" y="165.2" width="1" height="2.1" fill="#e8185c"/>
<rect x="833.3" y="165.2" width="2" height="1.0" fill="#1fc3c3"/>
<rect x="833.8" y="164.8" width="1" height="2.2" fill="#1fc3c3"/>
<rect x="836.3" y="165.9" width="2" height="1.0" fill="#1fc3c3"/>
<rect x="836.8" y="163.8" width="1" height="3.9" fill="#1fc3c3"/>
<rect x="839.3" y="166.5" width="2" height="3.3" fill="#1fc3c3"/>
<rect x="839.8" y="165.7" width="1" height="4.2" fill="#1fc3c3"/>
<rect x="842.2" y="166.0" width="2" height="3.9" fill="#e8185c"/>
<rect x="842.7" y="164.7" width="1" height="6.7" fill="#e8185c"/>
<rect x="845.2" y="161.9" width="2" height="4.0" fill="#e8185c"/>
<rect x="845.7" y="161.2" width="1" height="5.8" fill="#e8185c"/>
<rect x="848.2" y="161.9" width="2" height="4.5" fill="#1fc3c3"/>
<rect x="848.7" y="158.6" width="1" height="8.1" fill="#1fc3c3"/>
<rect x="851.1" y="165.7" width="2" height="1.0" fill="#e8185c"/>
<rect x="851.6" y="164.6" width="1" height="2.6" fill="#e8185c"/>
<rect x="854.1" y="165.7" width="2" height="2.3" fill="#1fc3c3"/>
<rect x="854.6" y="164.2" width="1" height="4.3" fill="#1fc3c3"/>
<rect x="857.1" y="159.3" width="2" height="8.8" fill="#e8185c"/>
<rect x="857.6" y="158.3" width="1" height="10.3" fill="#e8185c"/>
<rect x="860.0" y="159.3" width="2" height="7.3" fill="#1fc3c3"/>
<rect x="860.5" y="156.6" width="1" height="10.0" fill="#1fc3c3"/>
<rect x="863.0" y="164.5" width="2" height="2.1" fill="#e8185c"/>
<rect x="863.5" y="163.9" width="1" height="3.8" fill="#e8185c"/>
<rect x="866.0" y="163.8" width="2" height="1.0" fill="#e8185c"/>
<rect x="866.5" y="163.0" width="1" height="1.8" fill="#e8185c"/>
<rect x="868.9" y="163.8" width="2" height="1.1" fill="#1fc3c3"/>
<rect x="869.4" y="163.6" width="1" height="2.5" fill="#1fc3c3"/>
<rect x="871.9" y="164.9" width="2" height="1.0" fill="#1fc3c3"/>
<rect x="872.4" y="164.7" width="1" height="2.0" fill="#1fc3c3"/>
<rect x="874.9" y="164.3" width="2" height="1.2" fill="#e8185c"/>
<rect x="875.4" y="162.9" width="1" height="4.4" fill="#e8185c"/>
<rect x="877.8" y="164.3" width="2" height="1.0" fill="#1fc3c3"/>
<rect x="878.3" y="163.1" width="1" height="3.5" fill="#1fc3c3"/>
<rect x="880.8" y="165.0" width="2" height="1.0" fill="#e8185c"/>
<rect x="881.3" y="163.1" width="1" height="5.0" fill="#e8185c"/>
<rect x="883.8" y="164.9" width="2" height="1.0" fill="#e8185c"/>
<rect x="884.3" y="163.8" width="1" height="2.4" fill="#e8185c"/>
<rect x="886.7" y="164.0" width="2" height="1.0" fill="#e8185c"/>
<rect x="887.2" y="162.1" width="1" height="4.1" fill="#e8185c"/>
<rect x="889.7" y="164.0" width="2" height="1.0" fill="#1fc3c3"/>
<rect x="890.2" y="163.7" width="1" height="1.8" fill="#1fc3c3"/>
<rect x="892.7" y="164.3" width="2" height="1.0" fill="#1fc3c3"/>
<rect x="893.2" y="163.4" width="1" height="2.3" fill="#1fc3c3"/>
<rect x="895.6" y="164.1" width="2" height="1.0" fill="#e8185c"/>
<rect x="896.1" y="161.4" width="1" height="4.2" fill="#e8185c"/>
<rect x="898.6" y="164.1" width="2" height="1.2" fill="#1fc3c3"/>
<rect x="899.1" y="162.4" width="1" height="3.3" fill="#1fc3c3"/>
<rect x="901.6" y="163.9" width="2" height="1.4" fill="#e8185c"/>
<rect x="902.1" y="161.9" width="1" height="3.8" fill="#e8185c"/>
<rect x="904.5" y="163.9" width="2" height="1.4" fill="#1fc3c3"/>
<rect x="905.0" y="161.8" width="1" height="3.6" fill="#1fc3c3"/>
<rect x="907.5" y="165.3" width="2" height="1.0" fill="#1fc3c3"/>
<rect x="908.0" y="164.4" width="1" height="2.1" fill="#1fc3c3"/>
<rect x="910.5" y="162.5" width="2" height="3.5" fill="#e8185c"/>
<rect x="911.0" y="162.3" width="1" height="6.0" fill="#e8185c"/>
<rect x="913.5" y="162.5" width="2" height="2.6" fill="#1fc3c3"/>
<rect x="914.0" y="161.2" width="1" height="5.1" fill="#1fc3c3"/>
<rect x="916.4" y="160.4" width="2" height="4.8" fill="#e8185c"/>
<rect x="916.9" y="158.3" width="1" height="7.9" fill="#e8185c"/>
<rect x="919.4" y="158.9" width="2" height="1.4" fill="#e8185c"/>
<rect x="919.9" y="158.4" width="1" height="3.1" fill="#e8185c"/>
<rect x="922.4" y="153.7" width="2" height="5.2" fill="#e8185c"/>
<rect x="922.9" y="152.2" width="1" height="9.8" fill="#e8185c"/>
<rect x="925.3" y="153.7" width="2" height="1.2" fill="#1fc3c3"/>
<rect x="925.8" y="152.6" width="1" height="3.2" fill="#1fc3c3"/>
<rect x="928.3" y="155.0" width="2" height="4.1" fill="#1fc3c3"/>
<rect x="928.8" y="154.8" width="1" height="5.1" fill="#1fc3c3"/>
<rect x="931.3" y="159.1" width="2" height="1.0" fill="#1fc3c3"/>
<rect x="931.8" y="156.0" width="1" height="4.2" fill="#1fc3c3"/>
<rect x="934.2" y="160.1" width="2" height="1.2" fill="#1fc3c3"/>
<rect x="934.7" y="157.6" width="1" height="4.2" fill="#1fc3c3"/>
<rect x="937.2" y="159.2" width="2" height="2.1" fill="#e8185c"/>
<rect x="937.7" y="154.2" width="1" height="11.5" fill="#e8185c"/>
<rect x="940.2" y="158.7" width="2" height="1.0" fill="#e8185c"/>
<rect x="940.7" y="158.6" width="1" height="1.9" fill="#e8185c"/>
<rect x="943.1" y="158.7" width="2" height="5.7" fill="#1fc3c3"/>
<rect x="943.6" y="157.3" width="1" height="7.6" fill="#1fc3c3"/>
<rect x="946.1" y="161.6" width="2" height="2.8" fill="#e8185c"/>
<rect x="946.6" y="161.4" width="1" height="5.1" fill="#e8185c"/>
<rect x="949.1" y="161.6" width="2" height="1.0" fill="#1fc3c3"/>
<rect x="949.6" y="159.5" width="1" height="3.1" fill="#1fc3c3"/>
<rect x="952.0" y="161.4" width="2" height="1.0" fill="#e8185c"/>
<rect x="952.5" y="160.9" width="1" height="2.4" fill="#e8185c"/>
<rect x="955.0" y="161.4" width="2" height="4.7" fill="#1fc3c3"/>
<rect x="955.5" y="160.0" width="1" height="7.9" fill="#1fc3c3"/>
<rect x="958.0" y="165.3" width="2" height="1.0" fill="#e8185c"/>
<rect x="958.5" y="165.2" width="1" height="2.4" fill="#e8185c"/>
<rect x="960.9" y="165.3" width="2" height="1.3" fill="#1fc3c3"/>
<rect x="961.4" y="163.8" width="1" height="5.2" fill="#1fc3c3"/>
<rect x="963.9" y="166.7" width="2" height="3.7" fill="#1fc3c3"/>
<rect x="964.4" y="165.1" width="1" height="6.1" fill="#1fc3c3"/>
<rect x="966.9" y="164.3" width="2" height="6.0" fill="#e8185c"/>
<rect x="967.4" y="160.5" width="1" height="11.3" fill="#e8185c"/>
<rect x="969.8" y="164.3" width="2" height="5.2" fill="#1fc3c3"/>
<rect x="970.3" y="163.3" width="1" height="9.0" fill="#1fc3c3"/>
<rect x="986.0" y="177.0" width="2" height="1.5" fill="#1fc3c3"/>
<rect x="986.5" y="176.5" width="1" height="2.5" fill="#1fc3c3"/>
<polyline points="73.2,295.4 130.0,249.0 185.4,199.5 221.6,165.6 248.0,158.0 270.0,156.0 288.8,154.0 298.6,152.6 340.0,152.6 380.0,153.5 400.0,155.0 440.0,157.0 480.0,162.0 530.0,170.0 560.0,172.0 600.0,171.4 630.0,169.0 650.0,166.7 700.0,165.0 800.0,165.0 900.0,164.0 987.0,166.0" fill="none" stroke="#7e1cc8" stroke-width="1.4" stroke-linejoin="round" />
<path d="M73.2,295.4 L131.8,178.2 C133.6,177.8 139.8,176.2 144.4,175.4 C149.0,174.6 157.8,174.1 162.6,172.6 C167.4,171.1 172.1,167.5 176.7,165.6 C181.3,163.7 188.6,161.8 193.5,160.0 C198.4,158.2 204.1,155.1 209.2,153.9 C214.3,152.7 221.8,152.6 227.2,152.0 C232.6,151.4 240.2,149.8 245.0,149.6 C249.8,149.4 254.4,150.2 259.5,150.6 C264.6,151.0 273.1,151.6 279.0,152.0 C284.9,152.4 289.5,152.7 298.6,153.0 C307.8,153.3 324.8,153.6 340.0,154.0 C355.2,154.4 386.5,155.5 400.0,156.0 C413.5,156.5 419.8,155.4 430.0,157.5 C440.2,159.6 459.0,167.1 468.0,170.0 C477.0,172.9 483.7,175.9 490.0,177.0 C496.3,178.1 504.0,177.4 510.0,177.0 C516.0,176.6 524.0,175.4 530.0,174.6 C536.0,173.8 544.0,172.2 550.0,171.4 C556.0,170.6 564.0,169.8 570.0,169.0 C576.0,168.2 582.5,166.7 590.0,166.1 C597.5,165.5 611.0,165.3 620.0,165.0 C629.0,164.7 638.0,164.0 650.0,163.8 C662.0,163.7 677.5,163.8 700.0,164.0 C722.5,164.2 767.0,165.2 800.0,165.0 C833.0,164.8 896.0,163.4 920.0,163.0 C944.0,162.6 950.0,161.9 960.0,162.5 C970.0,163.1 983.0,166.3 987.0,167.0" fill="none" stroke="#2262de" stroke-width="1.4" stroke-linejoin="round" />
<path d="M73.2,295.4 L102.3,188.0 C102.9,187.4 102.9,187.1 106.5,183.9 C110.1,180.8 120.5,169.1 126.0,167.0 C131.5,164.9 139.2,169.2 143.0,169.8 C146.8,170.4 147.7,172.0 151.4,171.2 C155.2,170.4 164.9,165.7 168.0,164.2 C171.1,162.7 169.8,162.5 172.0,161.0 C174.2,159.5 179.7,155.3 182.7,153.9 C185.7,152.5 187.2,151.9 192.3,151.5 C197.4,151.1 209.2,151.4 216.4,150.9 C223.6,150.4 234.3,148.3 240.0,148.0 C245.7,147.7 250.8,148.5 254.6,149.2 C258.4,149.9 262.6,151.8 265.4,152.6 C268.2,153.4 269.7,154.5 273.2,154.5 C276.7,154.5 283.5,152.9 288.8,152.6 C294.1,152.3 300.7,152.2 308.4,152.6 C316.1,153.0 328.8,154.4 340.0,155.0 C351.2,155.6 374.6,156.0 383.0,156.5 C391.4,157.0 390.4,158.1 396.0,158.4 C401.6,158.7 414.9,158.6 420.0,158.4 C425.1,158.2 427.0,156.5 430.0,157.0 C433.0,157.5 436.2,160.1 440.0,162.0 C443.8,163.9 452.0,167.9 455.0,170.0 C458.0,172.1 457.8,174.6 460.0,176.0 C462.2,177.4 467.8,179.1 470.0,179.6 C472.2,180.1 473.5,179.8 475.0,179.6 C476.5,179.4 476.2,178.5 480.0,178.0 C483.8,177.5 494.8,176.4 500.0,176.0 C505.2,175.6 510.5,175.6 515.0,175.0 C519.5,174.4 524.8,172.9 530.0,172.0 C535.2,171.1 544.0,170.0 550.0,169.0 C556.0,168.0 564.0,166.3 570.0,165.5 C576.0,164.7 582.5,164.0 590.0,163.8 C597.5,163.6 611.0,164.3 620.0,164.3 C629.0,164.3 638.0,163.7 650.0,163.8 C662.0,163.9 683.5,164.7 700.0,165.0 C716.5,165.3 746.5,165.7 760.0,166.0 C773.5,166.3 781.0,167.2 790.0,167.3 C799.0,167.4 805.0,167.1 820.0,166.7 C835.0,166.2 876.0,164.7 890.0,164.3 C904.0,163.9 907.1,164.6 913.0,164.0 C918.9,163.4 925.0,160.8 929.0,160.0 C933.0,159.2 935.4,158.8 940.0,159.0 C944.6,159.2 953.0,159.8 960.0,161.6 C967.0,163.4 983.0,169.8 987.0,171.3" fill="none" stroke="#22d278" stroke-width="1.3" stroke-linejoin="round" />
<path d="M73.2,295.4 L87.4,193.1 C89.0,192.6 95.8,190.3 98.0,189.5 C100.2,188.7 100.6,190.7 102.3,188.0 C104.0,185.3 106.3,175.0 109.3,171.2 C112.3,167.4 118.6,163.4 122.0,162.8 C125.4,162.2 129.1,165.6 131.8,167.0 C134.4,168.4 136.9,171.2 139.4,172.0 C141.9,172.8 146.0,172.7 148.6,172.6 C151.2,172.5 154.6,173.4 157.0,171.2 C159.4,169.0 162.6,161.0 164.7,158.0 C166.8,155.0 169.1,152.5 170.7,151.5 C172.3,150.5 174.1,151.1 175.5,151.5 C176.9,151.9 178.5,153.9 180.3,153.9 C182.1,153.9 185.0,151.9 187.5,151.5 C190.0,151.1 193.4,150.9 197.0,151.0 C200.6,151.1 207.1,152.2 211.6,152.0 C216.1,151.8 223.4,150.4 227.0,149.6 C230.6,148.8 232.6,147.2 235.6,146.6 C238.6,146.0 244.0,144.9 246.8,145.7 C249.7,146.4 252.4,150.1 254.6,151.6 C256.8,153.1 259.4,155.4 261.5,156.0 C263.6,156.6 266.0,155.9 268.3,155.5 C270.6,155.1 273.9,153.4 277.0,153.0 C280.1,152.6 285.6,152.5 288.8,152.6 C292.0,152.7 295.7,153.4 298.6,153.5 C301.5,153.6 305.0,152.8 308.4,153.0 C311.8,153.2 316.3,154.6 321.0,155.0 C325.7,155.4 330.7,155.3 340.0,155.5 C349.3,155.7 375.9,155.6 383.0,156.0 C390.1,156.4 385.6,157.7 387.0,158.4 C388.4,159.1 390.5,160.5 392.0,160.9 C393.5,161.3 395.7,161.1 397.0,160.9 C398.3,160.7 399.4,159.8 400.5,159.4 C401.6,159.0 400.4,158.2 404.5,158.0 C408.6,157.8 423.6,158.1 428.0,158.4 C432.4,158.7 432.6,159.8 433.8,160.0 C435.0,160.2 434.0,157.6 436.0,160.0 C438.0,162.4 444.1,173.3 447.0,176.0 C449.9,178.7 452.3,177.6 455.0,178.0 C457.7,178.4 462.0,178.8 465.0,179.0 C468.0,179.2 472.0,179.8 475.0,179.6 C478.0,179.4 482.0,178.5 485.0,178.0 C488.0,177.5 492.0,176.6 495.0,176.0 C498.0,175.4 502.0,174.2 505.0,174.0 C508.0,173.8 511.2,174.9 515.0,174.6 C518.8,174.3 525.5,173.1 530.0,172.0 C534.5,170.9 540.5,168.2 545.0,167.3 C549.5,166.4 555.5,166.6 560.0,166.1 C564.5,165.6 570.5,164.3 575.0,163.8 C579.5,163.3 586.2,162.5 590.0,162.6 C593.8,162.7 597.0,163.9 600.0,164.3 C603.0,164.7 605.5,165.6 610.0,165.5 C614.5,165.4 624.0,164.1 630.0,163.8 C636.0,163.5 639.5,163.1 650.0,163.2 C660.5,163.3 683.5,164.2 700.0,164.5 C716.5,164.8 748.0,164.6 760.0,165.0 C772.0,165.4 774.0,166.9 780.0,167.3 C786.0,167.7 794.0,167.9 800.0,167.9 C806.0,167.9 812.5,167.7 820.0,167.3 C827.5,166.9 839.5,165.9 850.0,165.5 C860.5,165.1 880.5,164.5 890.0,164.3 C899.5,164.1 907.1,165.3 913.0,164.0 C918.9,162.7 925.0,156.0 929.0,155.5 C933.0,155.0 933.7,159.1 939.5,160.8 C945.3,162.5 960.5,165.0 967.6,167.0 C974.7,169.0 984.1,172.9 987.0,174.0" fill="none" stroke="#ececec" stroke-width="1.3" stroke-linejoin="round" />
<polyline points="73.2,295.4 160.0,259.0 210.0,235.5 270.0,206.0 284.0,198.6 369.3,159.0 381.0,158.0 398.6,156.0 430.0,155.0 530.0,162.0 560.0,163.2 600.0,164.3 650.0,166.0 700.0,167.6 730.0,168.8 770.0,167.6 830.0,165.5 890.0,164.3 987.0,164.0" fill="none" stroke="#de620e" stroke-width="1.4" stroke-linejoin="round" />
<polyline points="73.2,295.4 160.0,278.0 494.5,200.0 565.0,184.5 650.0,165.0 661.0,163.5 690.0,161.7 770.0,161.7 830.0,162.6 890.0,165.0 987.0,164.5" fill="none" stroke="#da44a8" stroke-width="1.4" stroke-linejoin="round" />
<line x1="4.4" y1="295.6" x2="73.5" y2="295.6" stroke="#e040a8" stroke-width="2"/>
<rect x="4.5" y="297.5" width="2" height="2" fill="#20b8b8"/>
<polyline points="6,299 9,302 14,302" fill="none" stroke="#20b8b8" stroke-width="0.8"/>
<rect x="164" y="139" width="2" height="2" fill="#e8185c"/>
<polyline points="166,140 169.5,137 174,137" fill="none" stroke="#e8185c" stroke-width="0.8"/>
<!-- arrows -->
<rect x="103.5" y="84" width="3.5" height="76.5" fill="#a8a8a8"/>
<polygon points="103.5,160.5 107,160.5 105.25,163" fill="#a8a8a8"/>
<rect x="175.5" y="84" width="3.5" height="66" fill="#a8a8a8"/>
<polygon points="175.5,150 179,150 177.25,152.5" fill="#a8a8a8"/>
<!-- panel separators -->
<g shape-rendering="crispEdges">
<rect x="4" y="431" width="1020" height="1.5" fill="#4a4a4a"/>
<line x1="4" y1="438.5" x2="994" y2="438.5" stroke="#2a2a2a" stroke-dasharray="1 1.5"/>
<rect x="4" y="453.3" width="1020" height="1.4" fill="#4a4a4a"/>
<rect x="4" y="461.2" width="985" height="1" fill="#505050"/>
<rect x="4" y="465.8" width="985" height="1" fill="#505050"/>
<rect x="4" y="470.2" width="985" height="1" fill="#505050"/>
<rect x="4" y="475.8" width="1020" height="1.2" fill="#4a4a4a"/>
<line x1="4" y1="486.8" x2="995" y2="486.8" stroke="#3a3a3a" stroke-width="1" stroke-dasharray="1.5 1"/>
</g>
<rect x="75.0" y="435.0" width="2" height="18.5" fill="#e8185c"/>
<rect x="78.0" y="446.5" width="2" height="7.0" fill="#1fc3c3"/>
<rect x="81.0" y="447.5" width="2" height="6.0" fill="#1fc3c3"/>
<rect x="84.0" y="448.5" width="2" height="5.0" fill="#1fc3c3"/>
<rect x="87.0" y="449.0" width="2" height="4.5" fill="#1fc3c3"/>
<rect x="90.0" y="450.0" width="2" height="3.5" fill="#e8185c"/>
<rect x="93.0" y="449.0" width="2" height="4.5" fill="#e8185c"/>
<rect x="96.0" y="448.0" width="2" height="5.5" fill="#1fc3c3"/>
<rect x="99.0" y="449.5" width="2" height="4.0" fill="#e8185c"/>
<rect x="102.0" y="450.0" width="2" height="3.5" fill="#e8185c"/>
<rect x="105.0" y="448.5" width="2" height="5.0" fill="#1fc3c3"/>
<rect x="108.0" y="449.5" width="2" height="4.0" fill="#1fc3c3"/>
<rect x="111.0" y="449.5" width="2" height="4.0" fill="#1fc3c3"/>
<rect x="114.0" y="450.5" width="2" height="3.0" fill="#e8185c"/>
<rect x="117.0" y="449.5" width="2" height="4.0" fill="#1fc3c3"/>
<rect x="120.0" y="450.0" width="2" height="3.5" fill="#e8185c"/>
<rect x="122.0" y="450.5" width="2" height="3.0" fill="#1fc3c3"/>
<rect x="125.5" y="450.0" width="2" height="3.5" fill="#1fc3c3"/>
<rect x="128.5" y="450.5" width="2" height="3.0" fill="#e8185c"/>
<rect x="131.5" y="451.0" width="2" height="2.5" fill="#1fc3c3"/>
<rect x="134.5" y="450.5" width="2" height="3.0" fill="#e8185c"/>
<rect x="137.5" y="451.0" width="2" height="2.5" fill="#e8185c"/>
<rect x="140.0" y="450.0" width="2" height="3.5" fill="#e8185c"/>
<rect x="143.5" y="450.5" width="2" height="3.0" fill="#1fc3c3"/>
<rect x="146.5" y="451.0" width="2" height="2.5" fill="#e8185c"/>
<rect x="149.5" y="451.0" width="2" height="2.5" fill="#e8185c"/>
<rect x="152.5" y="450.5" width="2" height="3.0" fill="#1fc3c3"/>
<rect x="155.5" y="451.0" width="2" height="2.5" fill="#e8185c"/>
<rect x="158.5" y="451.0" width="2" height="2.5" fill="#e8185c"/>
<rect x="161.0" y="450.5" width="2" height="3.0" fill="#1fc3c3"/>
<rect x="164.5" y="451.0" width="2" height="2.5" fill="#e8185c"/>
<rect x="167.5" y="447.5" width="2" height="6.0" fill="#e8185c"/>
<rect x="170.5" y="447.0" width="2" height="6.5" fill="#e8185c"/>
<rect x="173.5" y="450.5" width="2" height="3.0" fill="#1fc3c3"/>
<rect x="176.0" y="451.0" width="2" height="2.5" fill="#1fc3c3"/>
<rect x="179.5" y="451.0" width="2" height="2.5" fill="#1fc3c3"/>
<rect x="182.5" y="450.5" width="2" height="3.0" fill="#e8185c"/>
<rect x="185.0" y="451.5" width="2" height="2.0" fill="#1fc3c3"/>
<rect x="188.0" y="450.5" width="2" height="3.0" fill="#e8185c"/>
<rect x="191.0" y="451.0" width="2" height="2.5" fill="#e8185c"/>
<rect x="194.0" y="451.0" width="2" height="2.5" fill="#e8185c"/>
<rect x="197.0" y="451.3" width="2" height="2.2" fill="#1fc3c3"/>
<rect x="200.0" y="452.0" width="2" height="1.5" fill="#e8185c"/>
<rect x="203.0" y="451.1" width="2" height="2.4" fill="#1fc3c3"/>
<rect x="206.0" y="450.6" width="2" height="2.9" fill="#e8185c"/>
<rect x="209.0" y="452.0" width="2" height="1.5" fill="#1fc3c3"/>
<rect x="212.0" y="450.8" width="2" height="2.7" fill="#e8185c"/>
<rect x="215.0" y="451.2" width="2" height="2.3" fill="#1fc3c3"/>
<rect x="218.0" y="451.0" width="2" height="2.5" fill="#1fc3c3"/>
<rect x="221.0" y="451.0" width="2" height="2.5" fill="#e8185c"/>
<rect x="223.5" y="450.5" width="2" height="3.0" fill="#1fc3c3"/>
<rect x="226.0" y="451.4" width="2" height="2.1" fill="#1fc3c3"/>
<rect x="229.0" y="450.8" width="2" height="2.7" fill="#e8185c"/>
<rect x="231.5" y="451.5" width="2" height="2.0" fill="#e8185c"/>
<rect x="235.0" y="450.9" width="2" height="2.6" fill="#1fc3c3"/>
<rect x="238.0" y="451.8" width="2" height="1.7" fill="#1fc3c3"/>
<rect x="241.0" y="451.4" width="2" height="2.1" fill="#e8185c"/>
<rect x="243.9" y="450.3" width="2" height="3.2" fill="#1fc3c3"/>
<rect x="246.9" y="451.0" width="2" height="2.5" fill="#1fc3c3"/>
<rect x="249.9" y="451.4" width="2" height="2.1" fill="#1fc3c3"/>
<rect x="252.8" y="452.0" width="2" height="1.5" fill="#1fc3c3"/>
<rect x="255.8" y="451.8" width="2" height="1.7" fill="#1fc3c3"/>
<rect x="258.8" y="451.2" width="2" height="2.3" fill="#1fc3c3"/>
<rect x="261.7" y="450.7" width="2" height="2.8" fill="#e8185c"/>
<rect x="264.7" y="451.0" width="2" height="2.5" fill="#e8185c"/>
<rect x="267.7" y="451.0" width="2" height="2.5" fill="#1fc3c3"/>
<rect x="270.6" y="451.3" width="2" height="2.2" fill="#1fc3c3"/>
<rect x="273.6" y="450.5" width="2" height="3.0" fill="#e8185c"/>
<rect x="276.6" y="451.5" width="2" height="2.0" fill="#e8185c"/>
<rect x="279.5" y="451.6" width="2" height="1.9" fill="#e8185c"/>
<rect x="282.5" y="450.8" width="2" height="2.7" fill="#e8185c"/>
<rect x="285.5" y="451.3" width="2" height="2.2" fill="#1fc3c3"/>
<rect x="288.4" y="451.5" width="2" height="2.0" fill="#1fc3c3"/>
<rect x="291.4" y="451.6" width="2" height="1.9" fill="#1fc3c3"/>
<rect x="294.4" y="451.5" width="2" height="2.0" fill="#e8185c"/>
<rect x="297.3" y="450.9" width="2" height="2.6" fill="#1fc3c3"/>
<rect x="300.3" y="451.1" width="2" height="2.4" fill="#1fc3c3"/>
<rect x="303.3" y="452.0" width="2" height="1.5" fill="#e8185c"/>
<rect x="306.2" y="451.0" width="2" height="2.5" fill="#1fc3c3"/>
<rect x="309.2" y="451.2" width="2" height="2.3" fill="#1fc3c3"/>
<rect x="312.2" y="451.9" width="2" height="1.6" fill="#1fc3c3"/>
<rect x="315.1" y="450.8" width="2" height="2.7" fill="#e8185c"/>
<rect x="318.1" y="451.5" width="2" height="2.0" fill="#1fc3c3"/>
<rect x="321.1" y="451.5" width="2" height="2.0" fill="#1fc3c3"/>
<rect x="324.0" y="450.8" width="2" height="2.7" fill="#1fc3c3"/>
<rect x="327.0" y="450.5" width="2" height="3.0" fill="#e8185c"/>
<rect x="330.0" y="451.7" width="2" height="1.8" fill="#1fc3c3"/>
<rect x="332.9" y="451.0" width="2" height="2.5" fill="#e8185c"/>
<rect x="335.9" y="451.8" width="2" height="1.7" fill="#1fc3c3"/>
<rect x="338.9" y="449.9" width="2" height="3.6" fill="#1fc3c3"/>
<rect x="341.8" y="451.6" width="2" height="1.9" fill="#1fc3c3"/>
<rect x="344.8" y="450.6" width="2" height="2.9" fill="#1fc3c3"/>
<rect x="347.8" y="451.7" width="2" height="1.8" fill="#1fc3c3"/>
<rect x="350.7" y="450.8" width="2" height="2.7" fill="#e8185c"/>
<rect x="353.7" y="450.0" width="2" height="3.5" fill="#1fc3c3"/>
<rect x="356.7" y="452.0" width="2" height="1.5" fill="#e8185c"/>
<rect x="359.6" y="451.6" width="2" height="1.9" fill="#e8185c"/>
<rect x="362.6" y="451.0" width="2" height="2.5" fill="#1fc3c3"/>
<rect x="365.6" y="451.4" width="2" height="2.1" fill="#1fc3c3"/>
<rect x="368.5" y="451.7" width="2" height="1.8" fill="#1fc3c3"/>
<rect x="371.5" y="450.0" width="2" height="3.5" fill="#e8185c"/>
<rect x="374.5" y="451.3" width="2" height="2.2" fill="#e8185c"/>
<rect x="377.4" y="452.0" width="2" height="1.5" fill="#e8185c"/>
<rect x="380.4" y="450.8" width="2" height="2.7" fill="#1fc3c3"/>
<rect x="383.4" y="452.0" width="2" height="1.5" fill="#1fc3c3"/>
<rect x="386.3" y="450.6" width="2" height="2.9" fill="#1fc3c3"/>
<rect x="389.3" y="451.6" width="2" height="1.9" fill="#e8185c"/>
<rect x="392.3" y="451.2" width="2" height="2.3" fill="#e8185c"/>
<rect x="395.2" y="450.5" width="2" height="3.0" fill="#e8185c"/>
<rect x="398.2" y="451.2" width="2" height="2.3" fill="#e8185c"/>
<rect x="401.2" y="452.0" width="2" height="1.5" fill="#1fc3c3"/>
<rect x="404.1" y="452.0" width="2" height="1.5" fill="#e8185c"/>
<rect x="407.1" y="450.6" width="2" height="2.9" fill="#e8185c"/>
<rect x="410.1" y="450.9" width="2" height="2.6" fill="#1fc3c3"/>
<rect x="413.0" y="451.8" width="2" height="1.7" fill="#1fc3c3"/>
<rect x="416.0" y="450.8" width="2" height="2.7" fill="#e8185c"/>
<rect x="419.0" y="451.0" width="2" height="2.5" fill="#1fc3c3"/>
<rect x="421.9" y="450.9" width="2" height="2.6" fill="#e8185c"/>
<rect x="424.9" y="452.0" width="2" height="1.5" fill="#1fc3c3"/>
<rect x="427.9" y="451.5" width="2" height="2.0" fill="#1fc3c3"/>
<rect x="430.8" y="450.8" width="2" height="2.7" fill="#1fc3c3"/>
<rect x="433.8" y="450.9" width="2" height="2.6" fill="#1fc3c3"/>
<rect x="436.8" y="450.8" width="2" height="2.7" fill="#1fc3c3"/>
<rect x="439.7" y="452.0" width="2" height="1.5" fill="#1fc3c3"/>
<rect x="442.7" y="451.2" width="2" height="2.3" fill="#1fc3c3"/>
<rect x="445.7" y="451.0" width="2" height="2.5" fill="#e8185c"/>
<rect x="448.6" y="449.8" width="2" height="3.7" fill="#1fc3c3"/>
<rect x="451.6" y="451.9" width="2" height="1.6" fill="#e8185c"/>
<rect x="454.6" y="451.5" width="2" height="2.0" fill="#1fc3c3"/>
<rect x="459.5" y="451.3" width="2" height="2.2" fill="#1fc3c3"/>
<rect x="462.5" y="450.8" width="2" height="2.7" fill="#e8185c"/>
<rect x="465.4" y="451.6" width="2" height="1.9" fill="#1fc3c3"/>
<rect x="468.4" y="450.6" width="2" height="2.9" fill="#1fc3c3"/>
<rect x="471.4" y="451.8" width="2" height="1.7" fill="#e8185c"/>
<rect x="474.3" y="451.1" width="2" height="2.4" fill="#e8185c"/>
<rect x="477.3" y="451.6" width="2" height="1.9" fill="#1fc3c3"/>
<rect x="480.3" y="451.2" width="2" height="2.3" fill="#1fc3c3"/>
<rect x="483.2" y="451.7" width="2" height="1.8" fill="#e8185c"/>
<rect x="486.2" y="452.0" width="2" height="1.5" fill="#e8185c"/>
<rect x="489.2" y="450.6" width="2" height="2.9" fill="#1fc3c3"/>
<rect x="492.1" y="451.1" width="2" height="2.4" fill="#e8185c"/>
<rect x="495.1" y="451.6" width="2" height="1.9" fill="#e8185c"/>
<rect x="498.1" y="451.2" width="2" height="2.3" fill="#e8185c"/>
<rect x="501.0" y="450.7" width="2" height="2.8" fill="#e8185c"/>
<rect x="504.0" y="451.9" width="2" height="1.6" fill="#1fc3c3"/>
<rect x="507.0" y="451.4" width="2" height="2.1" fill="#e8185c"/>
<rect x="509.9" y="451.0" width="2" height="2.5" fill="#1fc3c3"/>
<rect x="512.9" y="451.0" width="2" height="2.5" fill="#e8185c"/>
<rect x="515.9" y="451.5" width="2" height="2.0" fill="#e8185c"/>
<rect x="518.8" y="452.0" width="2" height="1.5" fill="#e8185c"/>
<rect x="521.8" y="450.6" width="2" height="2.9" fill="#1fc3c3"/>
<rect x="524.8" y="451.1" width="2" height="2.4" fill="#1fc3c3"/>
<rect x="527.7" y="451.3" width="2" height="2.2" fill="#1fc3c3"/>
<rect x="530.7" y="451.5" width="2" height="2.0" fill="#e8185c"/>
<rect x="533.7" y="451.1" width="2" height="2.4" fill="#e8185c"/>
<rect x="536.6" y="451.6" width="2" height="1.9" fill="#e8185c"/>
<rect x="539.6" y="451.9" width="2" height="1.6" fill="#e8185c"/>
<rect x="542.6" y="451.7" width="2" height="1.8" fill="#1fc3c3"/>
<rect x="545.5" y="451.7" width="2" height="1.8" fill="#e8185c"/>
<rect x="548.5" y="451.7" width="2" height="1.8" fill="#1fc3c3"/>
<rect x="551.5" y="452.0" width="2" height="1.5" fill="#e8185c"/>
<rect x="554.4" y="450.9" width="2" height="2.6" fill="#1fc3c3"/>
<rect x="557.4" y="452.0" width="2" height="1.5" fill="#e8185c"/>
<rect x="560.4" y="450.9" width="2" height="2.6" fill="#e8185c"/>
<rect x="563.3" y="451.9" width="2" height="1.6" fill="#e8185c"/>
<rect x="566.3" y="451.1" width="2" height="2.4" fill="#e8185c"/>
<rect x="569.3" y="450.5" width="2" height="3.0" fill="#1fc3c3"/>
<rect x="572.2" y="451.2" width="2" height="2.3" fill="#1fc3c3"/>
<rect x="575.2" y="451.7" width="2" height="1.8" fill="#1fc3c3"/>
<rect x="578.2" y="451.3" width="2" height="2.2" fill="#e8185c"/>
<rect x="581.1" y="451.2" width="2" height="2.3" fill="#1fc3c3"/>
<rect x="584.1" y="452.0" width="2" height="1.5" fill="#e8185c"/>
<rect x="587.1" y="451.7" width="2" height="1.8" fill="#e8185c"/>
<rect x="590.0" y="451.2" width="2" height="2.3" fill="#1fc3c3"/>
<rect x="593.0" y="451.6" width="2" height="1.9" fill="#1fc3c3"/>
<rect x="596.0" y="451.3" width="2" height="2.2" fill="#1fc3c3"/>
<rect x="598.9" y="450.9" width="2" height="2.6" fill="#e8185c"/>
<rect x="601.9" y="450.8" width="2" height="2.7" fill="#1fc3c3"/>
<rect x="604.9" y="450.8" width="2" height="2.7" fill="#e8185c"/>
<rect x="607.9" y="450.9" width="2" height="2.6" fill="#1fc3c3"/>
<rect x="610.8" y="451.5" width="2" height="2.0" fill="#1fc3c3"/>
<rect x="613.8" y="451.3" width="2" height="2.2" fill="#e8185c"/>
<rect x="616.8" y="451.5" width="2" height="2.0" fill="#e8185c"/>
<rect x="619.7" y="451.5" width="2" height="2.0" fill="#1fc3c3"/>
<rect x="622.7" y="451.4" width="2" height="2.1" fill="#e8185c"/>
<rect x="625.7" y="452.0" width="2" height="1.5" fill="#1fc3c3"/>
<rect x="628.6" y="451.5" width="2" height="2.0" fill="#e8185c"/>
<rect x="631.6" y="451.3" width="2" height="2.2" fill="#1fc3c3"/>
<rect x="634.6" y="451.9" width="2" height="1.6" fill="#e8185c"/>
<rect x="637.5" y="451.3" width="2" height="2.2" fill="#1fc3c3"/>
<rect x="640.5" y="451.0" width="2" height="2.5" fill="#1fc3c3"/>
<rect x="643.5" y="451.4" width="2" height="2.1" fill="#e8185c"/>
<rect x="646.4" y="450.1" width="2" height="3.4" fill="#1fc3c3"/>
<rect x="649.4" y="452.0" width="2" height="1.5" fill="#e8185c"/>
<rect x="652.4" y="451.4" width="2" height="2.1" fill="#1fc3c3"/>
<rect x="655.3" y="452.0" width="2" height="1.5" fill="#1fc3c3"/>
<rect x="658.3" y="450.7" width="2" height="2.8" fill="#e8185c"/>
<rect x="661.3" y="449.7" width="2" height="3.8" fill="#e8185c"/>
<rect x="664.2" y="452.0" width="2" height="1.5" fill="#1fc3c3"/>
<rect x="667.2" y="451.2" width="2" height="2.3" fill="#1fc3c3"/>
<rect x="670.2" y="451.0" width="2" height="2.5" fill="#1fc3c3"/>
<rect x="673.1" y="451.5" width="2" height="2.0" fill="#1fc3c3"/>
<rect x="676.1" y="451.0" width="2" height="2.5" fill="#e8185c"/>
<rect x="679.1" y="452.0" width="2" height="1.5" fill="#e8185c"/>
<rect x="682.0" y="450.8" width="2" height="2.7" fill="#1fc3c3"/>
<rect x="685.0" y="451.1" width="2" height="2.4" fill="#1fc3c3"/>
<rect x="688.0" y="451.3" width="2" height="2.2" fill="#1fc3c3"/>
<rect x="690.9" y="451.7" width="2" height="1.8" fill="#1fc3c3"/>
<rect x="693.9" y="450.9" width="2" height="2.6" fill="#e8185c"/>
<rect x="696.9" y="451.6" width="2" height="1.9" fill="#e8185c"/>
<rect x="699.8" y="451.2" width="2" height="2.3" fill="#1fc3c3"/>
<rect x="702.8" y="451.6" width="2" height="1.9" fill="#e8185c"/>
<rect x="705.8" y="452.0" width="2" height="1.5" fill="#1fc3c3"/>
<rect x="708.7" y="451.3" width="2" height="2.2" fill="#e8185c"/>
<rect x="711.7" y="451.2" width="2" height="2.3" fill="#1fc3c3"/>
<rect x="714.7" y="450.8" width="2" height="2.7" fill="#e8185c"/>
<rect x="717.6" y="451.8" width="2" height="1.7" fill="#e8185c"/>
<rect x="720.6" y="451.3" width="2" height="2.2" fill="#1fc3c3"/>
<rect x="723.6" y="450.9" width="2" height="2.6" fill="#e8185c"/>
<rect x="726.5" y="451.2" width="2" height="2.3" fill="#1fc3c3"/>
<rect x="729.5" y="450.6" width="2" height="2.9" fill="#e8185c"/>
<rect x="732.5" y="450.1" width="2" height="3.4" fill="#e8185c"/>
<rect x="735.4" y="451.8" width="2" height="1.7" fill="#1fc3c3"/>
<rect x="738.4" y="452.0" width="2" height="1.5" fill="#1fc3c3"/>
<rect x="741.4" y="450.8" width="2" height="2.7" fill="#e8185c"/>
<rect x="744.3" y="450.4" width="2" height="3.1" fill="#1fc3c3"/>
<rect x="747.3" y="450.7" width="2" height="2.8" fill="#1fc3c3"/>
<rect x="750.3" y="450.8" width="2" height="2.7" fill="#1fc3c3"/>
<rect x="753.2" y="451.7" width="2" height="1.8" fill="#e8185c"/>
<rect x="756.2" y="451.7" width="2" height="1.8" fill="#1fc3c3"/>
<rect x="759.2" y="450.8" width="2" height="2.7" fill="#e8185c"/>
<rect x="762.1" y="451.8" width="2" height="1.7" fill="#1fc3c3"/>
<rect x="765.1" y="452.0" width="2" height="1.5" fill="#1fc3c3"/>
<rect x="768.1" y="451.9" width="2" height="1.6" fill="#e8185c"/>
<rect x="771.0" y="449.8" width="2" height="3.7" fill="#e8185c"/>
<rect x="774.0" y="450.1" width="2" height="3.4" fill="#1fc3c3"/>
<rect x="777.0" y="451.7" width="2" height="1.8" fill="#1fc3c3"/>
<rect x="779.9" y="451.7" width="2" height="1.8" fill="#e8185c"/>
<rect x="782.9" y="451.2" width="2" height="2.3" fill="#e8185c"/>
<rect x="785.9" y="451.7" width="2" height="1.8" fill="#1fc3c3"/>
<rect x="788.8" y="450.5" width="2" height="3.0" fill="#e8185c"/>
<rect x="791.8" y="451.3" width="2" height="2.2" fill="#e8185c"/>
<rect x="794.8" y="452.0" width="2" height="1.5" fill="#e8185c"/>
<rect x="797.7" y="450.5" width="2" height="3.0" fill="#1fc3c3"/>
<rect x="800.7" y="451.6" width="2" height="1.9" fill="#e8185c"/>
<rect x="803.7" y="451.2" width="2" height="2.3" fill="#1fc3c3"/>
<rect x="806.6" y="451.3" width="2" height="2.2" fill="#1fc3c3"/>
<rect x="809.6" y="451.5" width="2" height="2.0" fill="#e8185c"/>
<rect x="812.6" y="451.1" width="2" height="2.4" fill="#1fc3c3"/>
<rect x="815.5" y="451.7" width="2" height="1.8" fill="#e8185c"/>
<rect x="818.5" y="452.0" width="2" height="1.5" fill="#e8185c"/>
<rect x="821.5" y="452.0" width="2" height="1.5" fill="#e8185c"/>
<rect x="824.4" y="452.0" width="2" height="1.5" fill="#1fc3c3"/>
<rect x="827.4" y="451.8" width="2" height="1.7" fill="#e8185c"/>
<rect x="830.4" y="451.3" width="2" height="2.2" fill="#e8185c"/>
<rect x="833.3" y="451.3" width="2" height="2.2" fill="#1fc3c3"/>
<rect x="836.3" y="451.0" width="2" height="2.5" fill="#1fc3c3"/>
<rect x="839.3" y="451.2" width="2" height="2.3" fill="#1fc3c3"/>
<rect x="842.2" y="451.8" width="2" height="1.7" fill="#e8185c"/>
<rect x="845.2" y="451.7" width="2" height="1.8" fill="#e8185c"/>
<rect x="848.2" y="452.0" width="2" height="1.5" fill="#1fc3c3"/>
<rect x="851.1" y="451.4" width="2" height="2.1" fill="#e8185c"/>
<rect x="854.1" y="451.0" width="2" height="2.5" fill="#1fc3c3"/>
<rect x="857.1" y="451.0" width="2" height="2.5" fill="#e8185c"/>
<rect x="860.0" y="451.4" width="2" height="2.1" fill="#1fc3c3"/>
<rect x="863.0" y="451.4" width="2" height="2.1" fill="#e8185c"/>
<rect x="866.0" y="450.7" width="2" height="2.8" fill="#e8185c"/>
<rect x="868.9" y="451.3" width="2" height="2.2" fill="#1fc3c3"/>
<rect x="871.9" y="450.9" width="2" height="2.6" fill="#1fc3c3"/>
<rect x="874.9" y="451.0" width="2" height="2.5" fill="#e8185c"/>
<rect x="877.8" y="451.2" width="2" height="2.3" fill="#1fc3c3"/>
<rect x="880.8" y="450.5" width="2" height="3.0" fill="#e8185c"/>
<rect x="883.8" y="451.6" width="2" height="1.9" fill="#e8185c"/>
<rect x="886.7" y="451.5" width="2" height="2.0" fill="#e8185c"/>
<rect x="889.7" y="451.8" width="2" height="1.7" fill="#1fc3c3"/>
<rect x="892.7" y="451.8" width="2" height="1.7" fill="#1fc3c3"/>
<rect x="895.6" y="450.4" width="2" height="3.1" fill="#e8185c"/>
<rect x="898.6" y="450.2" width="2" height="3.3" fill="#1fc3c3"/>
<rect x="901.6" y="451.3" width="2" height="2.2" fill="#e8185c"/>
<rect x="904.5" y="451.0" width="2" height="2.5" fill="#1fc3c3"/>
<rect x="907.5" y="450.6" width="2" height="2.9" fill="#1fc3c3"/>
<rect x="910.5" y="450.8" width="2" height="2.7" fill="#e8185c"/>
<rect x="913.5" y="450.6" width="2" height="2.9" fill="#1fc3c3"/>
<rect x="916.4" y="452.0" width="2" height="1.5" fill="#e8185c"/>
<rect x="919.4" y="451.7" width="2" height="1.8" fill="#e8185c"/>
<rect x="922.4" y="451.0" width="2" height="2.5" fill="#e8185c"/>
<rect x="925.3" y="450.4" width="2" height="3.1" fill="#1fc3c3"/>
<rect x="928.3" y="451.2" width="2" height="2.3" fill="#1fc3c3"/>
<rect x="931.3" y="451.8" width="2" height="1.7" fill="#1fc3c3"/>
<rect x="934.2" y="451.5" width="2" height="2.0" fill="#1fc3c3"/>
<rect x="937.2" y="451.7" width="2" height="1.8" fill="#e8185c"/>
<rect x="940.2" y="451.8" width="2" height="1.7" fill="#e8185c"/>
<rect x="943.1" y="450.4" width="2" height="3.1" fill="#1fc3c3"/>
<rect x="946.1" y="451.7" width="2" height="1.8" fill="#e8185c"/>
<rect x="949.1" y="451.3" width="2" height="2.2" fill="#1fc3c3"/>
<rect x="952.0" y="450.0" width="2" height="3.5" fill="#e8185c"/>
<rect x="955.0" y="450.6" width="2" height="2.9" fill="#1fc3c3"/>
<rect x="958.0" y="451.1" width="2" height="2.4" fill="#e8185c"/>
<rect x="960.9" y="451.7" width="2" height="1.8" fill="#1fc3c3"/>
<rect x="963.9" y="451.1" width="2" height="2.4" fill="#1fc3c3"/>
<rect x="966.9" y="450.3" width="2" height="3.2" fill="#e8185c"/>
<rect x="969.8" y="450.9" width="2" height="2.6" fill="#1fc3c3"/>
<rect x="987" y="447.5" width="2" height="6" fill="#e8185c"/>
<path d="M122.0,458.0 C127.7,459.4 145.0,466.3 156.0,466.6 C167.0,466.9 179.4,460.6 188.0,459.8 C196.6,459.0 202.1,460.7 207.4,461.8 C212.7,462.9 214.7,466.8 219.6,466.6 C224.5,466.4 231.8,461.3 236.7,460.5 C241.6,459.7 243.3,460.4 249.0,461.8 C254.7,463.2 261.2,468.8 271.0,469.0 C280.8,469.2 297.0,463.0 307.5,463.0 C318.0,463.0 326.9,467.6 334.0,469.0 C341.1,470.4 343.3,472.5 350.0,471.5 C356.7,470.5 364.2,463.2 374.4,463.0 C384.6,462.8 401.6,469.7 411.0,470.3 C420.4,470.9 423.7,466.2 430.6,466.6 C437.5,467.0 445.6,471.7 452.5,472.7 C459.4,473.7 463.1,474.9 472.0,472.7 C480.9,470.5 489.7,461.8 506.0,459.3 C522.3,456.9 554.0,457.4 569.7,458.0 C585.4,458.6 590.9,461.2 600.0,463.0 C609.1,464.8 617.5,469.2 624.4,469.0 C631.3,468.8 634.6,462.8 641.5,461.8 C648.4,460.8 658.7,461.6 666.0,463.0 C673.3,464.4 677.3,470.3 685.4,470.3 C693.5,470.3 704.5,463.1 714.7,463.0 C724.9,462.9 737.1,470.0 746.5,469.6 C755.9,469.2 761.2,460.4 771.0,460.5 C780.8,460.6 794.4,470.5 805.0,470.3 C815.6,470.1 826.8,461.0 834.4,459.3 C842.0,457.6 844.2,459.5 850.8,460.2 C857.4,460.9 865.2,462.3 874.0,463.7 C882.8,465.1 893.7,469.2 903.5,468.6 C913.3,468.0 924.0,460.8 932.8,459.8 C941.6,458.8 949.1,460.6 956.3,462.7 C963.5,464.8 970.5,470.8 975.8,472.5 C981.1,474.2 986.0,473.0 988.0,473.1" fill="none" stroke="#2d6fd8" stroke-width="1.1" stroke-linejoin="round" />
<path d="M120.8,458.0 C123.0,460.4 129.3,470.6 134.0,472.7 C138.7,474.8 144.7,472.1 148.8,470.3 C152.9,468.5 154.9,463.6 158.6,461.8 C162.3,460.0 166.5,458.0 170.8,459.3 C175.1,460.6 179.7,469.2 184.2,469.6 C188.7,470.0 193.2,461.8 197.7,461.8 C202.2,461.8 206.1,469.6 211.0,469.6 C215.9,469.6 222.7,463.5 227.0,461.8 C231.3,460.1 231.9,457.5 236.7,459.3 C241.5,461.1 249.1,472.7 256.0,472.7 C262.9,472.7 272.5,460.5 278.0,459.3 C283.5,458.1 286.3,465.0 289.0,465.4 C291.7,465.8 292.5,461.8 294.0,461.8 C295.5,461.8 295.6,465.4 297.8,465.4 C300.1,465.4 304.3,461.4 307.5,461.8 C310.7,462.2 314.1,466.5 317.0,467.9 C319.9,469.3 321.8,470.5 324.6,470.3 C327.4,470.1 329.8,466.8 334.0,466.6 C338.2,466.4 345.7,470.0 350.0,469.0 C354.3,468.0 357.0,462.0 359.8,460.5 C362.6,459.0 364.1,458.2 367.0,459.8 C369.9,461.4 372.8,468.2 376.9,470.3 C381.0,472.4 386.2,474.8 391.5,472.7 C396.8,470.6 403.4,458.4 408.6,458.0 C413.9,457.6 419.3,468.9 423.0,470.3 C426.7,471.7 426.9,466.2 430.6,466.6 C434.3,467.0 440.1,471.9 445.0,472.7 C449.9,473.5 455.9,472.1 460.0,471.5 C464.1,470.9 466.0,470.6 469.6,469.0 C473.2,467.4 478.6,463.2 481.8,461.8 C485.0,460.4 485.8,460.3 489.0,460.5 C492.2,460.7 497.7,463.4 501.0,463.0 C504.3,462.6 505.4,457.6 508.7,458.0 C512.0,458.4 515.0,465.2 521.0,465.4 C527.0,465.6 538.1,459.0 545.0,459.3 C551.9,459.6 557.5,466.8 562.4,467.0 C567.3,467.2 570.2,459.8 574.6,460.5 C579.0,461.2 584.8,470.1 589.0,471.5 C593.2,472.9 596.8,471.0 600.0,469.0 C603.2,467.0 604.8,459.7 608.5,459.3 C612.2,458.9 617.3,466.6 622.0,466.6 C626.7,466.6 632.5,459.3 636.6,459.3 C640.7,459.3 643.5,466.0 646.4,466.6 C649.2,467.2 650.4,462.8 653.7,463.0 C657.0,463.2 660.7,466.6 666.0,467.9 C671.3,469.2 680.1,472.0 685.4,471.0 C690.7,470.0 694.4,463.6 697.7,461.8 C701.0,460.1 702.2,459.1 705.0,460.5 C707.8,461.9 711.0,468.9 714.7,470.3 C718.4,471.7 723.8,469.6 727.0,469.0 C730.2,468.4 731.2,466.8 734.0,467.0 C736.8,467.2 740.3,471.6 744.0,470.3 C747.7,469.0 751.9,461.1 756.0,459.3 C760.1,457.5 764.0,457.1 768.5,459.3 C773.0,461.5 778.1,472.5 783.0,472.7 C787.9,472.9 792.9,462.2 797.8,460.5 C802.7,458.8 807.9,462.3 812.4,462.3 C816.9,462.3 820.8,460.5 824.6,460.5 C828.4,460.5 831.0,462.1 835.0,462.2 C839.0,462.2 844.5,460.0 848.8,460.8 C853.0,461.6 856.9,467.0 860.5,467.2 C864.1,467.4 866.7,461.9 870.3,461.8 C873.9,461.7 878.8,465.6 882.0,466.6 C885.2,467.6 887.2,468.4 889.8,467.6 C892.4,466.8 894.9,461.5 897.7,461.8 C900.5,462.1 903.1,469.9 906.4,469.6 C909.6,469.3 913.8,461.7 917.2,459.8 C920.6,457.9 924.4,458.1 927.0,458.2 C929.6,458.4 930.5,458.6 932.8,460.8 C935.1,463.0 936.7,470.5 940.6,471.5 C944.5,472.5 952.4,466.6 956.3,466.6 C960.2,466.6 960.8,470.5 964.0,471.5 C967.2,472.5 972.2,472.8 975.8,472.5 C979.4,472.2 983.5,470.3 985.5,470.0 C987.5,469.7 987.6,470.4 988.0,470.5" fill="none" stroke="#b8a420" stroke-width="1.1" stroke-linejoin="round" />
<polyline points="4.0,485.0 7.0,485.0 10.0,485.0 13.0,485.0 16.0,485.0 19.0,485.0 22.0,485.0 25.0,485.0 28.0,485.0 31.0,485.0 34.0,485.0 37.0,485.0 40.0,485.0 43.0,485.0 46.0,485.0 49.0,485.0 52.0,485.0 55.0,485.0 58.0,485.0 61.0,485.0 64.0,485.0 67.0,485.0 70.0,485.0 73.0,485.0 76.0,485.0 76.0,481.0 79.0,481.0 79.0,479.5 82.0,479.5 82.0,479.0 85.0,479.0 85.0,478.5 88.0,478.5 88.0,478.0 91.0,478.0 94.0,478.0 97.0,478.0 100.0,478.0 100.0,477.5 103.0,477.5 106.0,477.5 109.0,477.5 112.0,477.5 115.0,477.5 115.0,478.0 118.0,478.0 121.0,478.0 124.0,478.0 127.0,478.0 130.0,478.0 130.0,478.5 133.0,478.5 136.0,478.5 139.0,478.5 142.0,478.5 145.0,478.5 145.0,479.0 148.0,479.0 151.0,479.0 154.0,479.0 157.0,479.0 160.0,479.0 160.0,479.5 163.0,479.5 166.0,479.5 169.0,479.5 172.0,479.5 172.0,480.0 175.0,480.0 178.0,480.0 181.0,480.0 184.0,480.0 187.0,480.0 187.0,480.5 190.0,480.5 193.0,480.5 196.0,480.5 199.0,480.5 202.0,480.5 202.0,481.0 205.0,481.0 208.0,481.0 211.0,481.0 214.0,481.0 217.0,481.0 217.0,481.5 220.0,481.5 223.0,481.5 226.0,481.5 229.0,481.5 229.0,482.0 232.0,482.0 235.0,482.0 238.0,482.0 241.0,482.0 244.0,482.0 244.0,482.5 247.0,482.5 250.0,482.5 253.0,482.5 256.0,482.5 259.0,482.5 262.0,482.5 265.0,482.5 268.0,482.5 271.0,482.5 274.0,482.5 277.0,482.5 280.0,482.5 283.0,482.5 286.0,482.5 289.0,482.5 292.0,482.5 295.0,482.5 298.0,482.5 301.0,482.5 304.0,482.5 307.0,482.5 310.0,482.5 313.0,482.5 316.0,482.5 319.0,482.5 319.0,483.0 322.0,483.0 325.0,483.0 328.0,483.0 331.0,483.0 334.0,483.0 337.0,483.0 340.0,483.0 343.0,483.0 346.0,483.0 349.0,483.0 352.0,483.0 355.0,483.0 358.0,483.0 361.0,483.0 364.0,483.0 367.0,483.0 370.0,483.0 373.0,483.0 376.0,483.0 379.0,483.0 382.0,483.0 385.0,483.0 388.0,483.0 391.0,483.0 394.0,483.0 397.0,483.0 400.0,483.0 403.0,483.0 406.0,483.0 409.0,483.0 412.0,483.0 415.0,483.0 418.0,483.0 421.0,483.0 424.0,483.0 427.0,483.0 430.0,483.0 433.0,483.0 436.0,483.0 439.0,483.0 442.0,483.0 445.0,483.0 448.0,483.0 451.0,483.0 454.0,483.0 454.0,483.5 457.0,483.5 460.0,483.5 463.0,483.5 466.0,483.5 469.0,483.5 472.0,483.5 475.0,483.5 478.0,483.5 481.0,483.5 484.0,483.5 487.0,483.5 490.0,483.5 493.0,483.5 496.0,483.5 499.0,483.5 502.0,483.5 505.0,483.5 508.0,483.5 511.0,483.5 514.0,483.5 517.0,483.5 520.0,483.5 523.0,483.5 526.0,483.5 529.0,483.5 532.0,483.5 535.0,483.5 538.0,483.5 541.0,483.5 544.0,483.5 547.0,483.5 550.0,483.5 553.0,483.5 556.0,483.5 559.0,483.5 562.0,483.5 565.0,483.5 568.0,483.5 571.0,483.5 574.0,483.5 577.0,483.5 580.0,483.5 583.0,483.5 586.0,483.5 589.0,483.5 589.0,484.0 592.0,484.0 595.0,484.0 598.0,484.0 601.0,484.0 604.0,484.0 607.0,484.0 610.0,484.0 613.0,484.0 616.0,484.0 619.0,484.0 622.0,484.0 625.0,484.0 628.0,484.0 631.0,484.0 634.0,484.0 637.0,484.0 640.0,484.0 643.0,484.0 646.0,484.0 649.0,484.0 652.0,484.0 655.0,484.0 658.0,484.0 661.0,484.0 664.0,484.0 667.0,484.0 670.0,484.0 673.0,484.0 676.0,484.0 679.0,484.0 682.0,484.0 685.0,484.0 688.0,484.0 691.0,484.0 694.0,484.0 697.0,484.0 700.0,484.0 703.0,484.0 706.0,484.0 709.0,484.0 712.0,484.0 715.0,484.0 718.0,484.0 721.0,484.0 724.0,484.0 727.0,484.0 730.0,484.0 733.0,484.0 736.0,484.0 739.0,484.0 742.0,484.0 745.0,484.0 748.0,484.0 751.0,484.0 754.0,484.0 757.0,484.0 760.0,484.0 763.0,484.0 766.0,484.0 769.0,484.0 772.0,484.0 775.0,484.0 778.0,484.0 781.0,484.0 784.0,484.0 787.0,484.0 790.0,484.0 793.0,484.0 796.0,484.0 799.0,484.0 802.0,484.0 805.0,484.0 808.0,484.0 811.0,484.0 814.0,484.0 817.0,484.0 820.0,484.0 823.0,484.0 826.0,484.0 829.0,484.0 832.0,484.0 835.0,484.0 838.0,484.0 841.0,484.0 844.0,484.0 847.0,484.0 850.0,484.0 853.0,484.0 856.0,484.0 859.0,484.0 862.0,484.0 865.0,484.0 868.0,484.0 871.0,484.0 874.0,484.0 877.0,484.0 880.0,484.0 883.0,484.0 886.0,484.0 889.0,484.0 892.0,484.0 895.0,484.0 898.0,484.0 901.0,484.0 904.0,484.0 907.0,484.0 910.0,484.0 913.0,484.0 916.0,484.0 916.0,483.0 919.0,483.0 922.0,483.0 925.0,483.0 928.0,483.0 931.0,483.0 934.0,483.0 937.0,483.0 940.0,483.0 943.0,483.0 946.0,483.0 949.0,483.0 952.0,483.0 955.0,483.0 958.0,483.0 961.0,483.0 964.0,483.0 967.0,483.0 970.0,483.0 973.0,483.0 976.0,483.0 979.0,483.0 982.0,483.0 985.0,483.0 988.0,483.0" fill="none" stroke="#a89a18" stroke-width="1.6" stroke-linejoin="round" stroke-linejoin="miter"/>
</svg>
<div style="position:absolute;left:4px;top:4px;font-size:7.5px;line-height:1;color:#d0d0d0;white-space:nowrap;">285A</div><div style="position:absolute;left:28px;top:2.5px;width:39px;height:9.5px;background:#3a3a3a;"></div><div style="position:absolute;left:34px;top:4px;font-size:7px;line-height:1;color:#b0b0b0;white-space:nowrap;"><span style="display:inline-block;width:1em;text-align:center">銘</span><span style="display:inline-block;width:1em;text-align:center">柄</span><span style="display:inline-block;width:1em;text-align:center">登</span><span style="display:inline-block;width:1em;text-align:center">録</span></div><div style="position:absolute;left:71px;top:4.5px;font-size:6.8px;line-height:1;color:#d0d0d0;white-space:nowrap;"><span style="display:inline-block;width:1em;text-align:center">東</span>P</div><div style="position:absolute;left:4px;top:14px;font-size:7.5px;line-height:1;color:#d0d0d0;white-space:nowrap;"><span style="display:inline-block;width:1em;text-align:center">キ</span><span style="display:inline-block;width:1em;text-align:center">オ</span><span style="display:inline-block;width:1em;text-align:center">ク</span><span style="display:inline-block;width:1em;text-align:center">シ</span><span style="display:inline-block;width:1em;text-align:center">ア</span><span style="display:inline-block;width:1em;text-align:center">H</span><span style="display:inline-block;width:1em;text-align:center">D</span></div><div style="position:absolute;left:83px;top:6px;width:20px;height:11px;background:#0a1e58;"></div><div style="position:absolute;left:87px;top:8px;font-size:7px;line-height:1;color:#3a8ae8;white-space:nowrap;"><span style="display:inline-block;width:1em;text-align:center">東</span><span style="display:inline-block;width:1em;text-align:center">証</span></div><div style="position:absolute;left:103px;top:6px;width:19px;height:11px;background:#3a3a3a;"></div><div style="position:absolute;left:106px;top:8px;font-size:7.5px;line-height:1;color:#c0c0c0;white-space:nowrap;">PTS</div><div style="position:absolute;left:124px;top:6.5px;width:9.5px;height:10.0px;background:#333333;"></div><div style="position:absolute;left:124.8px;top:6.8px;font-size:10px;line-height:1;color:#dcdcdc;white-space:nowrap;font-weight:bold;transform:scaleX(0.9);transform-origin:left">N</div><div style="position:absolute;left:127.7px;top:6.3px;width:4.999999999999986px;height:5.000000000000001px;background:#e83030;border-radius:50%"></div><div style="position:absolute;left:134.5px;top:6.5px;width:9.5px;height:10.0px;background:#333333;"></div><svg style="position:absolute;left:134px;top:6px" width="10" height="11"><path d="M2.5,9.5 L8,9.5 M3,9.5 L3,6 Q3,3.5 5.2,3.5 Q7.5,3.5 7.5,6 L7.5,9.5" fill="none" stroke="#d0d0d0" stroke-width="1.1"/><rect x="4.4" y="9.6" width="1.8" height="1.2" fill="#d0d0d0"/></svg><div style="position:absolute;left:138.6px;top:6.3px;width:5.0px;height:5.000000000000001px;background:#e83030;border-radius:50%"></div><div style="position:absolute;left:145px;top:7px;width:7.5px;height:8.5px;background:#0a0a0a;border:1px solid #6a6a6a;border-radius:2px;box-sizing:border-box"></div><svg style="position:absolute;left:145px;top:7px" width="8" height="9"><circle cx="3.8" cy="4.5" r="1.5" fill="none" stroke="#a0a0a0" stroke-width="0.9"/></svg><div style="position:absolute;left:165px;top:2px;width:32.5px;height:9.5px;background:#080808;border:1px solid #8a8a8a;border-radius:1px;box-sizing:border-box"></div><div style="position:absolute;left:174px;top:4px;font-size:7px;line-height:1;color:#c0c0c0;white-space:nowrap;"><span style="display:inline-block;width:1em;text-align:center">貸</span><span style="display:inline-block;width:1em;text-align:center">借</span></div><div style="position:absolute;left:199px;top:2px;width:33px;height:9.5px;background:#080808;border:1px solid #8a8a8a;border-radius:1px;box-sizing:border-box"></div><div style="position:absolute;left:205px;top:4px;font-size:7px;line-height:1;color:#c0c0c0;white-space:nowrap;"><span style="display:inline-block;width:1em;text-align:center">一</span><span style="display:inline-block;width:1em;text-align:center">般</span><span style="display:inline-block;width:1em;text-align:center">売</span></div><div style="position:absolute;left:4px;top:22px;width:56.5px;height:11px;background:#444444;"></div><div style="position:absolute;left:7px;top:24px;font-size:7.5px;line-height:1;color:#c8c8c8;white-space:nowrap;"><span style="display:inline-block;width:1em;text-align:center">ロ</span><span style="display:inline-block;width:1em;text-align:center">ー</span><span style="display:inline-block;width:1em;text-align:center">ソ</span><span style="display:inline-block;width:1em;text-align:center">ク</span><span style="display:inline-block;width:1em;text-align:center">足</span></div><svg style="position:absolute;left:52px;top:26px" width="6" height="4"><polygon points="0,0 6,0 3,4" fill="#e0e0e0"/></svg><div style="position:absolute;left:62px;top:22px;width:44px;height:11px;background:#444444;"></div><div style="position:absolute;left:65px;top:24px;font-size:7.5px;line-height:1;color:#c8c8c8;white-space:nowrap;">1<span style="display:inline-block;width:1em;text-align:center">分</span></div><svg style="position:absolute;left:98px;top:26px" width="6" height="4"><polygon points="0,0 6,0 3,4" fill="#e0e0e0"/></svg><div style="position:absolute;left:108px;top:22.5px;width:40.5px;height:10.5px;background:#0a0a0a;border:1px solid #3a3a3a;box-sizing:border-box"></div><div style="position:absolute;left:111px;top:24.5px;font-size:7px;line-height:1;color:#555555;white-space:nowrap;"><span style="display:inline-block;width:1em;text-align:center">期</span><span style="display:inline-block;width:1em;text-align:center">間</span><span style="display:inline-block;width:1em;text-align:center">指</span><span style="display:inline-block;width:1em;text-align:center">定</span></div><svg style="position:absolute;left:141px;top:26.5px" width="5" height="4"><polygon points="0,0 5,0 2.5,4" fill="#707070"/></svg><div style="position:absolute;left:151.5px;top:23px;width:250.5px;height:9.5px;background:#444444;"></div><div style="position:absolute;left:151.5px;top:23px;width:27.5px;height:9.5px;background:#071a4e;"></div><div style="position:absolute;left:151.0px;top:24.5px;width:28px;text-align:center;font-size:7.5px;line-height:1;color:#3c86e0">1<span style="display:inline-block;width:1em;text-align:center">日</span></div><div style="position:absolute;left:178.8px;top:24.5px;width:28px;text-align:center;font-size:7.5px;line-height:1;color:#c0c0c0">2<span style="display:inline-block;width:1em;text-align:center">日</span></div><div style="position:absolute;left:206.6px;top:24.5px;width:28px;text-align:center;font-size:7.5px;line-height:1;color:#c0c0c0">3<span style="display:inline-block;width:1em;text-align:center">日</span></div><div style="position:absolute;left:234.4px;top:24.5px;width:28px;text-align:center;font-size:7.5px;line-height:1;color:#c0c0c0">5<span style="display:inline-block;width:1em;text-align:center">日</span></div><div style="position:absolute;left:262.2px;top:24.5px;width:28px;text-align:center;font-size:7.5px;line-height:1;color:#c0c0c0">30<span style="display:inline-block;width:1em;text-align:center">本</span></div><div style="position:absolute;left:290.0px;top:24.5px;width:28px;text-align:center;font-size:7.5px;line-height:1;color:#c0c0c0">60<span style="display:inline-block;width:1em;text-align:center">本</span></div><div style="position:absolute;left:317.8px;top:24.5px;width:28px;text-align:center;font-size:7.5px;line-height:1;color:#c0c0c0">100<span style="display:inline-block;width:1em;text-align:center">本</span></div><div style="position:absolute;left:345.6px;top:24.5px;width:28px;text-align:center;font-size:7.5px;line-height:1;color:#c0c0c0">300<span style="display:inline-block;width:1em;text-align:center">本</span></div><div style="position:absolute;left:373.4px;top:24.5px;width:28px;text-align:center;font-size:7.5px;line-height:1;color:#c0c0c0">600<span style="display:inline-block;width:1em;text-align:center">本</span></div><div style="position:absolute;left:278px;top:4px;font-size:7px;line-height:1;color:#909090;white-space:nowrap;"><span style="display:inline-block;width:1em;text-align:center">現</span><span style="display:inline-block;width:1em;text-align:center">在</span><span style="display:inline-block;width:1em;text-align:center">値</span></div><div style="position:absolute;left:310px;top:4px;font-size:7.5px;line-height:1;color:#e8185c;white-space:nowrap;">6,180</div><div style="position:absolute;left:331px;top:5px;width:1.5px;height:5px;background:#20b0b0;"></div><div style="position:absolute;left:344.5px;top:4px;font-size:7.5px;line-height:1;color:#c8c8c8;white-space:nowrap;">C</div><div style="position:absolute;left:361px;top:4px;font-size:7.5px;line-height:1;color:#c8c8c8;white-space:nowrap;">15:30</div><div style="position:absolute;left:278px;top:14px;font-size:7px;line-height:1;color:#909090;white-space:nowrap;"><span style="display:inline-block;width:1em;text-align:center">前</span><span style="display:inline-block;width:1em;text-align:center">日</span><span style="display:inline-block;width:1em;text-align:center">比</span></div><div style="position:absolute;left:305px;top:14px;font-size:7.5px;line-height:1;color:#e8185c;white-space:nowrap;">+770</div><div style="position:absolute;left:325px;top:14px;font-size:7.5px;line-height:1;color:#e8185c;white-space:nowrap;">+14.23%</div><div style="position:absolute;left:358.5px;top:14px;font-size:7.5px;line-height:1;color:#1fb8a8;white-space:nowrap;">-1.18%</div><div style="position:absolute;left:434.4px;top:4px;font-size:7px;line-height:1;color:#909090;white-space:nowrap;"><span style="display:inline-block;width:1em;text-align:center">高</span><span style="display:inline-block;width:1em;text-align:center">値</span></div><div style="position:absolute;right:506.5px;top:4px;font-size:7.5px;line-height:1;color:#d0d0d0;white-space:nowrap;text-align:right;">6,410</div><div style="position:absolute;left:518.4px;top:4px;font-size:7.5px;line-height:1;color:#d0d0d0;white-space:nowrap;">09:54</div><div style="position:absolute;left:434.4px;top:14px;font-size:7px;line-height:1;color:#909090;white-space:nowrap;"><span style="display:inline-block;width:1em;text-align:center">安</span><span style="display:inline-block;width:1em;text-align:center">値</span></div><div style="position:absolute;right:506.5px;top:14px;font-size:7.5px;line-height:1;color:#d0d0d0;white-space:nowrap;text-align:right;">5,930</div><div style="position:absolute;left:518.4px;top:14px;font-size:7.5px;line-height:1;color:#d0d0d0;white-space:nowrap;">09:26</div><div style="position:absolute;left:587px;top:4px;font-size:7px;line-height:1;color:#909090;white-space:nowrap;"><span style="display:inline-block;width:1em;text-align:center">前</span><span style="display:inline-block;width:1em;text-align:center">終</span><span style="display:inline-block;width:1em;text-align:center">値</span></div><div style="position:absolute;right:303.5px;top:4px;font-size:7.5px;line-height:1;color:#d0d0d0;white-space:nowrap;text-align:right;">5,410</div><div style="position:absolute;left:720.5px;top:4px;font-size:7.5px;line-height:1;color:#d0d0d0;white-space:nowrap;">10/02</div><div style="position:absolute;left:587px;top:14px;font-size:7px;line-height:1;color:#909090;white-space:nowrap;"><span style="display:inline-block;width:1em;text-align:center">始</span><span style="display:inline-block;width:1em;text-align:center">値</span></div><div style="position:absolute;right:303.5px;top:14px;font-size:7.5px;line-height:1;color:#d0d0d0;white-space:nowrap;text-align:right;">6,300</div><div style="position:absolute;left:720.5px;top:14px;font-size:7.5px;line-height:1;color:#d0d0d0;white-space:nowrap;">09:24</div><div style="position:absolute;left:792px;top:4px;font-size:7px;line-height:1;color:#909090;white-space:nowrap;"><span style="display:inline-block;width:1em;text-align:center">時</span><span style="display:inline-block;width:1em;text-align:center">価</span><span style="display:inline-block;width:1em;text-align:center">総</span><span style="display:inline-block;width:1em;text-align:center">額</span></div><div style="position:absolute;right:100.5px;top:4px;font-size:7.5px;line-height:1;color:#d0d0d0;white-space:nowrap;text-align:right;">33,346</div><div style="position:absolute;left:925px;top:4.5px;font-size:6px;line-height:1;color:#909090;white-space:nowrap;">(<span style="display:inline-block;width:1em;text-align:center">億</span><span style="display:inline-block;width:1em;text-align:center">円</span>)</div><div style="position:absolute;left:792px;top:14px;font-size:7px;line-height:1;color:#909090;white-space:nowrap;"><span style="display:inline-block;width:1em;text-align:center">出</span><span style="display:inline-block;width:1em;text-align:center">来</span><span style="display:inline-block;width:1em;text-align:center">高</span></div><div style="position:absolute;right:100.5px;top:14px;font-size:7.5px;line-height:1;color:#d0d0d0;white-space:nowrap;text-align:right;">31,985,900</div><div style="position:absolute;right:33px;top:14px;font-size:7.5px;line-height:1;color:#d0d0d0;white-space:nowrap;text-align:right;">200,039,080</div><div style="position:absolute;left:993.7px;top:14.5px;font-size:6px;line-height:1;color:#909090;white-space:nowrap;">(<span style="display:inline-block;width:1em;text-align:center">千</span><span style="display:inline-block;width:1em;text-align:center">円</span>)</div><div style="position:absolute;left:930px;top:23px;width:37.5px;height:9.5px;background:#484848;"></div><div style="position:absolute;left:935px;top:24.8px;font-size:5.5px;line-height:1;color:#c8c8c8;white-space:nowrap;"><span style="display:inline-block;width:1em;text-align:center">テ</span><span style="display:inline-block;width:1em;text-align:center">ク</span><span style="display:inline-block;width:1em;text-align:center">ニ</span><span style="display:inline-block;width:1em;text-align:center">カ</span><span style="display:inline-block;width:1em;text-align:center">ル</span></div><div style="position:absolute;left:969.7px;top:23px;width:9.0px;height:9.5px;background:#0a1c50;"></div><svg style="position:absolute;left:970px;top:23px" width="9" height="9"><line x1="2" y1="7.5" x2="7" y2="2" stroke="#3a80e0" stroke-width="1.6"/></svg><div style="position:absolute;left:980.3px;top:23px;width:9.300000000000068px;height:9.5px;background:#0a1c50;"></div><svg style="position:absolute;left:980px;top:23px" width="10" height="10"><circle cx="4.5" cy="4.5" r="2.6" fill="none" stroke="#3a80e0" stroke-width="1.2"/><line x1="6.5" y1="6.5" x2="9" y2="9" stroke="#3a80e0" stroke-width="1.3"/></svg><div style="position:absolute;left:991.5px;top:23px;width:9.5px;height:9.5px;background:#3a3a3a;"></div><div style="position:absolute;left:992.5px;top:24.5px;font-size:7.5px;line-height:1;color:#d0d0d0;white-space:nowrap;"><span style="display:inline-block;width:1em;text-align:center">出</span></div><div style="position:absolute;left:1003px;top:23px;width:9px;height:9.5px;background:#0a1c50;"></div><svg style="position:absolute;left:1003px;top:23px" width="9" height="9"><polygon points="1,8 8,2 8,8" fill="#3a90f0"/></svg><div style="position:absolute;left:1014px;top:23px;width:10px;height:9.5px;background:#3a3a3a;"></div><div style="position:absolute;left:1016.5px;top:25px;width:5.0px;height:6px;background:#d0d0d0;"></div><div style="position:absolute;left:1017.5px;top:26px;width:3.0px;height:2px;background:#3a3a3a;"></div>
<div style="position:absolute;left:5.7px;top:38.5px;font-size:6px;line-height:1;color:#c0c0c0;white-space:nowrap;"><span style="display:inline-block;width:1em;text-align:center">単</span><span style="display:inline-block;width:1em;text-align:center">純</span><span style="display:inline-block;width:1em;text-align:center">移</span><span style="display:inline-block;width:1em;text-align:center">動</span><span style="display:inline-block;width:1em;text-align:center">平</span><span style="display:inline-block;width:1em;text-align:center">均</span></div><div style="position:absolute;left:45px;top:38.5px;font-size:6px;line-height:1;color:#e0e0e0;white-space:nowrap;">SMA(5)</div><div style="position:absolute;left:117.5px;top:38.5px;font-size:6.3px;line-height:1;color:#8a20d0;white-space:nowrap;">SMA(50)</div><div style="position:absolute;left:193px;top:38.5px;font-size:6px;line-height:1;color:#d0d0d0;white-space:nowrap;"><span style="display:inline-block;width:1em;text-align:center">ボ</span><span style="display:inline-block;width:1em;text-align:center">リ</span><span style="display:inline-block;width:1em;text-align:center">ン</span><span style="display:inline-block;width:1em;text-align:center">ジ</span><span style="display:inline-block;width:1em;text-align:center">ャ</span><span style="display:inline-block;width:1em;text-align:center">ー</span><span style="display:inline-block;width:1em;text-align:center">バ</span><span style="display:inline-block;width:1em;text-align:center">ン</span><span style="display:inline-block;width:1em;text-align:center">ド</span></div><div style="position:absolute;left:251px;top:38.5px;font-size:6px;line-height:1;color:#8a8a8a;white-space:nowrap;"><span style="display:inline-block;width:1em;text-align:center">上</span><span style="display:inline-block;width:1em;text-align:center">限</span>3(12,3.00)</div><div style="position:absolute;left:295.7px;top:38.5px;font-size:6px;line-height:1;color:#8a8a8a;white-space:nowrap;"><span style="display:inline-block;width:1em;text-align:center">上</span><span style="display:inline-block;width:1em;text-align:center">限</span>4(12,2.00)</div><div style="position:absolute;left:340.6px;top:38.5px;font-size:6px;line-height:1;color:#8a8a8a;white-space:nowrap;"><span style="display:inline-block;width:1em;text-align:center">上</span><span style="display:inline-block;width:1em;text-align:center">限</span>5(12,1.00)</div><div style="position:absolute;left:384.6px;top:38.5px;font-size:6px;line-height:1;color:#8a8a8a;white-space:nowrap;"><span style="display:inline-block;width:1em;text-align:center">中</span><span style="display:inline-block;width:1em;text-align:center">央</span>(12)</div><div style="position:absolute;left:411.5px;top:38.5px;font-size:6px;line-height:1;color:#8a8a8a;white-space:nowrap;"><span style="display:inline-block;width:1em;text-align:center">下</span><span style="display:inline-block;width:1em;text-align:center">限</span>5(12,1.00)</div><div style="position:absolute;left:456px;top:38.5px;font-size:6px;line-height:1;color:#8a8a8a;white-space:nowrap;"><span style="display:inline-block;width:1em;text-align:center">下</span><span style="display:inline-block;width:1em;text-align:center">限</span>4(12,2.00)</div><div style="position:absolute;left:500px;top:38.5px;font-size:6px;line-height:1;color:#8a8a8a;white-space:nowrap;"><span style="display:inline-block;width:1em;text-align:center">下</span><span style="display:inline-block;width:1em;text-align:center">限</span>3(12,3.00)</div>
<div style="position:absolute;left:51px;top:39px;width:71px;height:45px;background:#ffffff;"></div><div style="position:absolute;left:56px;top:45px;font-size:10px;line-height:1;color:#1a1a1a;white-space:nowrap;font-weight:bold">09 : 35</div><div style="position:absolute;left:56px;top:62px;font-size:10px;line-height:1;color:#1a1a1a;white-space:nowrap;font-weight:bold">6,210<span style="display:inline-block;width:1em;text-align:center">　</span><span style="display:inline-block;width:1em;text-align:center">買</span><span style="display:inline-block;width:1em;text-align:center">い</span></div><div style="position:absolute;left:145px;top:39px;width:72px;height:45px;background:#ffffff;"></div><div style="position:absolute;left:150px;top:45px;font-size:10px;line-height:1;color:#1a1a1a;white-space:nowrap;font-weight:bold">09 : 58</div><div style="position:absolute;left:150px;top:62px;font-size:10px;line-height:1;color:#1a1a1a;white-space:nowrap;font-weight:bold">6,310<span style="display:inline-block;width:1em;text-align:center">　</span><span style="display:inline-block;width:1em;text-align:center">売</span><span style="display:inline-block;width:1em;text-align:center">り</span></div>
<div style="position:absolute;left:14.5px;top:299px;font-size:6px;line-height:1;color:#20b8b8;white-space:nowrap;"><span style="display:inline-block;width:1em;text-align:center">最</span><span style="display:inline-block;width:1em;text-align:center">安</span><span style="display:inline-block;width:1em;text-align:center">値</span>:5,410</div><div style="position:absolute;left:180.3px;top:136.5px;font-size:6px;line-height:1;color:#e8185c;white-space:nowrap;"><span style="display:inline-block;width:1em;text-align:center">高</span><span style="display:inline-block;width:1em;text-align:center">値</span>:6,410</div><div style="position:absolute;left:998px;top:394.49999999999994px;font-size:6.3px;line-height:1;color:#c0c0c0;white-space:nowrap;">4750</div><div style="position:absolute;left:998px;top:356.09999999999997px;font-size:6.3px;line-height:1;color:#c0c0c0;white-space:nowrap;">5000</div><div style="position:absolute;left:998px;top:317.69999999999993px;font-size:6.3px;line-height:1;color:#c0c0c0;white-space:nowrap;">5250</div><div style="position:absolute;left:998px;top:279.29999999999995px;font-size:6.3px;line-height:1;color:#c0c0c0;white-space:nowrap;">5500</div><div style="position:absolute;left:998px;top:240.89999999999998px;font-size:6.3px;line-height:1;color:#c0c0c0;white-space:nowrap;">5750</div><div style="position:absolute;left:998px;top:202.5px;font-size:6.3px;line-height:1;color:#c0c0c0;white-space:nowrap;">6000</div><div style="position:absolute;left:998px;top:164.09999999999997px;font-size:6.3px;line-height:1;color:#c0c0c0;white-space:nowrap;">6250</div><div style="position:absolute;left:998px;top:125.7px;font-size:6.3px;line-height:1;color:#c0c0c0;white-space:nowrap;">6500</div><div style="position:absolute;left:998px;top:87.3px;font-size:6.3px;line-height:1;color:#c0c0c0;white-space:nowrap;">6750</div><div style="position:absolute;left:998px;top:48.900000000000006px;font-size:6.3px;line-height:1;color:#c0c0c0;white-space:nowrap;">7000</div><div style="position:absolute;left:995px;top:174px;width:29px;height:8px;background:#ffffff;"></div><div style="position:absolute;left:1002px;top:174.8px;font-size:6.5px;line-height:1;color:#202020;white-space:nowrap;">6,180</div><div style="position:absolute;left:5px;top:434px;font-size:6px;line-height:1;color:#c0c0c0;white-space:nowrap;"><span style="display:inline-block;width:1em;text-align:center">出</span><span style="display:inline-block;width:1em;text-align:center">来</span><span style="display:inline-block;width:1em;text-align:center">高</span></div><div style="position:absolute;left:998.6px;top:436px;font-size:6.2px;line-height:1;color:#c8c8c8;white-space:nowrap;">2500000</div><div style="position:absolute;left:999px;top:463.4px;font-size:6.3px;line-height:1;color:#c0c0c0;white-space:nowrap;">0</div><div style="position:absolute;left:999.4px;top:476.5px;font-size:6.3px;line-height:1;color:#c0c0c0;white-space:nowrap;">100</div><div style="position:absolute;left:5px;top:457.8px;font-size:6.8px;line-height:1;color:#e0e0e0;white-space:nowrap;transform:scaleX(0.82);transform-origin:left">RCI</div><div style="position:absolute;left:18px;top:457.8px;font-size:6.8px;line-height:1;color:#c0ac20;white-space:nowrap;transform:scaleX(0.82);transform-origin:left">RCI1(9)</div><div style="position:absolute;left:42px;top:457.8px;font-size:6.8px;line-height:1;color:#3a78e8;white-space:nowrap;transform:scaleX(0.82);transform-origin:left">RCI2(21)</div><div style="position:absolute;left:70px;top:457.8px;font-size:6.8px;line-height:1;color:#e86a20;white-space:nowrap;transform:scaleX(0.82);transform-origin:left">RCI3(5)</div><div style="position:absolute;left:93px;top:457.8px;font-size:6.8px;line-height:1;color:#22a878;white-space:nowrap;transform:scaleX(0.82);transform-origin:left">RCI4(5)</div><div style="position:absolute;left:5px;top:479.3px;font-size:6.8px;line-height:1;color:#e0e0e0;white-space:nowrap;transform:scaleX(0.82);transform-origin:left">ATR</div><div style="position:absolute;left:19.5px;top:479.3px;font-size:6.8px;line-height:1;color:#c0ac20;white-space:nowrap;transform:scaleX(0.82);transform-origin:left">ATR(14)</div><div style="position:absolute;left:5px;top:489px;font-size:7px;line-height:1;color:#e0e0e0;white-space:nowrap;font-weight:bold">10/03</div><div style="position:absolute;left:452px;top:487.5px;width:1px;height:1.5px;background:#909090;"></div><div style="position:absolute;left:92px;top:487.5px;width:1px;height:1.5px;background:#909090;"></div><div style="position:absolute;left:94px;top:489.5px;font-size:6.5px;line-height:1;color:#c0c0c0;white-space:nowrap;">09:30</div><div style="position:absolute;left:181px;top:487.5px;width:1px;height:1.5px;background:#909090;"></div><div style="position:absolute;left:183px;top:489.5px;font-size:6.5px;line-height:1;color:#c0c0c0;white-space:nowrap;">10:00</div><div style="position:absolute;left:270.3px;top:487.5px;width:1.0px;height:1.5px;background:#909090;"></div><div style="position:absolute;left:272.3px;top:489.5px;font-size:6.5px;line-height:1;color:#c0c0c0;white-space:nowrap;">10:30</div><div style="position:absolute;left:360px;top:487.5px;width:1px;height:1.5px;background:#909090;"></div><div style="position:absolute;left:362px;top:489.5px;font-size:6.5px;line-height:1;color:#c0c0c0;white-space:nowrap;">11:00</div><div style="position:absolute;left:449px;top:487.5px;width:1px;height:1.5px;background:#909090;"></div><div style="position:absolute;left:451px;top:489.5px;font-size:6.5px;line-height:1;color:#c0c0c0;white-space:nowrap;">11:30</div><div style="position:absolute;left:540px;top:487.5px;width:1px;height:1.5px;background:#909090;"></div><div style="position:absolute;left:542px;top:489.5px;font-size:6.5px;line-height:1;color:#c0c0c0;white-space:nowrap;">13:00</div><div style="position:absolute;left:630.5px;top:487.5px;width:1.0px;height:1.5px;background:#909090;"></div><div style="position:absolute;left:632.5px;top:489.5px;font-size:6.5px;line-height:1;color:#c0c0c0;white-space:nowrap;">13:30</div><div style="position:absolute;left:719px;top:487.5px;width:1px;height:1.5px;background:#909090;"></div><div style="position:absolute;left:721px;top:489.5px;font-size:6.5px;line-height:1;color:#c0c0c0;white-space:nowrap;">14:00</div><div style="position:absolute;left:807.8px;top:487.5px;width:1.0px;height:1.5px;background:#909090;"></div><div style="position:absolute;left:809.8px;top:489.5px;font-size:6.5px;line-height:1;color:#c0c0c0;white-space:nowrap;">14:30</div><div style="position:absolute;left:897px;top:487.5px;width:1px;height:1.5px;background:#909090;"></div><div style="position:absolute;left:899px;top:489.5px;font-size:6.5px;line-height:1;color:#c0c0c0;white-space:nowrap;">15:00</div>
</div></div>
</body></html>
